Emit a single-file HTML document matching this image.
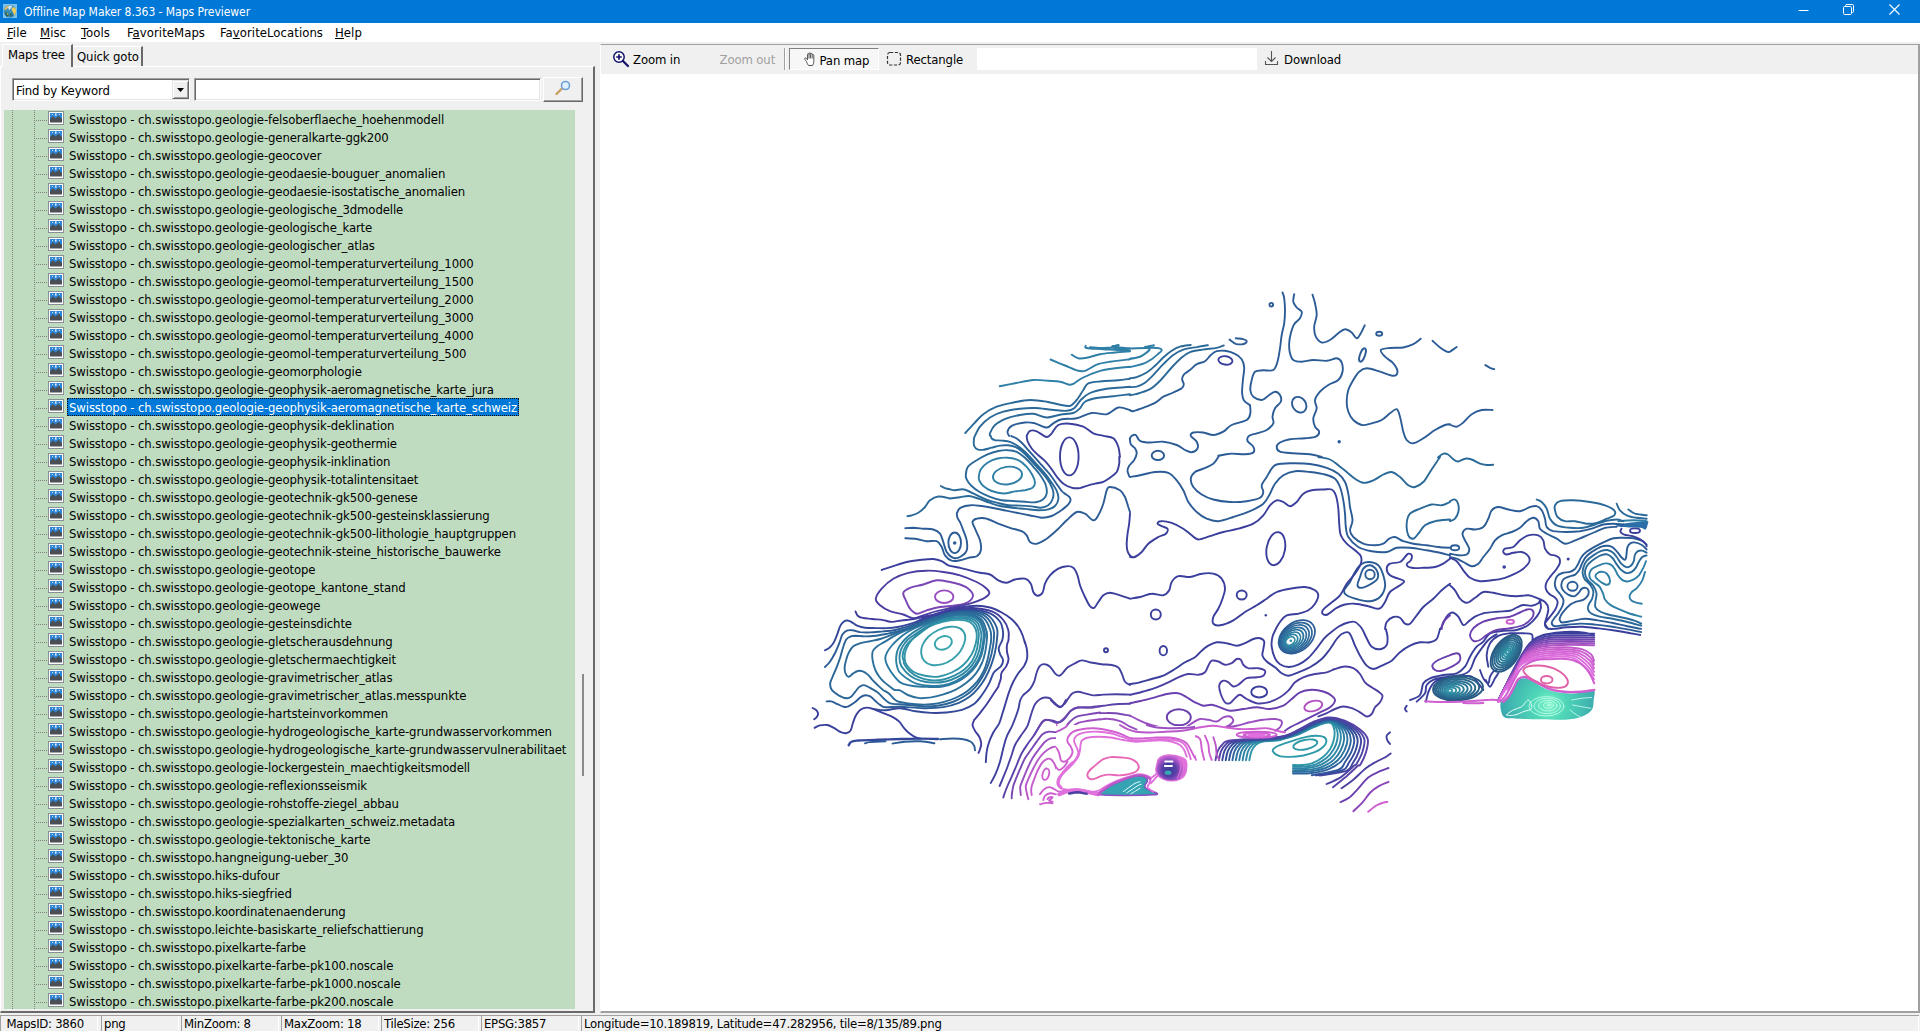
<!DOCTYPE html>
<html><head><meta charset="utf-8"><title>Offline Map Maker 8.363 - Maps Previewer</title>
<style>
*{box-sizing:border-box;margin:0;padding:0}
html,body{width:1920px;height:1032px;overflow:hidden;background:#f0f0f0}
body{position:relative;font-family:"DejaVu Sans Condensed","Liberation Sans",sans-serif;font-size:13px;color:#000;letter-spacing:-0.12px}
#title{position:absolute;left:0;top:0;width:1920px;height:23px;background:#0078d7;color:#fff}
#appic{position:absolute;left:3px;top:4px}
#ttl{position:absolute;left:24px;top:4px;line-height:16px;white-space:nowrap;font-size:12px;letter-spacing:-0.05px}
#wmin{position:absolute;left:1798px;top:5px}
#wmax{position:absolute;left:1843px;top:4px}
#wcls{position:absolute;left:1889px;top:4px}
#menu{position:absolute;left:0;top:23px;width:1920px;height:19px;background:#fff}
#menu span{position:absolute;top:2px;line-height:16px;white-space:nowrap;letter-spacing:0.05px}
#menu u{text-decoration:underline;text-underline-offset:1px}
#tab1{position:absolute;left:2px;top:44px;width:71px;height:23px;background:#f0f0f0;border-top:1px solid #fff;border-left:1px solid #fff;border-right:2px solid #696969;padding:2px 0 0 5px;line-height:16px;white-space:nowrap;z-index:2}
#tab2{position:absolute;left:73px;top:46px;width:70px;height:20px;background:#f0f0f0;border-top:1px solid #fff;border-right:2px solid #696969;padding:2px 0 0 4px;line-height:16px;white-space:nowrap}
#tabpg{position:absolute;left:0;top:66px;width:595px;height:947px;border-top:1px solid #fff;border-left:1px solid #fff;border-right:2px solid #696969;border-bottom:2px solid #696969;background:#f0f0f0}
#combo{position:absolute;left:12px;top:78px;width:178px;height:23px;background:#fff;border:1px solid;border-color:#a0a0a0 #fff #fff #a0a0a0;box-shadow:inset 1px 1px 0 #696969,inset -1px -1px 0 #e3e3e3}
#combo span{position:absolute;left:3px;top:4px;line-height:16px;white-space:nowrap}
#cbtn{position:absolute;right:0px;top:1px;width:17px;height:19px;background:#f0f0f0;border:1px solid;border-color:#e3e3e3 #696969 #696969 #e3e3e3;box-shadow:inset 1px 1px 0 #fff,inset -1px -1px 0 #a0a0a0}
#cbtn svg{position:absolute;left:4px;top:7px}
#edit{position:absolute;left:194px;top:78px;width:347px;height:23px;background:#fff;border:1px solid;border-color:#a0a0a0 #fff #fff #a0a0a0;box-shadow:inset 1px 1px 0 #696969,inset -1px -1px 0 #e3e3e3}
#sbtn{position:absolute;left:543px;top:77px;width:40px;height:25px;background:#f0f0f0;border:1px solid;border-color:#fff #696969 #696969 #fff;box-shadow:inset -1px -1px 0 #a0a0a0}
#sbtn svg{position:absolute;left:10px;top:2px}
#tree{position:absolute;left:4px;top:110px;width:570.5px;height:899.3px;background:#c0dcc0;overflow:hidden}
.vl{position:absolute;top:0;width:1px;height:900px;background-image:linear-gradient(to bottom,#808080 50%,transparent 50%);background-size:1px 2px}
.row{position:relative;height:18px;white-space:nowrap}
.hl{position:absolute;left:32px;top:10px;width:12px;height:1px;background-image:linear-gradient(to right,#808080 50%,transparent 50%);background-size:2px 1px}
.ic{position:absolute;left:44px;top:1px}
.t{position:absolute;left:63px;top:0;height:18px;line-height:20px;padding:0 2px}
.t.sel{background:#0078d7;color:#fff;outline:1px dotted #111;outline-offset:-1px}
#scroll{position:absolute;left:582px;top:674px;width:2px;height:102px;background:#8a8a8a}
#right{position:absolute;left:600px;top:44px;width:1320px;height:969px;background:#fff;border-top:1px solid #a0a0a0;border-left:1px solid #fff;border-right:2px solid #a0a0a0;border-bottom:2px solid #a0a0a0}
#tb{position:absolute;left:0;top:0;width:1317px;height:29px;background:#f0f0f0}
.tl{position:absolute;top:7px;line-height:16px;white-space:nowrap}
.tl.dis{color:#a0a0a0}
.sep{position:absolute;left:183px;top:3px;width:2px;height:22px;border-left:1px solid #a0a0a0;border-right:1px solid #fff}
#pan{position:absolute;left:188px;top:3px;width:90px;height:22px;background:#f7f7f7;border:1px solid #fff;border-top-color:#808080;border-left-color:#808080}
#tbedit{position:absolute;left:376px;top:3px;width:280px;height:22px;background:#fff}
#map{position:absolute;left:0;top:29px;width:1317px;height:937px;overflow:hidden}
#hsep{position:absolute;left:0;top:1015px;width:1919px;height:1px;background:#a0a0a0}
#status{position:absolute;left:0;top:1016px;width:1920px;height:16px;background:#f0f0f0;border-bottom:1px solid #fff}
.sp{position:absolute;top:0;height:15px;border-left:1px solid #a0a0a0;border-right:1px solid #fff}
.sp span{position:absolute;left:2px;top:-0.5px;letter-spacing:-0.28px;line-height:16px;white-space:nowrap}

</style></head>
<body>
<div id="title">
  <svg id="appic" width="14" height="14" viewBox="0 0 14 14"><rect x="0" y="0" width="14" height="14" fill="#7cc2ee"/><circle cx="7" cy="7.2" r="6.3" fill="#3d8fb8"/><path d="M1.2 5.5 C2 3 4 1.6 6 1.4 C5.5 3 4.6 4.4 3 5.6 C2.4 6 1.6 6 1.2 5.5Z" fill="#f0b860"/><path d="M8.8 4.5 C10 2.6 12 3 12.8 5 C13.4 7.4 12.8 10 11.4 11.8 C10.6 10 10.8 8.6 9.6 7.4 C8.8 6.6 8.4 5.4 8.8 4.5Z" fill="#f2cc5a"/><path d="M5.2 2.2 C6.5 1.2 8.5 1.4 9.2 2.6 C8.6 4.2 7.4 5.4 6 6 C5.4 4.8 5 3.4 5.2 2.2Z" fill="#cfe6f2"/><path d="M2 8.5 C3.5 8 5.5 9 6 11 C5.6 12.4 4.6 13 3.6 12.6 C2.6 11.6 2 10 2 8.5Z" fill="#2a5f58"/><path d="M3.6 9 C4.6 9.2 5.4 10 5.4 11.2 C4.6 11 3.8 10.2 3.6 9Z" fill="#e8c850"/><path d="M7 9 C8.4 8.6 9.6 9.6 9.8 11.4 C9 12.8 7.8 13.2 7 12.6 C6.6 11.4 6.6 10 7 9Z" fill="#2c6a78"/></svg>
  <span id="ttl">Offline Map Maker 8.363 - Maps Previewer</span>
  <svg id="wmin" width="12" height="12" viewBox="0 0 12 12"><path d="M0.5 5.5 H10.5" stroke="#fff" stroke-width="1"/></svg>
  <svg id="wmax" width="12" height="12" viewBox="0 0 12 12"><rect x="0.5" y="2.5" width="8" height="8" rx="1.2" fill="none" stroke="#fff"/><path d="M2.5 2.5 V1.7 Q2.5 0.5 3.7 0.5 H9.3 Q10.5 0.5 10.5 1.7 V7.3 Q10.5 8.5 9.3 8.5 H8.5" fill="none" stroke="#fff"/></svg>
  <svg id="wcls" width="12" height="12" viewBox="0 0 12 12"><path d="M0.5 0.5 L10.5 10.5 M10.5 0.5 L0.5 10.5" stroke="#fff" stroke-width="1.1"/></svg>
</div>
<div id="menu">
  <span style="left:7px"><u>F</u>ile</span>
  <span style="left:40px"><u>M</u>isc</span>
  <span style="left:81px"><u>T</u>ools</span>
  <span style="left:127px">F<u>a</u>voriteMaps</span>
  <span style="left:220px">Fa<u>v</u>oriteLocations</span>
  <span style="left:335px"><u>H</u>elp</span>
</div>
<div id="tab1">Maps tree</div>
<div id="tab2">Quick goto</div>
<div id="tabpg"></div>
<div id="combo"><span>Find by Keyword</span><div id="cbtn"><svg width="7" height="4" viewBox="0 0 7 4"><path d="M0 0 H7 L3.5 4Z" fill="#000"/></svg></div></div>
<div id="edit"></div>
<div id="sbtn"><svg width="18" height="16" viewBox="0 0 18 16"><path d="M2.5 14 L8.5 8" stroke="#c8a064" stroke-width="2.4" stroke-linecap="round"/><circle cx="11.5" cy="5.5" r="4" fill="#dff0ff" stroke="#6f9fd8" stroke-width="1.6"/></svg></div>
<div id="tree">
<i class="vl" style="left:8px"></i><i class="vl" style="left:30px"></i>
<div class="row"><i class="hl"></i><svg class="ic" width="16" height="14" viewBox="0 0 16 14"><rect x="0.5" y="0.5" width="15" height="13" fill="#fff" stroke="#8a8f96"/><rect x="2" y="2" width="12" height="6" fill="#2f86d6"/><path d="M2 11.5 V8 L5 5.2 L7.6 7.6 L10.6 4.8 L14 8 V11.5 Z" fill="#4a4f55"/><rect x="4" y="3" width="1" height="1" fill="#cfe6ff"/><rect x="7" y="2.6" width="1.6" height="2" fill="#e6f2ff"/><rect x="11" y="3" width="1" height="1" fill="#cfe6ff"/></svg><span class="t">Swisstopo - ch.swisstopo.geologie-felsoberflaeche_hoehenmodell</span></div>
<div class="row"><i class="hl"></i><svg class="ic" width="16" height="14" viewBox="0 0 16 14"><rect x="0.5" y="0.5" width="15" height="13" fill="#fff" stroke="#8a8f96"/><rect x="2" y="2" width="12" height="6" fill="#2f86d6"/><path d="M2 11.5 V8 L5 5.2 L7.6 7.6 L10.6 4.8 L14 8 V11.5 Z" fill="#4a4f55"/><rect x="4" y="3" width="1" height="1" fill="#cfe6ff"/><rect x="7" y="2.6" width="1.6" height="2" fill="#e6f2ff"/><rect x="11" y="3" width="1" height="1" fill="#cfe6ff"/></svg><span class="t">Swisstopo - ch.swisstopo.geologie-generalkarte-ggk200</span></div>
<div class="row"><i class="hl"></i><svg class="ic" width="16" height="14" viewBox="0 0 16 14"><rect x="0.5" y="0.5" width="15" height="13" fill="#fff" stroke="#8a8f96"/><rect x="2" y="2" width="12" height="6" fill="#2f86d6"/><path d="M2 11.5 V8 L5 5.2 L7.6 7.6 L10.6 4.8 L14 8 V11.5 Z" fill="#4a4f55"/><rect x="4" y="3" width="1" height="1" fill="#cfe6ff"/><rect x="7" y="2.6" width="1.6" height="2" fill="#e6f2ff"/><rect x="11" y="3" width="1" height="1" fill="#cfe6ff"/></svg><span class="t">Swisstopo - ch.swisstopo.geologie-geocover</span></div>
<div class="row"><i class="hl"></i><svg class="ic" width="16" height="14" viewBox="0 0 16 14"><rect x="0.5" y="0.5" width="15" height="13" fill="#fff" stroke="#8a8f96"/><rect x="2" y="2" width="12" height="6" fill="#2f86d6"/><path d="M2 11.5 V8 L5 5.2 L7.6 7.6 L10.6 4.8 L14 8 V11.5 Z" fill="#4a4f55"/><rect x="4" y="3" width="1" height="1" fill="#cfe6ff"/><rect x="7" y="2.6" width="1.6" height="2" fill="#e6f2ff"/><rect x="11" y="3" width="1" height="1" fill="#cfe6ff"/></svg><span class="t">Swisstopo - ch.swisstopo.geologie-geodaesie-bouguer_anomalien</span></div>
<div class="row"><i class="hl"></i><svg class="ic" width="16" height="14" viewBox="0 0 16 14"><rect x="0.5" y="0.5" width="15" height="13" fill="#fff" stroke="#8a8f96"/><rect x="2" y="2" width="12" height="6" fill="#2f86d6"/><path d="M2 11.5 V8 L5 5.2 L7.6 7.6 L10.6 4.8 L14 8 V11.5 Z" fill="#4a4f55"/><rect x="4" y="3" width="1" height="1" fill="#cfe6ff"/><rect x="7" y="2.6" width="1.6" height="2" fill="#e6f2ff"/><rect x="11" y="3" width="1" height="1" fill="#cfe6ff"/></svg><span class="t">Swisstopo - ch.swisstopo.geologie-geodaesie-isostatische_anomalien</span></div>
<div class="row"><i class="hl"></i><svg class="ic" width="16" height="14" viewBox="0 0 16 14"><rect x="0.5" y="0.5" width="15" height="13" fill="#fff" stroke="#8a8f96"/><rect x="2" y="2" width="12" height="6" fill="#2f86d6"/><path d="M2 11.5 V8 L5 5.2 L7.6 7.6 L10.6 4.8 L14 8 V11.5 Z" fill="#4a4f55"/><rect x="4" y="3" width="1" height="1" fill="#cfe6ff"/><rect x="7" y="2.6" width="1.6" height="2" fill="#e6f2ff"/><rect x="11" y="3" width="1" height="1" fill="#cfe6ff"/></svg><span class="t">Swisstopo - ch.swisstopo.geologie-geologische_3dmodelle</span></div>
<div class="row"><i class="hl"></i><svg class="ic" width="16" height="14" viewBox="0 0 16 14"><rect x="0.5" y="0.5" width="15" height="13" fill="#fff" stroke="#8a8f96"/><rect x="2" y="2" width="12" height="6" fill="#2f86d6"/><path d="M2 11.5 V8 L5 5.2 L7.6 7.6 L10.6 4.8 L14 8 V11.5 Z" fill="#4a4f55"/><rect x="4" y="3" width="1" height="1" fill="#cfe6ff"/><rect x="7" y="2.6" width="1.6" height="2" fill="#e6f2ff"/><rect x="11" y="3" width="1" height="1" fill="#cfe6ff"/></svg><span class="t">Swisstopo - ch.swisstopo.geologie-geologische_karte</span></div>
<div class="row"><i class="hl"></i><svg class="ic" width="16" height="14" viewBox="0 0 16 14"><rect x="0.5" y="0.5" width="15" height="13" fill="#fff" stroke="#8a8f96"/><rect x="2" y="2" width="12" height="6" fill="#2f86d6"/><path d="M2 11.5 V8 L5 5.2 L7.6 7.6 L10.6 4.8 L14 8 V11.5 Z" fill="#4a4f55"/><rect x="4" y="3" width="1" height="1" fill="#cfe6ff"/><rect x="7" y="2.6" width="1.6" height="2" fill="#e6f2ff"/><rect x="11" y="3" width="1" height="1" fill="#cfe6ff"/></svg><span class="t">Swisstopo - ch.swisstopo.geologie-geologischer_atlas</span></div>
<div class="row"><i class="hl"></i><svg class="ic" width="16" height="14" viewBox="0 0 16 14"><rect x="0.5" y="0.5" width="15" height="13" fill="#fff" stroke="#8a8f96"/><rect x="2" y="2" width="12" height="6" fill="#2f86d6"/><path d="M2 11.5 V8 L5 5.2 L7.6 7.6 L10.6 4.8 L14 8 V11.5 Z" fill="#4a4f55"/><rect x="4" y="3" width="1" height="1" fill="#cfe6ff"/><rect x="7" y="2.6" width="1.6" height="2" fill="#e6f2ff"/><rect x="11" y="3" width="1" height="1" fill="#cfe6ff"/></svg><span class="t">Swisstopo - ch.swisstopo.geologie-geomol-temperaturverteilung_1000</span></div>
<div class="row"><i class="hl"></i><svg class="ic" width="16" height="14" viewBox="0 0 16 14"><rect x="0.5" y="0.5" width="15" height="13" fill="#fff" stroke="#8a8f96"/><rect x="2" y="2" width="12" height="6" fill="#2f86d6"/><path d="M2 11.5 V8 L5 5.2 L7.6 7.6 L10.6 4.8 L14 8 V11.5 Z" fill="#4a4f55"/><rect x="4" y="3" width="1" height="1" fill="#cfe6ff"/><rect x="7" y="2.6" width="1.6" height="2" fill="#e6f2ff"/><rect x="11" y="3" width="1" height="1" fill="#cfe6ff"/></svg><span class="t">Swisstopo - ch.swisstopo.geologie-geomol-temperaturverteilung_1500</span></div>
<div class="row"><i class="hl"></i><svg class="ic" width="16" height="14" viewBox="0 0 16 14"><rect x="0.5" y="0.5" width="15" height="13" fill="#fff" stroke="#8a8f96"/><rect x="2" y="2" width="12" height="6" fill="#2f86d6"/><path d="M2 11.5 V8 L5 5.2 L7.6 7.6 L10.6 4.8 L14 8 V11.5 Z" fill="#4a4f55"/><rect x="4" y="3" width="1" height="1" fill="#cfe6ff"/><rect x="7" y="2.6" width="1.6" height="2" fill="#e6f2ff"/><rect x="11" y="3" width="1" height="1" fill="#cfe6ff"/></svg><span class="t">Swisstopo - ch.swisstopo.geologie-geomol-temperaturverteilung_2000</span></div>
<div class="row"><i class="hl"></i><svg class="ic" width="16" height="14" viewBox="0 0 16 14"><rect x="0.5" y="0.5" width="15" height="13" fill="#fff" stroke="#8a8f96"/><rect x="2" y="2" width="12" height="6" fill="#2f86d6"/><path d="M2 11.5 V8 L5 5.2 L7.6 7.6 L10.6 4.8 L14 8 V11.5 Z" fill="#4a4f55"/><rect x="4" y="3" width="1" height="1" fill="#cfe6ff"/><rect x="7" y="2.6" width="1.6" height="2" fill="#e6f2ff"/><rect x="11" y="3" width="1" height="1" fill="#cfe6ff"/></svg><span class="t">Swisstopo - ch.swisstopo.geologie-geomol-temperaturverteilung_3000</span></div>
<div class="row"><i class="hl"></i><svg class="ic" width="16" height="14" viewBox="0 0 16 14"><rect x="0.5" y="0.5" width="15" height="13" fill="#fff" stroke="#8a8f96"/><rect x="2" y="2" width="12" height="6" fill="#2f86d6"/><path d="M2 11.5 V8 L5 5.2 L7.6 7.6 L10.6 4.8 L14 8 V11.5 Z" fill="#4a4f55"/><rect x="4" y="3" width="1" height="1" fill="#cfe6ff"/><rect x="7" y="2.6" width="1.6" height="2" fill="#e6f2ff"/><rect x="11" y="3" width="1" height="1" fill="#cfe6ff"/></svg><span class="t">Swisstopo - ch.swisstopo.geologie-geomol-temperaturverteilung_4000</span></div>
<div class="row"><i class="hl"></i><svg class="ic" width="16" height="14" viewBox="0 0 16 14"><rect x="0.5" y="0.5" width="15" height="13" fill="#fff" stroke="#8a8f96"/><rect x="2" y="2" width="12" height="6" fill="#2f86d6"/><path d="M2 11.5 V8 L5 5.2 L7.6 7.6 L10.6 4.8 L14 8 V11.5 Z" fill="#4a4f55"/><rect x="4" y="3" width="1" height="1" fill="#cfe6ff"/><rect x="7" y="2.6" width="1.6" height="2" fill="#e6f2ff"/><rect x="11" y="3" width="1" height="1" fill="#cfe6ff"/></svg><span class="t">Swisstopo - ch.swisstopo.geologie-geomol-temperaturverteilung_500</span></div>
<div class="row"><i class="hl"></i><svg class="ic" width="16" height="14" viewBox="0 0 16 14"><rect x="0.5" y="0.5" width="15" height="13" fill="#fff" stroke="#8a8f96"/><rect x="2" y="2" width="12" height="6" fill="#2f86d6"/><path d="M2 11.5 V8 L5 5.2 L7.6 7.6 L10.6 4.8 L14 8 V11.5 Z" fill="#4a4f55"/><rect x="4" y="3" width="1" height="1" fill="#cfe6ff"/><rect x="7" y="2.6" width="1.6" height="2" fill="#e6f2ff"/><rect x="11" y="3" width="1" height="1" fill="#cfe6ff"/></svg><span class="t">Swisstopo - ch.swisstopo.geologie-geomorphologie</span></div>
<div class="row"><i class="hl"></i><svg class="ic" width="16" height="14" viewBox="0 0 16 14"><rect x="0.5" y="0.5" width="15" height="13" fill="#fff" stroke="#8a8f96"/><rect x="2" y="2" width="12" height="6" fill="#2f86d6"/><path d="M2 11.5 V8 L5 5.2 L7.6 7.6 L10.6 4.8 L14 8 V11.5 Z" fill="#4a4f55"/><rect x="4" y="3" width="1" height="1" fill="#cfe6ff"/><rect x="7" y="2.6" width="1.6" height="2" fill="#e6f2ff"/><rect x="11" y="3" width="1" height="1" fill="#cfe6ff"/></svg><span class="t">Swisstopo - ch.swisstopo.geologie-geophysik-aeromagnetische_karte_jura</span></div>
<div class="row"><i class="hl"></i><svg class="ic" width="16" height="14" viewBox="0 0 16 14"><rect x="0.5" y="0.5" width="15" height="13" fill="#fff" stroke="#8a8f96"/><rect x="2" y="2" width="12" height="6" fill="#2f86d6"/><path d="M2 11.5 V8 L5 5.2 L7.6 7.6 L10.6 4.8 L14 8 V11.5 Z" fill="#4a4f55"/><rect x="4" y="3" width="1" height="1" fill="#cfe6ff"/><rect x="7" y="2.6" width="1.6" height="2" fill="#e6f2ff"/><rect x="11" y="3" width="1" height="1" fill="#cfe6ff"/></svg><span class="t sel">Swisstopo - ch.swisstopo.geologie-geophysik-aeromagnetische_karte_schweiz</span></div>
<div class="row"><i class="hl"></i><svg class="ic" width="16" height="14" viewBox="0 0 16 14"><rect x="0.5" y="0.5" width="15" height="13" fill="#fff" stroke="#8a8f96"/><rect x="2" y="2" width="12" height="6" fill="#2f86d6"/><path d="M2 11.5 V8 L5 5.2 L7.6 7.6 L10.6 4.8 L14 8 V11.5 Z" fill="#4a4f55"/><rect x="4" y="3" width="1" height="1" fill="#cfe6ff"/><rect x="7" y="2.6" width="1.6" height="2" fill="#e6f2ff"/><rect x="11" y="3" width="1" height="1" fill="#cfe6ff"/></svg><span class="t">Swisstopo - ch.swisstopo.geologie-geophysik-deklination</span></div>
<div class="row"><i class="hl"></i><svg class="ic" width="16" height="14" viewBox="0 0 16 14"><rect x="0.5" y="0.5" width="15" height="13" fill="#fff" stroke="#8a8f96"/><rect x="2" y="2" width="12" height="6" fill="#2f86d6"/><path d="M2 11.5 V8 L5 5.2 L7.6 7.6 L10.6 4.8 L14 8 V11.5 Z" fill="#4a4f55"/><rect x="4" y="3" width="1" height="1" fill="#cfe6ff"/><rect x="7" y="2.6" width="1.6" height="2" fill="#e6f2ff"/><rect x="11" y="3" width="1" height="1" fill="#cfe6ff"/></svg><span class="t">Swisstopo - ch.swisstopo.geologie-geophysik-geothermie</span></div>
<div class="row"><i class="hl"></i><svg class="ic" width="16" height="14" viewBox="0 0 16 14"><rect x="0.5" y="0.5" width="15" height="13" fill="#fff" stroke="#8a8f96"/><rect x="2" y="2" width="12" height="6" fill="#2f86d6"/><path d="M2 11.5 V8 L5 5.2 L7.6 7.6 L10.6 4.8 L14 8 V11.5 Z" fill="#4a4f55"/><rect x="4" y="3" width="1" height="1" fill="#cfe6ff"/><rect x="7" y="2.6" width="1.6" height="2" fill="#e6f2ff"/><rect x="11" y="3" width="1" height="1" fill="#cfe6ff"/></svg><span class="t">Swisstopo - ch.swisstopo.geologie-geophysik-inklination</span></div>
<div class="row"><i class="hl"></i><svg class="ic" width="16" height="14" viewBox="0 0 16 14"><rect x="0.5" y="0.5" width="15" height="13" fill="#fff" stroke="#8a8f96"/><rect x="2" y="2" width="12" height="6" fill="#2f86d6"/><path d="M2 11.5 V8 L5 5.2 L7.6 7.6 L10.6 4.8 L14 8 V11.5 Z" fill="#4a4f55"/><rect x="4" y="3" width="1" height="1" fill="#cfe6ff"/><rect x="7" y="2.6" width="1.6" height="2" fill="#e6f2ff"/><rect x="11" y="3" width="1" height="1" fill="#cfe6ff"/></svg><span class="t">Swisstopo - ch.swisstopo.geologie-geophysik-totalintensitaet</span></div>
<div class="row"><i class="hl"></i><svg class="ic" width="16" height="14" viewBox="0 0 16 14"><rect x="0.5" y="0.5" width="15" height="13" fill="#fff" stroke="#8a8f96"/><rect x="2" y="2" width="12" height="6" fill="#2f86d6"/><path d="M2 11.5 V8 L5 5.2 L7.6 7.6 L10.6 4.8 L14 8 V11.5 Z" fill="#4a4f55"/><rect x="4" y="3" width="1" height="1" fill="#cfe6ff"/><rect x="7" y="2.6" width="1.6" height="2" fill="#e6f2ff"/><rect x="11" y="3" width="1" height="1" fill="#cfe6ff"/></svg><span class="t">Swisstopo - ch.swisstopo.geologie-geotechnik-gk500-genese</span></div>
<div class="row"><i class="hl"></i><svg class="ic" width="16" height="14" viewBox="0 0 16 14"><rect x="0.5" y="0.5" width="15" height="13" fill="#fff" stroke="#8a8f96"/><rect x="2" y="2" width="12" height="6" fill="#2f86d6"/><path d="M2 11.5 V8 L5 5.2 L7.6 7.6 L10.6 4.8 L14 8 V11.5 Z" fill="#4a4f55"/><rect x="4" y="3" width="1" height="1" fill="#cfe6ff"/><rect x="7" y="2.6" width="1.6" height="2" fill="#e6f2ff"/><rect x="11" y="3" width="1" height="1" fill="#cfe6ff"/></svg><span class="t">Swisstopo - ch.swisstopo.geologie-geotechnik-gk500-gesteinsklassierung</span></div>
<div class="row"><i class="hl"></i><svg class="ic" width="16" height="14" viewBox="0 0 16 14"><rect x="0.5" y="0.5" width="15" height="13" fill="#fff" stroke="#8a8f96"/><rect x="2" y="2" width="12" height="6" fill="#2f86d6"/><path d="M2 11.5 V8 L5 5.2 L7.6 7.6 L10.6 4.8 L14 8 V11.5 Z" fill="#4a4f55"/><rect x="4" y="3" width="1" height="1" fill="#cfe6ff"/><rect x="7" y="2.6" width="1.6" height="2" fill="#e6f2ff"/><rect x="11" y="3" width="1" height="1" fill="#cfe6ff"/></svg><span class="t">Swisstopo - ch.swisstopo.geologie-geotechnik-gk500-lithologie_hauptgruppen</span></div>
<div class="row"><i class="hl"></i><svg class="ic" width="16" height="14" viewBox="0 0 16 14"><rect x="0.5" y="0.5" width="15" height="13" fill="#fff" stroke="#8a8f96"/><rect x="2" y="2" width="12" height="6" fill="#2f86d6"/><path d="M2 11.5 V8 L5 5.2 L7.6 7.6 L10.6 4.8 L14 8 V11.5 Z" fill="#4a4f55"/><rect x="4" y="3" width="1" height="1" fill="#cfe6ff"/><rect x="7" y="2.6" width="1.6" height="2" fill="#e6f2ff"/><rect x="11" y="3" width="1" height="1" fill="#cfe6ff"/></svg><span class="t">Swisstopo - ch.swisstopo.geologie-geotechnik-steine_historische_bauwerke</span></div>
<div class="row"><i class="hl"></i><svg class="ic" width="16" height="14" viewBox="0 0 16 14"><rect x="0.5" y="0.5" width="15" height="13" fill="#fff" stroke="#8a8f96"/><rect x="2" y="2" width="12" height="6" fill="#2f86d6"/><path d="M2 11.5 V8 L5 5.2 L7.6 7.6 L10.6 4.8 L14 8 V11.5 Z" fill="#4a4f55"/><rect x="4" y="3" width="1" height="1" fill="#cfe6ff"/><rect x="7" y="2.6" width="1.6" height="2" fill="#e6f2ff"/><rect x="11" y="3" width="1" height="1" fill="#cfe6ff"/></svg><span class="t">Swisstopo - ch.swisstopo.geologie-geotope</span></div>
<div class="row"><i class="hl"></i><svg class="ic" width="16" height="14" viewBox="0 0 16 14"><rect x="0.5" y="0.5" width="15" height="13" fill="#fff" stroke="#8a8f96"/><rect x="2" y="2" width="12" height="6" fill="#2f86d6"/><path d="M2 11.5 V8 L5 5.2 L7.6 7.6 L10.6 4.8 L14 8 V11.5 Z" fill="#4a4f55"/><rect x="4" y="3" width="1" height="1" fill="#cfe6ff"/><rect x="7" y="2.6" width="1.6" height="2" fill="#e6f2ff"/><rect x="11" y="3" width="1" height="1" fill="#cfe6ff"/></svg><span class="t">Swisstopo - ch.swisstopo.geologie-geotope_kantone_stand</span></div>
<div class="row"><i class="hl"></i><svg class="ic" width="16" height="14" viewBox="0 0 16 14"><rect x="0.5" y="0.5" width="15" height="13" fill="#fff" stroke="#8a8f96"/><rect x="2" y="2" width="12" height="6" fill="#2f86d6"/><path d="M2 11.5 V8 L5 5.2 L7.6 7.6 L10.6 4.8 L14 8 V11.5 Z" fill="#4a4f55"/><rect x="4" y="3" width="1" height="1" fill="#cfe6ff"/><rect x="7" y="2.6" width="1.6" height="2" fill="#e6f2ff"/><rect x="11" y="3" width="1" height="1" fill="#cfe6ff"/></svg><span class="t">Swisstopo - ch.swisstopo.geologie-geowege</span></div>
<div class="row"><i class="hl"></i><svg class="ic" width="16" height="14" viewBox="0 0 16 14"><rect x="0.5" y="0.5" width="15" height="13" fill="#fff" stroke="#8a8f96"/><rect x="2" y="2" width="12" height="6" fill="#2f86d6"/><path d="M2 11.5 V8 L5 5.2 L7.6 7.6 L10.6 4.8 L14 8 V11.5 Z" fill="#4a4f55"/><rect x="4" y="3" width="1" height="1" fill="#cfe6ff"/><rect x="7" y="2.6" width="1.6" height="2" fill="#e6f2ff"/><rect x="11" y="3" width="1" height="1" fill="#cfe6ff"/></svg><span class="t">Swisstopo - ch.swisstopo.geologie-gesteinsdichte</span></div>
<div class="row"><i class="hl"></i><svg class="ic" width="16" height="14" viewBox="0 0 16 14"><rect x="0.5" y="0.5" width="15" height="13" fill="#fff" stroke="#8a8f96"/><rect x="2" y="2" width="12" height="6" fill="#2f86d6"/><path d="M2 11.5 V8 L5 5.2 L7.6 7.6 L10.6 4.8 L14 8 V11.5 Z" fill="#4a4f55"/><rect x="4" y="3" width="1" height="1" fill="#cfe6ff"/><rect x="7" y="2.6" width="1.6" height="2" fill="#e6f2ff"/><rect x="11" y="3" width="1" height="1" fill="#cfe6ff"/></svg><span class="t">Swisstopo - ch.swisstopo.geologie-gletscherausdehnung</span></div>
<div class="row"><i class="hl"></i><svg class="ic" width="16" height="14" viewBox="0 0 16 14"><rect x="0.5" y="0.5" width="15" height="13" fill="#fff" stroke="#8a8f96"/><rect x="2" y="2" width="12" height="6" fill="#2f86d6"/><path d="M2 11.5 V8 L5 5.2 L7.6 7.6 L10.6 4.8 L14 8 V11.5 Z" fill="#4a4f55"/><rect x="4" y="3" width="1" height="1" fill="#cfe6ff"/><rect x="7" y="2.6" width="1.6" height="2" fill="#e6f2ff"/><rect x="11" y="3" width="1" height="1" fill="#cfe6ff"/></svg><span class="t">Swisstopo - ch.swisstopo.geologie-gletschermaechtigkeit</span></div>
<div class="row"><i class="hl"></i><svg class="ic" width="16" height="14" viewBox="0 0 16 14"><rect x="0.5" y="0.5" width="15" height="13" fill="#fff" stroke="#8a8f96"/><rect x="2" y="2" width="12" height="6" fill="#2f86d6"/><path d="M2 11.5 V8 L5 5.2 L7.6 7.6 L10.6 4.8 L14 8 V11.5 Z" fill="#4a4f55"/><rect x="4" y="3" width="1" height="1" fill="#cfe6ff"/><rect x="7" y="2.6" width="1.6" height="2" fill="#e6f2ff"/><rect x="11" y="3" width="1" height="1" fill="#cfe6ff"/></svg><span class="t">Swisstopo - ch.swisstopo.geologie-gravimetrischer_atlas</span></div>
<div class="row"><i class="hl"></i><svg class="ic" width="16" height="14" viewBox="0 0 16 14"><rect x="0.5" y="0.5" width="15" height="13" fill="#fff" stroke="#8a8f96"/><rect x="2" y="2" width="12" height="6" fill="#2f86d6"/><path d="M2 11.5 V8 L5 5.2 L7.6 7.6 L10.6 4.8 L14 8 V11.5 Z" fill="#4a4f55"/><rect x="4" y="3" width="1" height="1" fill="#cfe6ff"/><rect x="7" y="2.6" width="1.6" height="2" fill="#e6f2ff"/><rect x="11" y="3" width="1" height="1" fill="#cfe6ff"/></svg><span class="t">Swisstopo - ch.swisstopo.geologie-gravimetrischer_atlas.messpunkte</span></div>
<div class="row"><i class="hl"></i><svg class="ic" width="16" height="14" viewBox="0 0 16 14"><rect x="0.5" y="0.5" width="15" height="13" fill="#fff" stroke="#8a8f96"/><rect x="2" y="2" width="12" height="6" fill="#2f86d6"/><path d="M2 11.5 V8 L5 5.2 L7.6 7.6 L10.6 4.8 L14 8 V11.5 Z" fill="#4a4f55"/><rect x="4" y="3" width="1" height="1" fill="#cfe6ff"/><rect x="7" y="2.6" width="1.6" height="2" fill="#e6f2ff"/><rect x="11" y="3" width="1" height="1" fill="#cfe6ff"/></svg><span class="t">Swisstopo - ch.swisstopo.geologie-hartsteinvorkommen</span></div>
<div class="row"><i class="hl"></i><svg class="ic" width="16" height="14" viewBox="0 0 16 14"><rect x="0.5" y="0.5" width="15" height="13" fill="#fff" stroke="#8a8f96"/><rect x="2" y="2" width="12" height="6" fill="#2f86d6"/><path d="M2 11.5 V8 L5 5.2 L7.6 7.6 L10.6 4.8 L14 8 V11.5 Z" fill="#4a4f55"/><rect x="4" y="3" width="1" height="1" fill="#cfe6ff"/><rect x="7" y="2.6" width="1.6" height="2" fill="#e6f2ff"/><rect x="11" y="3" width="1" height="1" fill="#cfe6ff"/></svg><span class="t">Swisstopo - ch.swisstopo.geologie-hydrogeologische_karte-grundwasservorkommen</span></div>
<div class="row"><i class="hl"></i><svg class="ic" width="16" height="14" viewBox="0 0 16 14"><rect x="0.5" y="0.5" width="15" height="13" fill="#fff" stroke="#8a8f96"/><rect x="2" y="2" width="12" height="6" fill="#2f86d6"/><path d="M2 11.5 V8 L5 5.2 L7.6 7.6 L10.6 4.8 L14 8 V11.5 Z" fill="#4a4f55"/><rect x="4" y="3" width="1" height="1" fill="#cfe6ff"/><rect x="7" y="2.6" width="1.6" height="2" fill="#e6f2ff"/><rect x="11" y="3" width="1" height="1" fill="#cfe6ff"/></svg><span class="t">Swisstopo - ch.swisstopo.geologie-hydrogeologische_karte-grundwasservulnerabilitaet</span></div>
<div class="row"><i class="hl"></i><svg class="ic" width="16" height="14" viewBox="0 0 16 14"><rect x="0.5" y="0.5" width="15" height="13" fill="#fff" stroke="#8a8f96"/><rect x="2" y="2" width="12" height="6" fill="#2f86d6"/><path d="M2 11.5 V8 L5 5.2 L7.6 7.6 L10.6 4.8 L14 8 V11.5 Z" fill="#4a4f55"/><rect x="4" y="3" width="1" height="1" fill="#cfe6ff"/><rect x="7" y="2.6" width="1.6" height="2" fill="#e6f2ff"/><rect x="11" y="3" width="1" height="1" fill="#cfe6ff"/></svg><span class="t">Swisstopo - ch.swisstopo.geologie-lockergestein_maechtigkeitsmodell</span></div>
<div class="row"><i class="hl"></i><svg class="ic" width="16" height="14" viewBox="0 0 16 14"><rect x="0.5" y="0.5" width="15" height="13" fill="#fff" stroke="#8a8f96"/><rect x="2" y="2" width="12" height="6" fill="#2f86d6"/><path d="M2 11.5 V8 L5 5.2 L7.6 7.6 L10.6 4.8 L14 8 V11.5 Z" fill="#4a4f55"/><rect x="4" y="3" width="1" height="1" fill="#cfe6ff"/><rect x="7" y="2.6" width="1.6" height="2" fill="#e6f2ff"/><rect x="11" y="3" width="1" height="1" fill="#cfe6ff"/></svg><span class="t">Swisstopo - ch.swisstopo.geologie-reflexionsseismik</span></div>
<div class="row"><i class="hl"></i><svg class="ic" width="16" height="14" viewBox="0 0 16 14"><rect x="0.5" y="0.5" width="15" height="13" fill="#fff" stroke="#8a8f96"/><rect x="2" y="2" width="12" height="6" fill="#2f86d6"/><path d="M2 11.5 V8 L5 5.2 L7.6 7.6 L10.6 4.8 L14 8 V11.5 Z" fill="#4a4f55"/><rect x="4" y="3" width="1" height="1" fill="#cfe6ff"/><rect x="7" y="2.6" width="1.6" height="2" fill="#e6f2ff"/><rect x="11" y="3" width="1" height="1" fill="#cfe6ff"/></svg><span class="t">Swisstopo - ch.swisstopo.geologie-rohstoffe-ziegel_abbau</span></div>
<div class="row"><i class="hl"></i><svg class="ic" width="16" height="14" viewBox="0 0 16 14"><rect x="0.5" y="0.5" width="15" height="13" fill="#fff" stroke="#8a8f96"/><rect x="2" y="2" width="12" height="6" fill="#2f86d6"/><path d="M2 11.5 V8 L5 5.2 L7.6 7.6 L10.6 4.8 L14 8 V11.5 Z" fill="#4a4f55"/><rect x="4" y="3" width="1" height="1" fill="#cfe6ff"/><rect x="7" y="2.6" width="1.6" height="2" fill="#e6f2ff"/><rect x="11" y="3" width="1" height="1" fill="#cfe6ff"/></svg><span class="t">Swisstopo - ch.swisstopo.geologie-spezialkarten_schweiz.metadata</span></div>
<div class="row"><i class="hl"></i><svg class="ic" width="16" height="14" viewBox="0 0 16 14"><rect x="0.5" y="0.5" width="15" height="13" fill="#fff" stroke="#8a8f96"/><rect x="2" y="2" width="12" height="6" fill="#2f86d6"/><path d="M2 11.5 V8 L5 5.2 L7.6 7.6 L10.6 4.8 L14 8 V11.5 Z" fill="#4a4f55"/><rect x="4" y="3" width="1" height="1" fill="#cfe6ff"/><rect x="7" y="2.6" width="1.6" height="2" fill="#e6f2ff"/><rect x="11" y="3" width="1" height="1" fill="#cfe6ff"/></svg><span class="t">Swisstopo - ch.swisstopo.geologie-tektonische_karte</span></div>
<div class="row"><i class="hl"></i><svg class="ic" width="16" height="14" viewBox="0 0 16 14"><rect x="0.5" y="0.5" width="15" height="13" fill="#fff" stroke="#8a8f96"/><rect x="2" y="2" width="12" height="6" fill="#2f86d6"/><path d="M2 11.5 V8 L5 5.2 L7.6 7.6 L10.6 4.8 L14 8 V11.5 Z" fill="#4a4f55"/><rect x="4" y="3" width="1" height="1" fill="#cfe6ff"/><rect x="7" y="2.6" width="1.6" height="2" fill="#e6f2ff"/><rect x="11" y="3" width="1" height="1" fill="#cfe6ff"/></svg><span class="t">Swisstopo - ch.swisstopo.hangneigung-ueber_30</span></div>
<div class="row"><i class="hl"></i><svg class="ic" width="16" height="14" viewBox="0 0 16 14"><rect x="0.5" y="0.5" width="15" height="13" fill="#fff" stroke="#8a8f96"/><rect x="2" y="2" width="12" height="6" fill="#2f86d6"/><path d="M2 11.5 V8 L5 5.2 L7.6 7.6 L10.6 4.8 L14 8 V11.5 Z" fill="#4a4f55"/><rect x="4" y="3" width="1" height="1" fill="#cfe6ff"/><rect x="7" y="2.6" width="1.6" height="2" fill="#e6f2ff"/><rect x="11" y="3" width="1" height="1" fill="#cfe6ff"/></svg><span class="t">Swisstopo - ch.swisstopo.hiks-dufour</span></div>
<div class="row"><i class="hl"></i><svg class="ic" width="16" height="14" viewBox="0 0 16 14"><rect x="0.5" y="0.5" width="15" height="13" fill="#fff" stroke="#8a8f96"/><rect x="2" y="2" width="12" height="6" fill="#2f86d6"/><path d="M2 11.5 V8 L5 5.2 L7.6 7.6 L10.6 4.8 L14 8 V11.5 Z" fill="#4a4f55"/><rect x="4" y="3" width="1" height="1" fill="#cfe6ff"/><rect x="7" y="2.6" width="1.6" height="2" fill="#e6f2ff"/><rect x="11" y="3" width="1" height="1" fill="#cfe6ff"/></svg><span class="t">Swisstopo - ch.swisstopo.hiks-siegfried</span></div>
<div class="row"><i class="hl"></i><svg class="ic" width="16" height="14" viewBox="0 0 16 14"><rect x="0.5" y="0.5" width="15" height="13" fill="#fff" stroke="#8a8f96"/><rect x="2" y="2" width="12" height="6" fill="#2f86d6"/><path d="M2 11.5 V8 L5 5.2 L7.6 7.6 L10.6 4.8 L14 8 V11.5 Z" fill="#4a4f55"/><rect x="4" y="3" width="1" height="1" fill="#cfe6ff"/><rect x="7" y="2.6" width="1.6" height="2" fill="#e6f2ff"/><rect x="11" y="3" width="1" height="1" fill="#cfe6ff"/></svg><span class="t">Swisstopo - ch.swisstopo.koordinatenaenderung</span></div>
<div class="row"><i class="hl"></i><svg class="ic" width="16" height="14" viewBox="0 0 16 14"><rect x="0.5" y="0.5" width="15" height="13" fill="#fff" stroke="#8a8f96"/><rect x="2" y="2" width="12" height="6" fill="#2f86d6"/><path d="M2 11.5 V8 L5 5.2 L7.6 7.6 L10.6 4.8 L14 8 V11.5 Z" fill="#4a4f55"/><rect x="4" y="3" width="1" height="1" fill="#cfe6ff"/><rect x="7" y="2.6" width="1.6" height="2" fill="#e6f2ff"/><rect x="11" y="3" width="1" height="1" fill="#cfe6ff"/></svg><span class="t">Swisstopo - ch.swisstopo.leichte-basiskarte_reliefschattierung</span></div>
<div class="row"><i class="hl"></i><svg class="ic" width="16" height="14" viewBox="0 0 16 14"><rect x="0.5" y="0.5" width="15" height="13" fill="#fff" stroke="#8a8f96"/><rect x="2" y="2" width="12" height="6" fill="#2f86d6"/><path d="M2 11.5 V8 L5 5.2 L7.6 7.6 L10.6 4.8 L14 8 V11.5 Z" fill="#4a4f55"/><rect x="4" y="3" width="1" height="1" fill="#cfe6ff"/><rect x="7" y="2.6" width="1.6" height="2" fill="#e6f2ff"/><rect x="11" y="3" width="1" height="1" fill="#cfe6ff"/></svg><span class="t">Swisstopo - ch.swisstopo.pixelkarte-farbe</span></div>
<div class="row"><i class="hl"></i><svg class="ic" width="16" height="14" viewBox="0 0 16 14"><rect x="0.5" y="0.5" width="15" height="13" fill="#fff" stroke="#8a8f96"/><rect x="2" y="2" width="12" height="6" fill="#2f86d6"/><path d="M2 11.5 V8 L5 5.2 L7.6 7.6 L10.6 4.8 L14 8 V11.5 Z" fill="#4a4f55"/><rect x="4" y="3" width="1" height="1" fill="#cfe6ff"/><rect x="7" y="2.6" width="1.6" height="2" fill="#e6f2ff"/><rect x="11" y="3" width="1" height="1" fill="#cfe6ff"/></svg><span class="t">Swisstopo - ch.swisstopo.pixelkarte-farbe-pk100.noscale</span></div>
<div class="row"><i class="hl"></i><svg class="ic" width="16" height="14" viewBox="0 0 16 14"><rect x="0.5" y="0.5" width="15" height="13" fill="#fff" stroke="#8a8f96"/><rect x="2" y="2" width="12" height="6" fill="#2f86d6"/><path d="M2 11.5 V8 L5 5.2 L7.6 7.6 L10.6 4.8 L14 8 V11.5 Z" fill="#4a4f55"/><rect x="4" y="3" width="1" height="1" fill="#cfe6ff"/><rect x="7" y="2.6" width="1.6" height="2" fill="#e6f2ff"/><rect x="11" y="3" width="1" height="1" fill="#cfe6ff"/></svg><span class="t">Swisstopo - ch.swisstopo.pixelkarte-farbe-pk1000.noscale</span></div>
<div class="row"><i class="hl"></i><svg class="ic" width="16" height="14" viewBox="0 0 16 14"><rect x="0.5" y="0.5" width="15" height="13" fill="#fff" stroke="#8a8f96"/><rect x="2" y="2" width="12" height="6" fill="#2f86d6"/><path d="M2 11.5 V8 L5 5.2 L7.6 7.6 L10.6 4.8 L14 8 V11.5 Z" fill="#4a4f55"/><rect x="4" y="3" width="1" height="1" fill="#cfe6ff"/><rect x="7" y="2.6" width="1.6" height="2" fill="#e6f2ff"/><rect x="11" y="3" width="1" height="1" fill="#cfe6ff"/></svg><span class="t">Swisstopo - ch.swisstopo.pixelkarte-farbe-pk200.noscale</span></div>
</div>
<div id="scroll"></div>
<div id="right">
  <div id="tb">
    <svg style="position:absolute;left:11px;top:5px" width="18" height="18" viewBox="0 0 18 18"><circle cx="7" cy="7" r="5.2" fill="#fff" stroke="#10106a" stroke-width="1.5"/><path d="M4.2 7 H9.8 M7 4.2 V9.8" stroke="#10106a" stroke-width="1.7"/><path d="M11 11 L16 16" stroke="#10106a" stroke-width="2.2" stroke-linecap="round"/></svg>
    <span class="tl" style="left:32px">Zoom in</span>
    <span class="tl dis" style="left:118.5px">Zoom out</span>
    <i class="sep"></i>
    <div id="pan"><svg style="position:absolute;left:13px;top:3px" width="14" height="16" viewBox="0 0 14 16"><path d="M3.5 9.5 L2 7.5 Q1.2 6.5 2 6 Q2.8 5.6 3.6 6.6 L4.5 7.8 V2.5 Q4.5 1.6 5.2 1.6 Q6 1.6 6 2.5 V1.6 Q6 0.8 6.8 0.8 Q7.6 0.8 7.6 1.6 V2.2 Q7.6 1.4 8.4 1.4 Q9.2 1.4 9.2 2.2 V3.2 Q9.2 2.5 10 2.5 Q10.8 2.5 10.8 3.4 V9.5 Q10.8 12 9.5 13.5 H5.5 Q4.3 12 3.5 9.5Z M6 2.5 V6.5 M7.6 2.2 V6.5 M9.2 3.2 V6.5" fill="#fff" stroke="#444" stroke-width="0.9" stroke-linejoin="round"/></svg><span class="tl" style="left:29.5px;top:4px">Pan map</span></div>
    <svg style="position:absolute;left:285px;top:6px" width="16" height="16" viewBox="0 0 16 16"><rect x="1.5" y="1.5" width="13" height="12.5" rx="2.5" fill="none" stroke="#333" stroke-width="1.2" stroke-dasharray="3.2 1.6"/></svg>
    <span class="tl" style="left:305px">Rectangle</span>
    <div id="tbedit"></div>
    <svg style="position:absolute;left:663px;top:4.5px" width="16" height="17" viewBox="0 0 16 17"><path d="M7.5 1 V11 M3.5 7.5 L7.5 11.5 L11.5 7.5 M1.5 11 V14.5 H13.5 V11" fill="none" stroke="#555" stroke-width="1.1"/></svg>
    <span class="tl" style="left:683px">Download</span>
  </div>
  <div id="map"><svg width="1317" height="937" viewBox="601 74 1317 937" fill="none" stroke-linecap="round" stroke-linejoin="round">
<defs><clipPath id="cp_z8"><polygon points="900,600 1101,600 1101,725 1056,725 1056,900 900,900"/></clipPath><clipPath id="cp_c1"><polygon points="1120,600 1470,600 1470,840 1195,840 1195,726 1120,726"/></clipPath><clipPath id="cp_z11"><polygon points="1056,700 1195,700 1195,830 1038,830 1038,786 1056,786"/></clipPath></defs>
<circle cx="1339.2" cy="441.7" r="1.7" fill="#2c5c96" stroke="none"/>
<circle cx="954.7" cy="543.0" r="1.8" fill="#2c5c96" stroke="none"/>
<circle cx="1265.8" cy="615.3" r="1.2" fill="#3b3f9c" stroke="none"/>
<path d="M1616.4 525.6C1617.1 525.0 1621.8 523.9 1625.3 523.3C1628.7 522.7 1633.2 522.4 1636.9 522.0C1640.6 521.7 1645.5 521.0 1647.4 521.2C1649.2 521.5 1648.2 522.2 1647.9 523.6C1647.6 525.0 1646.8 528.9 1645.6 529.6C1644.4 530.3 1643.5 528.1 1640.8 527.8C1638.0 527.4 1632.5 527.6 1629.1 527.4C1625.8 527.3 1622.8 527.3 1620.6 527.0C1618.5 526.7 1615.6 526.2 1616.4 525.6Z" fill="#2b6ea8" stroke="none"/>
<circle cx="1504.2" cy="567.0" r="1.8" fill="#3b3f9c" stroke="none"/>
<circle cx="1568.2" cy="559.1" r="1.5" fill="#3b3f9c" stroke="none"/>
<g clip-path="url(#cp_c1)"><circle cx="1290.8" cy="640.7" r="1.3" fill="#2f8aa6" stroke="none"/></g>
<defs><radialGradient id="gcy" gradientUnits="userSpaceOnUse" cx="1549.2" cy="705.0" r="48"><stop offset="0" stop-color="#7ff5c8"/><stop offset="0.35" stop-color="#4fd6b8"/><stop offset="1" stop-color="#3aa8ad"/></radialGradient></defs><path d="M1500.8 702.5C1501.7 700.1 1504.7 699.6 1506.7 697.5C1508.6 695.4 1510.8 692.6 1512.5 690.0C1514.2 687.4 1514.9 683.6 1516.7 681.7C1518.5 679.7 1520.6 678.3 1523.3 678.3C1526.1 678.3 1529.2 679.7 1533.3 681.7C1537.5 683.6 1542.8 688.1 1548.3 690.0C1553.9 691.9 1561.1 692.9 1566.7 693.3C1572.2 693.8 1577.2 693.1 1581.7 692.5C1586.2 691.9 1591.7 688.8 1593.7 690.0C1595.7 691.2 1594.0 696.7 1593.7 700.0C1593.3 703.3 1593.7 707.2 1591.7 710.0C1589.7 712.8 1586.1 715.1 1581.7 716.7C1577.2 718.3 1571.9 719.2 1565.0 719.7C1558.1 720.1 1548.1 719.3 1540.0 719.2C1531.9 719.0 1522.5 718.9 1516.7 718.7C1510.8 718.4 1507.6 718.7 1505.0 717.5C1502.4 716.3 1502.0 714.2 1501.3 711.7C1500.6 709.2 1499.9 704.9 1500.8 702.5Z" fill="url(#gcy)" stroke="none"/>
<g clip-path="url(#cp_z11)"><path d="M1100.8 794.8C1093.0 793.8 1104.3 790.2 1106.7 788.3C1109.0 786.4 1112.2 784.7 1115.0 783.3C1117.8 781.9 1120.6 781.0 1123.3 780.0C1126.1 779.0 1128.9 777.8 1131.7 777.1C1134.4 776.4 1137.6 775.8 1140.0 775.8C1142.4 775.9 1144.6 776.7 1145.8 777.5C1147.1 778.3 1147.6 779.6 1147.5 780.8C1147.4 782.1 1145.3 783.8 1145.0 785.0C1144.7 786.2 1144.9 787.4 1145.8 788.3C1146.8 789.3 1149.6 790.3 1150.8 790.8C1152.1 791.4 1153.1 791.0 1153.5 791.7C1153.9 792.3 1162.3 794.3 1153.5 794.8C1144.7 795.4 1108.6 795.9 1100.8 794.8Z" fill="#36a3b2" stroke="#8a4fc0" stroke-width="1.6"/></g>
<defs><radialGradient id="gpb" gradientUnits="userSpaceOnUse" cx="1169.2" cy="770.0" r="16"><stop offset="0" stop-color="#3a3a9a"/><stop offset="0.45" stop-color="#5a3fa8"/><stop offset="0.75" stop-color="#a855c8"/><stop offset="1" stop-color="#e070dc"/></radialGradient></defs><path d="M1156.7 765.0C1157.1 763.2 1157.2 760.7 1158.3 759.2C1159.4 757.6 1161.1 756.5 1163.3 755.8C1165.6 755.1 1168.9 754.9 1171.7 755.0C1174.4 755.1 1177.6 755.8 1180.0 756.7C1182.4 757.5 1184.7 758.3 1185.8 760.0C1187.0 761.7 1187.0 764.2 1186.8 766.7C1186.7 769.2 1186.1 772.9 1185.0 775.0C1183.9 777.1 1182.2 778.2 1180.0 779.2C1177.8 780.2 1174.4 781.0 1171.7 781.0C1168.9 781.0 1165.7 780.2 1163.3 779.2C1161.0 778.2 1158.8 776.5 1157.5 775.0C1156.2 773.5 1156.0 771.7 1155.8 770.0C1155.7 768.3 1156.2 766.8 1156.7 765.0Z" fill="url(#gpb)" stroke="#e070dc" stroke-width="1.2"/>
<g clip-path="url(#cp_z11)"><circle cx="1168.4" cy="763.8" r="2.2" fill="#3a35a0" stroke="none"/></g>
<g stroke="#2f7fa6" stroke-width="1.9">
<ellipse cx="1007.5" cy="475.6" rx="14.6" ry="8.8" transform="rotate(-8 1007.5 475.6)"/>
<path d="M1085.8 345.8C1086.0 346.2 1083.8 347.4 1086.7 348.0C1089.6 348.6 1098.1 348.8 1103.3 349.2C1108.6 349.5 1113.9 349.7 1118.3 350.0C1122.8 350.3 1128.1 350.7 1130.0 350.8M1112.5 346.3C1113.5 346.2 1117.9 345.2 1118.3 345.3C1118.8 345.4 1113.1 346.5 1115.0 347.0C1116.9 347.5 1127.5 348.1 1130.0 348.3M1071.7 354.7C1072.8 355.3 1075.8 357.8 1078.3 358.3C1080.8 358.9 1083.1 358.5 1086.7 357.8C1090.3 357.1 1095.3 355.1 1100.0 354.2C1104.7 353.3 1110.0 353.0 1115.0 352.5C1120.0 352.0 1127.5 351.5 1130.0 351.3M1050.5 359.5C1052.9 360.5 1060.6 363.7 1065.0 365.5C1069.4 367.3 1073.3 369.4 1076.7 370.3C1080.0 371.2 1081.7 371.8 1085.0 370.8C1088.3 369.9 1092.5 366.2 1096.7 364.7C1100.8 363.1 1104.4 362.6 1110.0 361.7C1115.6 360.8 1126.7 359.6 1130.0 359.2M999.7 386.3C1002.2 385.8 1009.4 384.4 1015.0 383.3C1020.6 382.3 1027.8 380.4 1033.3 380.0C1038.9 379.6 1043.9 380.6 1048.3 380.8C1052.8 381.1 1056.5 381.0 1060.0 381.7C1063.5 382.3 1066.8 384.4 1069.2 384.7C1071.5 384.9 1071.8 384.5 1074.2 383.3C1076.5 382.1 1079.0 379.6 1083.3 377.5C1087.6 375.4 1094.7 372.4 1100.0 370.8C1105.3 369.3 1110.0 369.0 1115.0 368.3C1120.0 367.6 1127.5 366.9 1130.0 366.7M1130.0 350.8C1129.4 350.6 1129.2 350.1 1126.7 349.6C1124.2 349.1 1119.0 347.9 1115.0 347.7C1111.0 347.4 1106.7 348.0 1102.5 347.9C1098.3 347.8 1092.1 347.2 1090.0 347.1M1130.0 367.1C1132.4 366.5 1140.6 364.7 1144.2 363.3C1147.8 362.0 1149.3 360.8 1151.7 359.2C1154.0 357.6 1156.7 355.2 1158.3 353.8C1160.0 352.3 1161.5 351.3 1161.7 350.4C1161.9 349.5 1161.2 348.8 1159.6 348.3C1157.9 347.9 1156.6 347.6 1151.7 347.7C1146.7 347.7 1133.6 348.4 1130.0 348.5M978.8 476.8C979.0 474.9 979.4 471.7 980.8 469.3C982.3 467.0 984.7 464.5 987.5 462.7C990.3 460.9 994.0 459.3 997.5 458.5C1001.0 457.7 1004.9 457.4 1008.3 457.7C1011.8 457.9 1015.3 458.6 1018.3 460.2C1021.4 461.7 1024.3 464.3 1026.7 466.8C1029.0 469.3 1031.1 472.5 1032.5 475.2C1033.9 477.8 1035.0 480.6 1035.0 482.7C1035.0 484.8 1034.2 486.4 1032.5 487.7C1030.8 488.9 1027.9 489.5 1025.0 490.2C1022.1 490.8 1018.6 490.9 1015.0 491.4C1011.4 492.0 1007.2 493.6 1003.3 493.5C999.4 493.4 995.0 492.2 991.7 491.0C988.3 489.8 985.3 487.7 983.3 486.0C981.3 484.3 980.3 482.5 979.6 481.0C978.8 479.5 978.5 478.8 978.8 476.8ZM1618.3 521.2C1620.8 521.0 1628.6 520.3 1633.3 520.3C1638.1 520.3 1644.4 521.0 1646.7 521.2M1646.0 561.2C1645.6 562.3 1644.5 565.3 1643.4 567.6C1642.2 569.9 1640.7 573.1 1639.1 575.1C1637.5 577.0 1635.7 578.3 1633.8 579.4C1631.8 580.4 1629.3 581.4 1627.4 581.5C1625.4 581.6 1623.7 581.0 1622.1 579.9C1620.5 578.8 1619.0 577.0 1617.8 575.1C1616.6 573.2 1615.8 570.5 1614.6 568.7C1613.4 566.9 1611.9 565.3 1610.3 564.4C1608.7 563.5 1607.0 563.2 1605.0 563.4C1603.1 563.5 1600.7 564.6 1598.6 565.5C1596.5 566.4 1593.7 567.5 1592.2 568.7C1590.7 569.9 1589.9 571.4 1589.6 573.0C1589.2 574.6 1589.3 576.7 1590.1 578.3C1590.9 579.9 1592.8 581.1 1594.4 582.6C1596.0 584.0 1598.3 585.0 1599.7 586.8C1601.1 588.6 1602.0 591.1 1602.9 593.2C1603.8 595.3 1603.8 597.6 1605.0 599.6C1606.3 601.6 1608.0 603.3 1610.3 604.9C1612.6 606.5 1615.7 607.8 1618.9 609.2C1622.1 610.6 1625.8 612.2 1629.5 613.5C1633.3 614.7 1639.3 616.1 1641.2 616.7M1595.4 576.2C1595.4 575.1 1596.3 573.7 1597.6 573.0C1598.8 572.2 1601.3 571.7 1602.9 571.9C1604.5 572.1 1606.0 572.8 1607.1 574.0C1608.3 575.3 1609.5 577.8 1609.8 579.4C1610.2 581.0 1609.9 582.7 1609.3 583.6C1608.7 584.5 1607.3 584.9 1606.1 584.7C1604.8 584.5 1603.2 583.4 1601.8 582.6C1600.4 581.7 1598.6 580.4 1597.6 579.4C1596.5 578.3 1595.4 577.2 1595.4 576.2ZM1645.0 571.9C1644.5 573.3 1643.6 577.8 1642.3 580.4C1641.0 583.1 1638.8 585.9 1637.0 587.9C1635.2 589.8 1632.9 590.7 1631.7 592.1C1630.4 593.6 1629.5 595.0 1629.5 596.4C1629.5 597.8 1630.4 599.6 1631.7 600.7C1632.9 601.7 1635.3 602.3 1637.0 602.8C1638.7 603.3 1641.0 603.5 1641.8 603.7"/>
</g>
<g stroke="#2b6a98" stroke-width="1.9">
<path d="M965.3 433.0C966.8 431.4 971.2 426.5 974.2 423.3C977.2 420.2 979.6 416.9 983.3 414.2C987.1 411.4 991.7 408.6 996.7 406.7C1001.7 404.7 1007.8 403.6 1013.3 402.5C1018.9 401.4 1024.4 400.1 1030.0 400.0C1035.6 399.9 1041.7 400.9 1046.7 401.7C1051.7 402.4 1056.1 404.0 1060.0 404.7C1063.9 405.4 1067.2 406.6 1070.0 405.8C1072.8 405.1 1074.4 402.6 1076.7 400.0C1078.9 397.4 1081.4 392.8 1083.3 390.0C1085.3 387.2 1085.3 384.8 1088.3 383.3C1091.4 381.9 1096.7 381.8 1101.7 381.3C1106.7 380.8 1113.6 380.8 1118.3 380.3C1123.1 379.9 1128.1 378.9 1130.0 378.7M974.2 437.5C975.1 435.7 977.4 430.0 980.0 426.7C982.6 423.3 986.1 420.0 990.0 417.5C993.9 415.0 998.3 413.1 1003.3 411.7C1008.3 410.2 1014.7 409.3 1020.0 408.7C1025.3 408.1 1029.7 407.8 1035.0 408.0C1040.3 408.2 1046.4 409.2 1051.7 409.7C1056.9 410.1 1062.9 411.1 1066.7 410.8C1070.4 410.6 1071.8 410.1 1074.2 408.3C1076.5 406.5 1078.2 402.6 1080.8 400.0C1083.5 397.4 1085.7 394.9 1090.0 393.0C1094.3 391.1 1101.4 389.6 1106.7 388.7C1111.9 387.8 1117.8 387.8 1121.7 387.5C1125.6 387.2 1128.6 386.8 1130.0 386.7M990.3 436.0C990.3 435.6 989.2 435.2 990.0 433.3C990.8 431.5 992.2 427.5 995.0 425.0C997.8 422.5 1002.5 420.0 1006.7 418.3C1010.8 416.7 1015.6 415.8 1020.0 415.0C1024.4 414.2 1028.9 413.4 1033.3 413.8C1037.8 414.3 1042.2 417.4 1046.7 417.5C1051.1 417.6 1055.6 415.4 1060.0 414.7C1064.4 413.9 1070.0 414.1 1073.3 413.0C1076.7 411.9 1078.1 410.2 1080.0 408.3C1081.9 406.4 1082.2 403.4 1085.0 401.7C1087.8 399.9 1091.9 398.9 1096.7 398.0C1101.4 397.1 1107.8 397.0 1113.3 396.3C1118.9 395.7 1127.2 394.5 1130.0 394.2M1130.0 378.3C1131.1 378.1 1133.9 378.1 1136.7 377.1C1139.4 376.1 1143.6 374.4 1146.7 372.5C1149.7 370.6 1152.2 368.3 1155.0 365.8C1157.8 363.3 1160.6 360.0 1163.3 357.5C1166.1 355.0 1168.9 352.6 1171.7 350.8C1174.4 349.0 1176.8 347.6 1180.0 346.7C1183.2 345.7 1189.0 345.3 1190.8 345.0M1130.0 387.1C1131.1 387.0 1134.3 387.3 1136.7 386.7C1139.0 386.0 1141.5 385.1 1144.2 383.3C1146.8 381.5 1149.3 379.0 1152.5 375.8C1155.7 372.6 1159.9 367.6 1163.3 364.2C1166.8 360.7 1170.0 357.4 1173.3 355.0C1176.7 352.6 1179.4 350.9 1183.3 349.6C1187.2 348.3 1192.6 347.8 1196.7 347.1C1200.8 346.3 1206.0 345.5 1207.9 345.2M1130.0 395.2C1131.0 395.0 1132.5 395.2 1135.8 394.2C1139.2 393.2 1145.8 391.5 1150.0 389.2C1154.2 386.8 1157.2 383.6 1160.8 380.0C1164.4 376.4 1168.2 371.2 1171.7 367.5C1175.1 363.8 1178.6 360.1 1181.7 357.5C1184.7 354.9 1186.5 353.4 1190.0 352.1C1193.5 350.8 1198.1 350.3 1202.5 349.6C1206.9 348.9 1213.1 348.6 1216.7 347.9C1220.2 347.2 1222.6 345.8 1223.8 345.4M965.8 475.2C966.0 473.1 966.1 469.3 967.9 466.8C969.7 464.3 973.4 462.2 976.7 460.2C979.9 458.1 983.9 455.9 987.5 454.3C991.1 452.8 994.9 451.7 998.3 451.0C1001.8 450.3 1005.3 450.0 1008.3 450.2C1011.4 450.3 1013.9 450.6 1016.7 451.8C1019.4 453.1 1022.2 455.2 1025.0 457.7C1027.8 460.2 1030.7 463.8 1033.3 466.8C1036.0 469.9 1038.8 472.9 1040.8 476.0C1042.9 479.1 1044.9 482.2 1045.8 485.2C1046.8 488.1 1047.1 491.1 1046.7 493.5C1046.2 495.9 1045.1 497.9 1043.3 499.3C1041.5 500.8 1038.9 501.8 1035.8 502.2C1032.8 502.7 1028.8 502.0 1025.0 501.8C1021.2 501.6 1017.2 501.3 1013.3 501.0C1009.4 500.7 1005.6 500.9 1001.7 500.2C997.8 499.5 993.8 498.2 990.0 496.8C986.2 495.4 982.4 493.8 979.2 491.8C976.0 489.9 972.9 487.2 970.8 485.2C968.8 483.1 967.5 481.0 966.7 479.3C965.8 477.7 965.6 477.2 965.8 475.2ZM974.2 437.5C974.1 438.1 973.8 439.6 973.8 441.0C973.8 442.4 973.5 444.6 974.2 446.0C974.8 447.4 976.0 448.7 977.5 449.3C979.0 450.0 981.0 450.0 983.3 449.8C985.7 449.5 988.9 448.4 991.7 447.7C994.4 447.0 997.2 446.0 1000.0 445.6C1002.8 445.2 1005.7 445.1 1008.3 445.3C1011.0 445.6 1013.5 446.2 1015.8 447.2C1018.2 448.3 1020.3 450.0 1022.5 451.8C1024.7 453.7 1026.8 456.0 1029.2 458.5C1031.5 461.0 1034.2 464.1 1036.7 466.8C1039.2 469.6 1041.9 472.4 1044.2 475.2C1046.4 477.9 1048.5 480.7 1050.0 483.5C1051.5 486.3 1052.9 489.2 1053.3 491.8C1053.8 494.5 1053.3 497.1 1052.5 499.3C1051.7 501.6 1050.3 503.8 1048.3 505.2C1046.4 506.6 1043.6 507.5 1040.8 507.7C1038.1 507.9 1035.0 506.8 1031.7 506.4C1028.3 506.1 1024.7 505.8 1020.8 505.6C1016.9 505.4 1012.4 505.7 1008.3 505.2C1004.3 504.7 1000.4 503.6 996.7 502.7C992.9 501.7 989.2 500.6 985.8 499.3C982.5 498.1 979.6 496.6 976.7 495.2C973.8 493.8 970.7 492.0 968.3 491.0C966.0 490.0 964.7 489.5 962.5 489.3C960.3 489.2 957.1 490.2 955.0 490.2C952.9 490.2 951.7 489.7 950.0 489.3C948.3 489.0 946.5 488.6 945.0 488.1C943.5 487.5 941.5 486.3 940.8 486.0M990.8 436.0C991.0 436.4 991.0 437.8 991.7 438.5C992.4 439.2 993.3 439.8 995.0 440.2C996.7 440.5 999.2 440.3 1001.7 440.6C1004.2 440.9 1007.5 441.1 1010.0 441.8C1012.5 442.6 1014.4 443.8 1016.7 445.2C1018.9 446.6 1021.1 448.2 1023.3 450.2C1025.6 452.1 1027.6 454.3 1030.0 456.8C1032.4 459.3 1035.0 462.4 1037.5 465.2C1040.0 467.9 1042.6 470.6 1045.0 473.5C1047.4 476.4 1049.7 479.6 1051.7 482.7C1053.7 485.7 1056.0 489.1 1057.1 491.8C1058.2 494.6 1058.7 497.0 1058.3 499.3C1058.0 501.7 1056.7 504.3 1055.0 506.0C1053.3 507.7 1051.1 508.6 1048.3 509.3C1045.6 510.0 1042.2 510.2 1038.3 510.2C1034.4 510.1 1029.4 509.3 1025.0 508.9C1020.6 508.5 1015.8 508.2 1011.7 507.7C1007.5 507.2 1003.8 506.8 1000.0 506.0C996.2 505.2 992.6 503.8 989.2 502.7C985.7 501.5 982.5 500.0 979.2 498.9C975.8 497.8 972.4 496.3 969.2 496.0C966.0 495.7 963.2 496.8 960.0 497.2C956.8 497.7 951.7 498.3 950.0 498.5M950.0 498.5C948.1 498.2 941.7 496.2 938.3 496.5C935.0 496.8 932.2 498.6 930.0 500.3C927.8 502.1 926.9 504.9 925.0 507.0C923.1 509.1 920.6 511.4 918.3 512.8C916.1 514.2 913.5 514.8 911.7 515.3C909.9 515.9 908.2 516.0 907.5 516.2M883.1 690.0C881.3 688.6 879.1 686.5 877.3 684.8C875.5 683.0 873.8 681.4 872.2 679.7C870.7 678.0 869.5 676.0 867.9 674.6C866.3 673.2 864.5 671.9 862.8 671.3C861.1 670.7 859.4 670.5 857.7 671.0C856.0 671.4 854.1 672.9 852.6 673.9C851.2 674.8 850.1 676.7 849.0 676.8C847.9 676.9 846.8 675.9 846.1 674.6C845.3 673.3 844.6 671.2 844.6 668.8C844.6 666.4 845.3 662.8 846.1 660.1C846.8 657.3 847.8 654.4 849.0 652.1C850.2 649.8 851.5 647.7 853.3 646.2C855.2 644.8 857.1 644.2 859.9 643.3C862.7 642.5 866.7 641.9 870.1 641.2C873.4 640.4 876.8 640.0 880.2 639.0C883.6 638.0 887.0 636.6 890.4 635.3C893.8 634.1 896.3 632.9 900.6 631.4C904.8 629.8 910.1 628.1 915.8 625.9C921.6 623.7 929.3 620.3 935.0 618.3C940.7 616.3 944.3 614.7 950.0 613.8C955.7 612.9 963.6 612.4 969.2 613.0C974.7 613.6 979.8 614.8 983.3 617.7C986.9 620.5 989.0 626.3 990.3 630.0C991.6 633.7 991.2 637.0 991.1 640.0C991.0 643.0 990.5 644.5 989.9 647.8C989.3 651.0 988.6 655.5 987.6 659.4C986.6 663.3 985.4 667.4 983.7 671.0C982.0 674.6 980.1 677.9 977.5 681.1C974.9 684.3 971.6 687.7 968.2 690.4C964.9 693.0 961.2 695.1 957.4 697.0C953.5 698.9 949.4 700.4 945.0 701.6C940.6 702.9 935.9 703.9 931.0 704.3C926.1 704.8 920.7 704.7 915.5 704.3C910.3 704.0 903.4 702.8 900.0 702.0C896.6 701.2 896.7 700.9 894.8 699.5C892.9 698.0 890.6 694.8 888.6 693.3C886.7 691.7 885.0 691.4 883.1 690.0ZM1318.3 457.0C1320.3 457.4 1326.7 458.1 1330.0 459.5C1333.3 460.9 1335.6 463.2 1338.3 465.3C1341.1 467.4 1343.9 469.8 1346.7 472.0C1349.4 474.2 1352.2 476.9 1355.0 478.7C1357.8 480.5 1360.3 482.6 1363.3 482.8C1366.4 483.1 1370.0 481.7 1373.3 480.3C1376.7 478.9 1380.3 475.9 1383.3 474.5C1386.4 473.1 1388.9 471.6 1391.7 472.0C1394.4 472.4 1397.2 474.8 1400.0 477.0C1402.8 479.2 1405.8 483.7 1408.3 485.3C1410.8 487.0 1412.5 487.6 1415.0 487.0C1417.5 486.4 1420.8 484.5 1423.3 482.0C1425.8 479.5 1427.8 475.3 1430.0 472.0C1432.2 468.7 1435.0 464.5 1436.7 462.0C1438.3 459.5 1439.4 457.8 1440.0 457.0M1450.0 502.0C1448.6 502.6 1444.7 504.9 1441.7 505.3C1438.6 505.8 1435.3 503.9 1431.7 504.5C1428.1 505.1 1423.6 507.1 1420.0 508.7C1416.4 510.2 1412.2 511.2 1410.0 513.7C1407.8 516.2 1406.9 520.1 1406.7 523.7C1406.4 527.3 1407.2 532.8 1408.3 535.3C1409.4 537.8 1411.7 538.9 1413.3 538.7C1415.0 538.4 1416.4 535.9 1418.3 533.7C1420.3 531.4 1422.2 527.4 1425.0 525.3C1427.8 523.2 1430.8 522.1 1435.0 521.2C1439.2 520.2 1447.5 519.8 1450.0 519.5M1438.0 457.5C1438.8 456.9 1441.3 454.3 1443.0 453.8C1444.7 453.3 1446.3 453.6 1448.0 454.5C1449.7 455.4 1451.3 457.8 1453.0 459.0C1454.7 460.2 1456.0 461.6 1458.0 461.5C1460.0 461.4 1462.7 459.0 1465.0 458.7C1467.3 458.3 1469.2 458.7 1471.7 459.5C1474.2 460.3 1477.5 462.8 1480.0 463.7C1482.5 464.6 1484.4 464.8 1486.7 465.0C1488.9 465.2 1492.2 464.9 1493.3 464.8M1450.0 501.2C1450.8 500.9 1453.6 498.9 1455.0 499.5C1456.4 500.1 1457.8 502.4 1458.3 504.5C1458.9 506.6 1458.9 509.6 1458.3 512.0C1457.8 514.4 1456.4 517.1 1455.0 518.7C1453.6 520.2 1450.8 520.8 1450.0 521.2M1555.0 505.3C1555.8 503.8 1556.9 502.0 1560.0 501.2C1563.1 500.3 1568.3 500.2 1573.3 500.3C1578.3 500.5 1584.7 501.2 1590.0 502.0C1595.3 502.8 1601.0 503.9 1605.0 505.3C1609.0 506.7 1612.6 508.7 1614.2 510.3C1615.7 512.0 1615.4 513.9 1614.2 515.3C1612.9 516.7 1609.6 517.4 1606.7 518.7C1603.8 519.9 1600.0 522.0 1596.7 522.8C1593.3 523.7 1590.3 523.9 1586.7 523.7C1583.1 523.4 1578.6 521.6 1575.0 521.2C1571.4 520.8 1567.9 521.9 1565.0 521.2C1562.1 520.5 1559.2 518.8 1557.5 517.0C1555.8 515.2 1555.4 512.3 1555.0 510.3C1554.6 508.4 1554.2 506.9 1555.0 505.3ZM1536.7 499.5C1537.5 499.9 1540.0 500.5 1541.7 502.0C1543.3 503.5 1545.3 505.9 1546.7 508.7C1548.1 511.4 1548.3 515.9 1550.0 518.7C1551.7 521.4 1553.3 523.8 1556.7 525.3C1560.0 526.9 1565.6 527.4 1570.0 527.8C1574.4 528.2 1579.2 528.4 1583.3 527.8C1587.5 527.3 1591.4 525.6 1595.0 524.5C1598.6 523.4 1601.4 522.0 1605.0 521.2C1608.6 520.3 1613.6 519.5 1616.7 519.5C1619.7 519.5 1622.2 520.9 1623.3 521.2M1616.7 503.7C1617.2 504.8 1618.3 508.4 1620.0 510.3C1621.7 512.3 1623.9 514.1 1626.7 515.3C1629.4 516.6 1633.3 517.3 1636.7 517.8C1640.0 518.4 1645.0 518.5 1646.7 518.7M1628.3 509.5C1629.4 510.2 1631.9 512.7 1635.0 513.7C1638.1 514.6 1644.7 515.1 1646.7 515.3M1646.6 552.7C1645.9 552.4 1643.7 550.8 1642.3 550.6C1640.9 550.3 1639.3 550.4 1638.0 551.1C1636.8 551.8 1635.6 553.2 1634.9 554.8C1634.1 556.5 1634.5 559.4 1633.8 561.2C1633.1 563.1 1631.8 565.1 1630.6 566.0C1629.3 567.0 1627.9 567.5 1626.3 567.1C1624.7 566.7 1622.6 565.1 1621.0 563.4C1619.4 561.7 1618.2 558.8 1616.7 557.0C1615.3 555.1 1614.1 553.3 1612.5 552.2C1610.9 551.0 1609.1 550.2 1607.1 550.0C1605.2 549.9 1603.1 550.2 1600.7 551.1C1598.4 552.0 1595.6 553.8 1593.3 555.4C1591.0 557.0 1588.5 558.8 1586.9 560.7C1585.3 562.6 1584.4 564.5 1583.7 566.6C1583.0 568.6 1582.5 570.8 1582.6 573.0C1582.8 575.1 1583.5 577.4 1584.8 579.4C1586.0 581.3 1588.7 582.7 1590.1 584.7C1591.5 586.6 1592.9 588.8 1593.3 591.1C1593.6 593.4 1592.9 596.4 1592.2 598.5C1591.5 600.7 1589.7 602.1 1589.0 603.9C1588.3 605.6 1587.6 607.6 1588.0 609.2C1588.3 610.8 1589.2 612.2 1591.2 613.5C1593.1 614.7 1596.1 615.8 1599.7 616.7C1603.2 617.5 1607.9 617.9 1612.5 618.8C1617.1 619.7 1622.6 620.8 1627.4 622.0C1632.2 623.1 1638.9 625.1 1641.2 625.7M1646.6 555.4C1645.9 555.6 1643.6 556.0 1642.3 557.0C1641.1 557.9 1640.2 559.5 1639.1 561.2C1638.0 563.0 1637.2 565.9 1635.9 567.6C1634.7 569.4 1633.3 571.0 1631.7 571.9C1630.1 572.8 1628.1 573.3 1626.3 573.0C1624.6 572.6 1622.6 571.2 1621.0 569.8C1619.4 568.3 1618.2 566.4 1616.7 564.4C1615.3 562.5 1614.1 559.7 1612.5 558.0C1610.9 556.4 1609.1 554.8 1607.1 554.3C1605.2 553.9 1602.9 554.6 1600.7 555.4C1598.6 556.2 1596.5 557.6 1594.4 559.1C1592.2 560.6 1589.5 562.7 1588.0 564.4C1586.4 566.2 1585.7 568.0 1585.3 569.8C1584.9 571.5 1584.9 573.3 1585.3 575.1C1585.7 576.9 1586.6 578.6 1588.0 580.4C1589.3 582.2 1591.9 583.6 1593.3 585.7C1594.7 587.9 1596.1 590.5 1596.5 593.2C1596.8 595.9 1595.6 599.4 1595.4 601.7C1595.2 604.0 1594.7 605.5 1595.4 607.1C1596.1 608.7 1597.6 610.1 1599.7 611.3C1601.8 612.6 1604.7 613.5 1608.2 614.5C1611.8 615.5 1616.7 616.2 1621.0 617.2C1625.3 618.2 1630.4 619.3 1633.8 620.4C1637.2 621.5 1640.0 623.0 1641.2 623.6"/>
</g>
<g stroke="#2c5c96" stroke-width="1.9">
<ellipse cx="1271.3" cy="304.7" rx="1.8" ry="1.8"/>
<ellipse cx="1379.2" cy="333.7" rx="3.0" ry="2.0"/>
<ellipse cx="1362.5" cy="355.0" rx="2.5" ry="7.0" transform="rotate(20 1362.5 355.0)"/>
<ellipse cx="1299.2" cy="404.7" rx="6.7" ry="8.3" transform="rotate(-35 1299.2 404.7)"/>
<ellipse cx="954.7" cy="542.8" rx="6.3" ry="10.3"/>
<ellipse cx="1370.0" cy="574.5" rx="4.7" ry="4.7"/>
<ellipse cx="1455.0" cy="547.8" rx="4.2" ry="2.5"/>
<ellipse cx="1572.5" cy="586.3" rx="5.1" ry="4.5"/>
<ellipse cx="1157.9" cy="455.4" rx="6.2" ry="4.6"/>
<path d="M1009.2 436.0C1008.9 435.3 1007.1 433.4 1007.5 431.7C1007.9 430.0 1008.8 427.4 1011.7 425.8C1014.6 424.3 1021.1 422.9 1025.0 422.5C1028.9 422.1 1031.4 422.5 1035.0 423.3C1038.6 424.2 1043.6 427.5 1046.7 427.5C1049.7 427.5 1050.8 424.7 1053.3 423.3C1055.8 421.9 1057.8 420.0 1061.7 419.2C1065.6 418.3 1071.7 419.4 1076.7 418.3C1081.7 417.3 1086.7 413.7 1091.7 413.0C1096.7 412.3 1102.2 415.1 1106.7 414.2C1111.1 413.2 1114.4 408.2 1118.3 407.5C1122.2 406.8 1128.1 409.6 1130.0 410.0M1130.0 410.4C1130.6 410.6 1131.4 411.6 1133.3 411.2C1135.3 410.9 1138.1 409.7 1141.7 408.3C1145.3 406.9 1151.4 404.9 1155.0 402.9C1158.6 401.0 1160.3 398.4 1163.3 396.7C1166.4 394.9 1170.3 393.9 1173.3 392.5C1176.4 391.1 1179.9 389.7 1181.7 388.3C1183.4 386.9 1183.7 385.7 1183.8 384.2C1183.8 382.6 1182.0 380.8 1182.1 379.2C1182.2 377.5 1182.8 375.7 1184.2 374.2C1185.5 372.6 1187.9 371.7 1190.0 370.0C1192.1 368.3 1194.2 365.6 1196.7 364.2C1199.2 362.7 1202.6 362.8 1205.0 361.2C1207.4 359.7 1208.9 356.7 1210.8 355.0C1212.8 353.3 1214.3 351.9 1216.7 351.2C1219.0 350.6 1221.9 350.4 1225.0 350.8C1228.1 351.2 1232.2 352.4 1235.0 353.8C1237.8 355.1 1240.1 356.9 1241.7 359.2C1243.2 361.5 1244.0 364.0 1244.2 367.5C1244.4 371.0 1243.3 375.8 1242.9 380.0C1242.6 384.2 1241.9 389.0 1242.1 392.5C1242.3 396.0 1242.8 398.8 1244.2 400.8C1245.5 402.9 1249.0 404.3 1250.0 405.0M1229.6 339.6C1230.6 340.3 1233.7 343.0 1235.8 343.8C1238.0 344.5 1240.7 344.5 1242.5 344.2C1244.3 343.8 1246.5 342.5 1246.7 341.7C1246.8 340.8 1245.1 339.7 1243.3 339.2C1241.5 338.6 1237.1 338.5 1235.8 338.3M1250.0 405.3C1250.1 406.7 1250.9 410.9 1250.3 413.3C1249.8 415.8 1249.8 418.1 1246.7 420.0C1243.6 421.9 1235.6 423.1 1231.7 425.0C1227.8 426.9 1226.4 430.0 1223.3 431.7C1220.3 433.3 1216.7 434.9 1213.3 435.0C1210.0 435.1 1206.7 432.9 1203.3 432.5C1200.0 432.1 1195.4 431.9 1193.3 432.5C1191.2 433.1 1190.3 434.3 1190.8 435.8C1191.4 437.4 1195.6 439.6 1196.7 441.7C1197.8 443.7 1198.3 446.6 1197.5 448.3C1196.7 450.1 1193.8 451.9 1191.7 452.2C1189.6 452.4 1187.5 451.2 1185.0 450.0C1182.5 448.8 1180.3 446.4 1176.7 445.0C1173.1 443.6 1167.8 442.1 1163.3 441.7C1158.9 441.2 1153.9 442.6 1150.0 442.5C1146.1 442.4 1142.4 442.1 1140.0 440.8C1137.6 439.6 1137.2 435.8 1135.8 435.0C1134.4 434.2 1132.6 435.3 1131.7 435.8C1130.7 436.4 1130.3 437.9 1130.0 438.3M1282.5 292.5C1282.8 293.5 1283.8 295.4 1284.2 298.3C1284.6 301.2 1285.0 305.8 1285.0 310.0C1285.0 314.2 1284.7 319.2 1284.2 323.3C1283.6 327.5 1282.4 330.8 1281.7 335.0C1281.0 339.2 1280.7 343.9 1280.0 348.3C1279.3 352.8 1278.6 358.1 1277.5 361.7C1276.4 365.3 1275.7 368.6 1273.3 370.0C1271.0 371.4 1266.4 370.1 1263.3 370.3C1260.3 370.6 1256.9 370.1 1255.0 371.7C1253.1 373.3 1252.4 376.9 1251.7 380.0C1250.9 383.1 1250.1 387.2 1250.3 390.0C1250.6 392.8 1251.4 395.0 1253.3 396.7C1255.2 398.3 1259.2 400.1 1261.7 400.0C1264.2 399.9 1266.1 397.2 1268.3 395.8C1270.6 394.4 1273.1 391.8 1275.0 391.7C1276.9 391.5 1279.0 393.3 1280.0 395.0C1281.0 396.7 1281.7 399.4 1280.8 401.7C1280.0 403.9 1276.4 405.8 1275.0 408.3C1273.6 410.8 1272.8 414.2 1272.5 416.7C1272.2 419.2 1274.3 421.1 1273.3 423.3C1272.4 425.6 1269.4 428.3 1266.7 430.0C1263.9 431.7 1259.6 432.4 1256.7 433.3C1253.8 434.3 1250.7 434.6 1249.2 435.8C1247.6 437.1 1246.8 439.0 1247.5 440.8C1248.2 442.6 1252.4 444.7 1253.3 446.7C1254.3 448.6 1254.7 451.2 1253.3 452.5C1251.9 453.8 1248.9 454.0 1245.0 454.2C1241.1 454.4 1234.4 453.4 1230.0 453.7C1225.6 453.9 1220.3 455.5 1218.3 455.8M1294.2 294.2C1294.0 295.4 1292.9 299.4 1293.3 301.7C1293.8 303.9 1295.3 305.8 1296.7 307.5C1298.1 309.2 1301.1 309.9 1301.7 311.7C1302.2 313.5 1301.2 316.2 1300.0 318.3C1298.8 320.4 1295.7 321.7 1294.2 324.2C1292.6 326.7 1291.7 330.1 1290.8 333.3C1290.0 336.5 1289.3 340.0 1289.2 343.3C1289.0 346.7 1289.3 350.6 1290.0 353.3C1290.7 356.1 1291.4 358.6 1293.3 360.0C1295.3 361.4 1298.3 361.7 1301.7 361.7C1305.0 361.7 1309.2 360.1 1313.3 360.0C1317.5 359.9 1322.8 361.1 1326.7 360.8C1330.6 360.6 1334.2 358.1 1336.7 358.3C1339.2 358.6 1340.7 360.3 1341.7 362.5C1342.6 364.7 1343.1 368.8 1342.5 371.7C1341.9 374.6 1340.7 377.8 1338.3 380.0C1336.0 382.2 1331.4 383.1 1328.3 385.0C1325.3 386.9 1322.2 389.2 1320.0 391.7C1317.8 394.2 1315.6 397.2 1315.0 400.0C1314.4 402.8 1316.9 405.3 1316.7 408.3C1316.4 411.4 1313.6 415.3 1313.3 418.3C1313.1 421.4 1314.0 424.4 1315.0 426.7C1316.0 428.9 1319.0 430.0 1319.2 431.7C1319.3 433.3 1318.2 435.6 1315.8 436.7C1313.5 437.8 1309.3 437.9 1305.0 438.3C1300.7 438.8 1294.2 438.5 1290.0 439.2C1285.8 439.9 1282.2 441.2 1280.0 442.5C1277.8 443.8 1276.7 445.1 1276.7 446.7C1276.7 448.2 1277.2 450.6 1280.0 451.7C1282.8 452.8 1288.3 452.9 1293.3 453.3C1298.3 453.8 1305.3 453.6 1310.0 454.2C1314.7 454.8 1319.7 456.5 1321.7 457.0M1312.5 294.7C1312.9 296.1 1314.3 299.9 1315.0 303.3C1315.7 306.7 1316.8 311.1 1316.7 315.0C1316.5 318.9 1314.3 323.1 1314.2 326.7C1314.0 330.3 1314.6 334.0 1315.8 336.7C1317.1 339.3 1319.3 341.9 1321.7 342.5C1324.0 343.1 1327.2 341.5 1330.0 340.0C1332.8 338.5 1335.8 335.1 1338.3 333.3C1340.8 331.5 1342.8 329.3 1345.0 329.2C1347.2 329.0 1349.7 331.0 1351.7 332.5C1353.6 334.0 1355.1 338.2 1356.7 338.3C1358.2 338.5 1359.5 335.5 1360.8 333.3C1362.2 331.2 1364.0 326.7 1364.7 325.3M1420.8 338.7C1419.6 339.6 1416.2 342.7 1413.3 344.2C1410.4 345.6 1407.2 346.9 1403.3 347.5C1399.4 348.1 1393.8 347.6 1390.0 348.0C1386.2 348.4 1381.7 348.6 1380.8 350.0C1380.0 351.4 1382.9 354.4 1385.0 356.7C1387.1 358.9 1391.2 360.8 1393.3 363.3C1395.4 365.8 1397.5 369.6 1397.5 371.7C1397.5 373.8 1396.2 375.8 1393.3 375.8C1390.4 375.8 1384.4 372.9 1380.0 371.7C1375.6 370.4 1370.1 368.3 1366.7 368.3C1363.2 368.3 1361.4 369.7 1359.2 371.7C1356.9 373.6 1355.1 376.9 1353.3 380.0C1351.5 383.1 1349.4 386.4 1348.3 390.0C1347.2 393.6 1346.7 398.1 1346.7 401.7C1346.7 405.3 1347.2 408.6 1348.3 411.7C1349.4 414.7 1351.1 417.8 1353.3 420.0C1355.6 422.2 1358.6 424.4 1361.7 425.0C1364.7 425.6 1368.3 424.2 1371.7 423.3C1375.0 422.5 1378.6 421.7 1381.7 420.0C1384.7 418.3 1387.5 415.1 1390.0 413.3C1392.5 411.5 1395.0 408.6 1396.7 409.2C1398.3 409.7 1398.9 412.9 1400.0 416.7C1401.1 420.4 1402.2 427.8 1403.3 431.7C1404.4 435.6 1405.0 438.1 1406.7 440.0C1408.3 441.9 1410.6 443.6 1413.3 443.3C1416.1 443.1 1419.7 440.6 1423.3 438.3C1426.9 436.1 1431.4 432.2 1435.0 430.0C1438.6 427.8 1442.5 426.0 1445.0 425.0C1447.5 424.0 1449.2 424.3 1450.0 424.2M1432.5 340.8C1433.8 341.9 1437.6 345.7 1440.0 347.5C1442.4 349.3 1445.0 351.0 1446.7 351.7C1448.3 352.4 1449.4 351.7 1450.0 351.7M1450.0 351.7C1451.1 350.9 1455.6 347.8 1456.7 347.0M1485.3 365.0C1486.1 365.5 1488.5 367.1 1490.0 367.8C1491.5 368.5 1493.5 368.9 1494.2 369.2M1450.0 424.7C1451.1 425.0 1454.4 427.0 1456.7 426.7C1458.9 426.3 1460.8 424.6 1463.3 422.5C1465.8 420.4 1468.6 416.2 1471.7 414.2C1474.7 412.1 1478.2 410.7 1481.7 410.0C1485.1 409.3 1490.7 410.0 1492.5 410.0M1011.2 436.0C1012.2 436.4 1014.8 437.2 1016.7 438.5C1018.5 439.8 1020.6 441.6 1022.5 443.5C1024.4 445.4 1026.2 447.8 1028.3 450.2C1030.4 452.5 1032.8 455.2 1035.0 457.7C1037.2 460.2 1039.3 462.5 1041.7 465.2C1044.0 467.8 1046.8 470.6 1049.2 473.5C1051.5 476.4 1053.8 479.8 1055.8 482.7C1057.9 485.6 1060.0 489.1 1061.7 491.0C1063.3 492.9 1064.4 493.2 1065.8 494.3C1067.2 495.4 1069.3 496.4 1070.0 497.7C1070.7 498.9 1070.7 500.3 1070.0 501.8C1069.3 503.4 1067.6 505.2 1065.8 506.8C1064.0 508.5 1061.5 510.3 1059.2 511.8C1056.8 513.4 1054.6 515.0 1051.7 516.0C1048.8 517.0 1045.4 517.8 1041.7 517.7C1037.9 517.5 1033.3 516.0 1029.2 515.2C1025.0 514.3 1020.8 513.5 1016.7 512.7C1012.5 511.8 1008.3 511.0 1004.2 510.2C1000.0 509.3 995.4 508.4 991.7 507.7C987.9 507.0 985.1 506.4 981.7 506.0C978.2 505.6 974.3 504.9 970.8 505.2C967.4 505.4 963.1 506.4 960.8 507.7C958.5 508.9 957.6 511.0 957.1 512.7C956.5 514.3 957.0 516.1 957.5 517.7C958.0 519.2 959.6 521.3 960.0 522.0M960.0 522.0C960.6 523.4 962.2 527.3 963.3 530.3C964.4 533.4 966.1 537.0 966.7 540.3C967.2 543.7 967.8 547.6 966.7 550.3C965.6 553.1 962.2 555.8 960.0 557.0C957.8 558.2 955.6 558.7 953.3 557.8C951.1 557.0 948.3 554.6 946.7 552.0C945.0 549.4 944.4 545.1 943.3 542.0C942.2 538.9 941.7 535.8 940.0 533.7C938.3 531.6 936.1 530.3 933.3 529.5C930.6 528.7 926.7 528.9 923.3 528.7C920.0 528.4 916.3 527.9 913.3 527.8C910.3 527.8 906.7 528.1 905.3 528.2M905.3 538.2C907.2 538.3 913.1 538.5 916.7 539.0C920.2 539.5 923.3 540.8 926.7 541.2C930.0 541.5 934.2 540.2 936.7 541.2C939.2 542.1 940.3 544.6 941.7 547.0C943.1 549.4 943.3 553.1 945.0 555.3C946.7 557.6 949.2 559.8 951.7 560.7C954.2 561.5 957.2 560.8 960.0 560.3C962.8 559.9 965.6 558.5 968.3 557.8C971.1 557.1 974.6 557.4 976.7 556.2C978.8 554.9 980.3 553.0 980.8 550.3C981.4 547.7 981.0 543.9 980.0 540.3C979.0 536.7 976.2 531.7 975.0 528.7C973.8 525.6 972.2 523.7 972.5 522.0C972.8 520.3 974.3 519.2 976.7 518.7C979.0 518.1 983.1 517.8 986.7 518.7C990.3 519.5 994.4 522.1 998.3 523.7C1002.2 525.2 1006.1 526.6 1010.0 527.8C1013.9 529.1 1018.9 529.9 1021.7 531.2C1024.4 532.4 1025.3 533.5 1026.7 535.3C1028.1 537.1 1028.3 540.6 1030.0 542.0C1031.7 543.4 1033.9 544.2 1036.7 543.7C1039.4 543.1 1043.3 540.9 1046.7 538.7C1050.0 536.4 1053.3 533.4 1056.7 530.3C1060.0 527.3 1063.3 523.4 1066.7 520.3C1070.0 517.3 1073.6 513.1 1076.7 512.0C1079.7 510.9 1082.2 512.3 1085.0 513.7C1087.8 515.1 1091.1 520.1 1093.3 520.3C1095.6 520.6 1096.7 518.1 1098.3 515.3C1100.0 512.6 1101.9 507.8 1103.3 503.7C1104.7 499.5 1105.6 493.1 1106.7 490.3C1107.8 487.6 1107.8 487.0 1110.0 487.0C1112.2 487.0 1117.5 488.7 1120.0 490.3C1122.5 492.0 1123.6 494.2 1125.0 497.0C1126.4 499.8 1127.5 504.5 1128.3 507.0C1129.2 509.5 1129.7 511.2 1130.0 512.0M825.0 667.0C825.8 666.1 828.4 663.9 830.1 661.5C831.8 659.1 833.6 655.9 835.2 652.8C836.7 649.6 838.3 645.6 839.5 642.6C840.7 639.6 841.2 636.6 842.4 634.6C843.7 632.6 845.1 631.4 846.8 630.6C848.5 629.9 850.4 630.0 852.6 630.3C854.8 630.5 857.0 631.7 859.9 632.1C862.8 632.4 866.2 632.6 870.1 632.4C873.9 632.3 879.1 631.7 883.1 631.4C887.1 631.0 890.4 630.9 894.0 630.3C897.7 629.6 901.3 628.4 904.9 627.4C908.6 626.3 910.8 625.6 915.8 623.7C920.9 621.9 929.3 618.3 935.0 616.3C940.7 614.4 944.0 612.8 950.0 611.8C956.0 610.9 964.6 610.2 970.8 610.7C977.1 611.1 983.0 611.9 987.3 614.7C991.6 617.5 995.1 623.3 996.7 627.5C998.3 631.7 997.2 635.6 996.9 640.0C996.6 644.4 995.6 649.6 994.6 654.0C993.5 658.3 992.2 662.4 990.7 666.4C989.1 670.4 987.3 674.4 985.3 678.0C983.2 681.6 980.9 685.0 978.3 688.1C975.7 691.2 973.0 694.1 969.8 696.6C966.5 699.0 963.3 701.0 958.9 702.8C954.5 704.5 949.4 706.1 943.4 707.1C937.5 708.0 930.5 708.3 923.3 708.2C916.0 708.2 906.3 706.8 900.0 706.7C893.7 706.5 888.8 707.5 885.5 707.2C882.2 706.9 881.8 705.9 880.1 704.9C878.4 703.9 877.0 702.4 875.4 701.0C873.9 699.7 872.5 697.7 870.8 696.7C869.1 695.8 867.0 695.1 865.4 695.2C863.7 695.3 862.5 695.9 860.7 697.1C858.9 698.4 856.6 701.0 854.5 702.6C852.4 704.1 850.1 705.7 848.3 706.4C846.5 707.1 845.5 707.2 843.7 706.8C841.9 706.4 839.5 705.0 837.5 704.1C835.4 703.2 833.1 701.8 831.3 701.4C829.4 700.9 827.4 701.4 826.6 701.4M865.0 743.3C865.8 743.1 866.6 742.4 870.0 742.1C873.4 741.8 882.9 741.4 885.5 741.3M892.5 743.6C894.6 743.3 900.2 742.1 904.9 741.7C909.6 741.3 915.5 741.1 920.4 741.3C925.3 741.6 932.0 742.9 934.4 743.3M1218.3 457.0C1217.5 458.1 1215.8 461.7 1213.3 463.7C1210.8 465.6 1206.4 467.3 1203.3 468.7C1200.3 470.1 1197.1 470.3 1195.0 472.0C1192.9 473.7 1191.1 476.2 1190.8 478.7C1190.6 481.2 1191.5 484.4 1193.3 487.0C1195.1 489.6 1198.3 492.4 1201.7 494.5C1205.0 496.6 1208.6 498.2 1213.3 499.5C1218.1 500.8 1224.4 501.7 1230.0 502.0C1235.6 502.3 1241.7 501.9 1246.7 501.2C1251.7 500.5 1257.2 499.4 1260.0 497.8C1262.8 496.3 1263.1 494.1 1263.3 492.0C1263.6 489.9 1261.1 487.8 1261.7 485.3C1262.2 482.8 1265.0 479.8 1266.7 477.0C1268.3 474.2 1270.0 470.8 1271.7 468.7C1273.3 466.6 1273.6 465.4 1276.7 464.5C1279.7 463.6 1284.4 463.4 1290.0 463.3C1295.6 463.2 1303.9 463.2 1310.0 464.0C1316.1 464.8 1321.9 466.2 1326.7 467.8C1331.4 469.4 1335.3 471.3 1338.3 473.7C1341.4 476.0 1343.3 478.7 1345.0 482.0C1346.7 485.3 1347.5 489.5 1348.3 493.7C1349.2 497.8 1349.3 502.6 1350.0 507.0C1350.7 511.4 1352.5 516.4 1352.5 520.3C1352.5 524.2 1349.9 527.6 1350.0 530.3C1350.1 533.1 1351.1 534.8 1353.3 537.0C1355.6 539.2 1359.7 542.3 1363.3 543.7C1366.9 545.1 1371.7 545.3 1375.0 545.3C1378.3 545.3 1381.0 544.8 1383.3 543.7C1385.7 542.6 1387.2 539.8 1389.2 538.7C1391.1 537.6 1392.6 536.6 1395.0 537.0C1397.4 537.4 1400.3 540.1 1403.3 541.2C1406.4 542.3 1409.4 543.0 1413.3 543.7C1417.2 544.4 1422.5 544.8 1426.7 545.3C1430.8 545.9 1434.4 546.6 1438.3 547.0C1442.2 547.4 1448.1 547.7 1450.0 547.8M1130.0 477.0C1131.7 476.7 1135.8 476.2 1140.0 475.3C1144.2 474.5 1150.3 472.4 1155.0 472.0C1159.7 471.6 1164.7 471.4 1168.3 472.8C1171.9 474.2 1174.2 477.4 1176.7 480.3C1179.2 483.2 1181.4 486.7 1183.3 490.3C1185.3 493.9 1186.1 498.4 1188.3 502.0C1190.6 505.6 1193.6 509.2 1196.7 512.0C1199.7 514.8 1203.1 517.1 1206.7 518.7C1210.3 520.2 1213.9 521.4 1218.3 521.2C1222.8 520.9 1228.1 518.7 1233.3 517.0C1238.6 515.3 1245.0 513.4 1250.0 511.2C1255.0 508.9 1260.0 506.6 1263.3 503.7C1266.7 500.8 1268.1 497.0 1270.0 493.7C1271.9 490.3 1272.8 486.7 1275.0 483.7C1277.2 480.6 1280.0 477.4 1283.3 475.3C1286.7 473.2 1290.6 471.7 1295.0 471.2C1299.4 470.6 1305.0 471.4 1310.0 472.0C1315.0 472.6 1320.8 473.4 1325.0 474.5C1329.2 475.6 1332.5 476.6 1335.0 478.7C1337.5 480.8 1338.6 483.4 1340.0 487.0C1341.4 490.6 1342.5 495.9 1343.3 500.3C1344.2 504.8 1344.6 509.2 1345.0 513.7C1345.4 518.1 1345.3 523.1 1345.8 527.0C1346.4 530.9 1346.2 533.7 1348.3 537.0C1350.4 540.3 1354.4 544.6 1358.3 547.0C1362.2 549.4 1366.9 550.3 1371.7 551.2C1376.4 552.0 1382.5 552.6 1386.7 552.0C1390.8 551.4 1392.8 548.5 1396.7 547.8C1400.6 547.1 1405.0 547.4 1410.0 547.8C1415.0 548.2 1421.7 549.5 1426.7 550.3C1431.7 551.2 1436.1 552.0 1440.0 552.8C1443.9 553.7 1448.3 554.9 1450.0 555.3M1370.0 565.3C1372.2 565.6 1375.4 568.1 1376.7 570.3C1377.9 572.6 1378.6 576.3 1377.5 578.7C1376.4 581.0 1372.6 583.0 1370.0 584.5C1367.4 586.0 1363.8 587.7 1361.7 587.8C1359.6 588.0 1357.8 587.1 1357.5 585.3C1357.2 583.5 1359.0 579.8 1360.0 577.0C1361.0 574.2 1361.7 570.6 1363.3 568.7C1365.0 566.7 1367.8 565.1 1370.0 565.3ZM1368.3 562.0C1371.2 562.1 1375.8 563.1 1378.3 565.3C1380.8 567.6 1382.2 571.7 1383.3 575.3C1384.4 578.9 1385.6 583.4 1385.0 587.0C1384.4 590.6 1382.5 594.6 1380.0 597.0C1377.5 599.4 1373.6 600.8 1370.0 601.2C1366.4 601.6 1362.2 600.5 1358.3 599.5C1354.4 598.5 1349.0 596.9 1346.7 595.3C1344.3 593.8 1343.6 592.6 1344.2 590.3C1344.7 588.1 1348.2 585.1 1350.0 582.0C1351.8 578.9 1353.2 574.9 1355.0 572.0C1356.8 569.1 1358.6 566.2 1360.8 564.5C1363.1 562.8 1365.4 561.9 1368.3 562.0ZM1450.0 553.7C1451.4 553.9 1455.6 555.2 1458.3 555.3C1461.1 555.5 1464.9 555.6 1466.7 554.5C1468.5 553.4 1469.4 551.0 1469.2 548.7C1468.9 546.3 1466.1 542.8 1465.0 540.3C1463.9 537.8 1462.2 535.6 1462.5 533.7C1462.8 531.7 1464.6 529.4 1466.7 528.7C1468.8 528.0 1472.2 529.8 1475.0 529.5C1477.8 529.2 1481.1 528.8 1483.3 527.0C1485.6 525.2 1486.9 521.4 1488.3 518.7C1489.7 515.9 1490.0 512.3 1491.7 510.3C1493.3 508.4 1495.6 507.1 1498.3 507.0C1501.1 506.9 1504.7 508.8 1508.3 509.5C1511.9 510.2 1516.4 511.6 1520.0 511.2C1523.6 510.8 1527.2 507.8 1530.0 507.0C1532.8 506.2 1534.7 505.6 1536.7 506.2C1538.6 506.7 1540.3 508.2 1541.7 510.3C1543.1 512.4 1544.2 515.9 1545.0 518.7C1545.8 521.4 1545.3 524.9 1546.7 527.0C1548.1 529.1 1550.0 530.3 1553.3 531.2C1556.7 532.0 1562.2 532.0 1566.7 532.0C1571.1 532.0 1575.8 531.7 1580.0 531.2C1584.2 530.6 1587.8 529.8 1591.7 528.7C1595.6 527.6 1599.7 525.3 1603.3 524.5C1606.9 523.7 1610.0 523.7 1613.3 523.7C1616.7 523.7 1621.7 524.4 1623.3 524.5M1450.0 557.0C1451.1 557.3 1454.4 557.8 1456.7 558.7C1458.9 559.5 1460.8 560.8 1463.3 562.0C1465.8 563.2 1469.2 565.9 1471.7 566.2C1474.2 566.4 1476.4 565.2 1478.3 563.7C1480.3 562.1 1481.4 559.5 1483.3 557.0C1485.3 554.5 1488.1 551.4 1490.0 548.7C1491.9 545.9 1493.1 542.6 1495.0 540.3C1496.9 538.1 1498.9 536.7 1501.7 535.3C1504.4 533.9 1508.6 533.2 1511.7 532.0C1514.7 530.8 1517.5 529.6 1520.0 527.8C1522.5 526.0 1524.4 522.8 1526.7 521.2C1528.9 519.5 1531.4 517.8 1533.3 517.8C1535.3 517.8 1537.2 519.4 1538.3 521.2C1539.4 523.0 1538.6 526.6 1540.0 528.7C1541.4 530.8 1543.9 532.0 1546.7 533.7C1549.4 535.3 1553.6 537.0 1556.7 538.7C1559.7 540.3 1562.2 543.2 1565.0 543.7C1567.8 544.1 1570.3 542.3 1573.3 541.2C1576.4 540.1 1579.7 538.5 1583.3 537.0C1586.9 535.5 1591.4 533.5 1595.0 532.0C1598.6 530.5 1601.4 528.7 1605.0 527.8C1608.6 526.9 1614.7 526.9 1616.7 526.7M1646.6 544.7C1645.9 544.1 1644.4 542.1 1642.3 541.0C1640.2 539.9 1637.0 538.9 1633.8 538.3C1630.6 537.8 1626.5 537.8 1623.1 537.8C1619.8 537.8 1616.7 537.6 1613.5 538.3C1610.3 539.0 1607.0 540.7 1603.9 542.1C1600.9 543.4 1598.3 544.7 1595.4 546.3C1592.6 547.9 1589.2 549.9 1586.9 551.6C1584.6 553.4 1583.0 555.0 1581.6 557.0C1580.1 558.9 1579.4 561.4 1578.4 563.4C1577.3 565.3 1576.6 567.3 1575.2 568.7C1573.7 570.1 1572.0 571.2 1569.8 571.9C1567.7 572.6 1564.5 572.2 1562.4 573.0C1560.2 573.7 1558.3 574.6 1557.1 576.2C1555.8 577.8 1555.1 580.4 1554.9 582.6C1554.7 584.7 1555.1 587.0 1556.0 588.9C1556.9 590.9 1559.0 592.5 1560.2 594.3C1561.5 596.1 1563.1 597.6 1563.4 599.6C1563.8 601.6 1563.3 603.7 1562.4 606.0C1561.5 608.3 1559.5 611.3 1558.1 613.5C1556.7 615.6 1554.9 617.2 1553.9 618.8C1552.8 620.4 1551.5 621.8 1551.7 623.0C1551.9 624.3 1553.0 625.9 1554.9 626.2C1556.9 626.6 1559.2 625.6 1563.4 625.2C1567.7 624.7 1575.2 623.7 1580.5 623.6C1585.8 623.5 1590.1 624.1 1595.4 624.6C1600.7 625.2 1607.1 626.0 1612.5 626.8C1617.8 627.6 1622.6 628.6 1627.4 629.4C1632.2 630.3 1638.9 631.7 1641.2 632.1M1646.6 549.5C1645.9 548.8 1644.1 546.4 1642.3 545.2C1640.5 544.1 1637.9 542.9 1635.9 542.6C1634.0 542.2 1632.0 542.3 1630.6 543.1C1629.2 543.9 1628.1 545.2 1627.4 547.4C1626.7 549.5 1626.7 553.9 1626.3 555.9C1626.0 557.9 1626.0 559.3 1625.3 559.6C1624.6 560.0 1623.3 559.2 1622.1 558.0C1620.8 556.9 1619.2 554.4 1617.8 552.7C1616.4 551.0 1615.1 549.1 1613.5 547.9C1611.9 546.8 1610.3 546.0 1608.2 545.8C1606.1 545.6 1603.4 545.9 1600.7 546.8C1598.1 547.8 1594.7 550.0 1592.2 551.6C1589.7 553.3 1587.5 555.0 1585.8 557.0C1584.1 558.9 1583.2 561.2 1582.1 563.4C1581.0 565.5 1580.6 567.9 1579.4 569.8C1578.3 571.6 1576.9 573.4 1575.2 574.6C1573.4 575.7 1570.7 575.9 1568.8 576.7C1566.8 577.5 1564.7 578.0 1563.4 579.4C1562.2 580.7 1561.4 582.9 1561.3 584.7C1561.2 586.5 1561.8 588.4 1562.9 590.0C1564.0 591.6 1565.8 593.2 1567.7 594.3C1569.6 595.3 1572.3 596.6 1574.1 596.4C1575.9 596.2 1577.1 594.5 1578.4 593.2C1579.6 592.0 1580.3 589.8 1581.6 588.9C1582.8 588.1 1584.7 587.6 1585.8 587.9C1587.0 588.1 1588.1 589.3 1588.5 590.5C1588.8 591.8 1588.8 593.8 1588.0 595.3C1587.2 596.8 1585.6 598.5 1583.7 599.6C1581.7 600.7 1578.5 600.8 1576.2 601.7C1573.9 602.6 1571.8 603.5 1569.8 604.9C1567.9 606.4 1566.0 608.5 1564.5 610.3C1563.0 612.0 1561.6 614.0 1560.8 615.6C1560.0 617.2 1559.5 618.7 1559.7 619.9C1560.0 621.0 1560.3 622.3 1562.4 622.5C1564.4 622.7 1568.2 621.5 1572.0 620.9C1575.7 620.3 1580.5 618.9 1584.8 618.8C1589.0 618.7 1592.9 619.7 1597.6 620.4C1602.2 621.1 1607.5 622.1 1612.5 623.0C1617.4 624.0 1622.6 625.3 1627.4 626.2C1632.2 627.2 1638.9 628.5 1641.2 628.9M1129.8 438.5C1130.0 439.4 1130.0 442.5 1130.8 444.2C1131.7 445.8 1134.0 446.8 1135.0 448.3C1136.0 449.9 1136.8 451.4 1136.7 453.3C1136.5 455.3 1135.4 457.9 1134.2 460.0C1132.9 462.1 1130.3 464.0 1129.2 465.8C1128.1 467.6 1127.5 469.1 1127.5 470.8C1127.5 472.6 1128.9 475.3 1129.2 476.2"/>
</g>
<g stroke="#3b3f9c" stroke-width="1.9">
<ellipse cx="1225.4" cy="360.4" rx="7.1" ry="4.2" transform="rotate(8 1225.4 360.4)"/>
<ellipse cx="1069.3" cy="456.4" rx="9.3" ry="19.0"/>
<ellipse cx="1106.0" cy="650.2" rx="2.0" ry="2.0"/>
<ellipse cx="1275.8" cy="548.7" rx="9.2" ry="16.7" transform="rotate(10 1275.8 548.7)"/>
<ellipse cx="1241.7" cy="595.0" rx="5.0" ry="4.5"/>
<ellipse cx="1155.8" cy="614.5" rx="5.0" ry="5.0"/>
<ellipse cx="1635.0" cy="530.7" rx="5.0" ry="2.3"/>
<path d="M1026.7 435.8C1027.2 435.0 1028.3 431.6 1030.0 430.8C1031.7 430.1 1033.9 430.3 1036.7 431.3C1039.4 432.4 1044.2 436.7 1046.7 437.0C1049.2 437.3 1049.7 435.3 1051.7 433.3C1053.6 431.3 1055.3 426.6 1058.3 425.0C1061.4 423.4 1065.8 423.4 1070.0 423.7C1074.2 423.9 1079.4 425.1 1083.3 426.7C1087.2 428.3 1090.0 431.8 1093.3 433.3C1096.7 434.9 1100.0 435.0 1103.3 435.8C1106.7 436.7 1110.8 436.5 1113.3 438.3C1115.8 440.1 1117.2 443.6 1118.3 446.7C1119.4 449.8 1119.7 455.3 1120.0 457.0M1026.7 435.8C1026.8 436.7 1026.7 438.9 1027.5 441.0C1028.3 443.1 1029.9 446.1 1031.7 448.5C1033.5 450.9 1036.0 452.9 1038.3 455.2C1040.7 457.4 1043.6 459.5 1045.8 461.8C1048.1 464.2 1049.7 466.7 1051.7 469.3C1053.6 472.0 1055.4 475.2 1057.5 477.7C1059.6 480.2 1061.8 482.7 1064.2 484.3C1066.5 486.0 1069.0 487.0 1071.7 487.7C1074.3 488.3 1077.4 488.4 1080.0 488.1C1082.6 487.7 1084.9 486.3 1087.5 485.6C1090.1 484.8 1093.2 484.1 1095.8 483.5C1098.5 482.9 1101.0 482.8 1103.3 481.8C1105.7 480.9 1108.9 478.4 1110.0 477.7M1110.0 477.7C1111.1 476.7 1115.1 474.3 1116.7 472.0C1118.2 469.7 1118.8 466.2 1119.2 463.7C1119.6 461.2 1119.2 458.1 1119.2 457.0M881.7 570.0C883.6 569.4 889.2 567.5 893.3 566.2C897.5 564.8 902.2 563.0 906.7 562.0C911.1 561.0 915.6 560.5 920.0 560.0C924.4 559.5 929.7 558.8 933.3 559.0C936.9 559.2 939.2 560.1 941.7 561.2C944.2 562.2 945.3 564.2 948.3 565.3C951.4 566.4 956.4 567.0 960.0 567.8C963.6 568.7 966.7 569.5 970.0 570.3C973.3 571.2 976.7 572.1 980.0 572.8C983.3 573.5 986.9 573.2 990.0 574.5C993.1 575.8 995.6 578.9 998.3 580.3C1001.1 581.7 1003.9 583.0 1006.7 582.8C1009.4 582.7 1011.9 580.2 1015.0 579.5C1018.1 578.8 1022.4 578.0 1025.0 578.7C1027.6 579.4 1029.4 581.4 1030.8 583.7C1032.2 585.9 1032.2 590.0 1033.3 592.0C1034.4 594.0 1036.0 595.5 1037.5 595.7C1039.0 595.8 1041.2 594.8 1042.5 592.8C1043.8 590.8 1043.8 586.6 1045.0 583.7C1046.2 580.8 1047.8 577.8 1050.0 575.3C1052.2 572.8 1055.6 570.2 1058.3 568.7C1061.1 567.1 1064.2 566.3 1066.7 566.2C1069.2 566.0 1071.5 566.3 1073.3 567.8C1075.1 569.4 1076.4 572.4 1077.5 575.3C1078.6 578.2 1078.8 581.7 1080.0 585.3C1081.2 588.9 1083.3 593.5 1085.0 597.0C1086.7 600.5 1088.5 604.4 1090.0 606.2C1091.5 608.0 1092.8 608.5 1094.2 607.8C1095.6 607.1 1096.8 604.1 1098.3 602.0C1099.9 599.9 1101.4 596.9 1103.3 595.3C1105.3 593.8 1107.2 592.8 1110.0 592.8C1112.8 592.8 1116.7 594.4 1120.0 595.3C1123.3 596.3 1128.3 598.1 1130.0 598.7M814.6 727.8C815.4 727.4 817.5 725.9 819.6 725.4C821.8 725.0 824.9 724.6 827.4 725.0C829.8 725.5 832.2 727.0 834.4 728.1C836.6 729.3 838.6 731.2 840.6 732.0C842.5 732.9 844.3 733.4 846.0 733.2C847.7 732.9 849.5 732.2 850.6 730.5C851.8 728.7 852.1 725.3 853.0 722.7C853.9 720.1 854.8 717.2 856.1 715.0C857.4 712.8 858.9 710.8 860.7 709.5C862.5 708.3 864.6 707.6 866.9 707.6C869.2 707.6 871.8 708.6 874.7 709.5C877.5 710.5 880.9 712.1 884.0 713.4C887.1 714.7 890.7 715.9 893.3 717.3C895.9 718.7 897.7 720.1 899.5 721.9C901.3 723.7 902.4 726.2 904.1 728.1C905.8 730.1 907.6 732.0 909.6 733.6C911.5 735.1 913.9 736.6 915.8 737.4C917.6 738.3 919.6 738.4 920.4 738.6M812.7 708.0C813.3 708.4 815.6 709.3 816.5 710.3C817.4 711.3 818.1 713.0 818.1 714.2C818.1 715.3 817.2 716.4 816.5 717.3C815.9 718.1 814.6 718.9 814.2 719.2M916.7 621.7C918.3 620.9 922.2 618.7 926.7 617.0C931.1 615.3 937.8 613.2 943.3 611.7C948.9 610.1 954.4 608.5 960.0 607.5C965.6 606.5 971.7 605.8 976.7 605.8C981.7 605.8 985.8 606.4 990.0 607.5C994.2 608.6 998.1 610.6 1001.7 612.5C1005.3 614.4 1008.9 616.8 1011.7 619.2C1014.4 621.5 1016.5 624.0 1018.3 626.7C1020.1 629.3 1021.4 632.2 1022.5 635.0C1023.6 637.8 1024.7 642.5 1025.0 643.3C1025.3 644.2 1023.9 639.2 1024.2 640.0C1024.4 640.8 1026.2 645.3 1026.7 648.3C1027.2 651.4 1027.5 655.4 1027.1 658.3C1026.7 661.2 1025.6 663.3 1024.2 665.8C1022.7 668.3 1020.1 670.7 1018.3 673.3C1016.5 676.0 1014.9 678.6 1013.3 681.7C1011.8 684.7 1010.4 688.2 1009.2 691.7C1007.9 695.1 1006.9 698.9 1005.8 702.5C1004.7 706.1 1003.6 709.9 1002.5 713.3C1001.4 716.8 1000.7 720.1 999.2 723.3C997.6 726.5 995.0 729.4 993.3 732.5C991.7 735.6 990.3 738.5 989.2 741.7C988.1 744.9 987.2 748.3 986.7 751.7C986.1 755.1 986.0 760.3 985.8 762.1M1130.0 557.0C1130.8 557.0 1133.1 557.8 1135.0 557.0C1136.9 556.2 1139.4 554.2 1141.7 552.0C1143.9 549.8 1145.6 546.2 1148.3 543.7C1151.1 541.2 1155.4 538.7 1158.3 537.0C1161.2 535.3 1164.3 535.1 1165.8 533.7C1167.4 532.3 1168.2 529.9 1167.5 528.7C1166.8 527.4 1163.3 527.0 1161.7 526.2C1160.0 525.3 1157.6 524.5 1157.5 523.7C1157.4 522.8 1158.5 521.3 1160.8 521.2C1163.2 521.0 1167.9 521.6 1171.7 522.8C1175.4 524.1 1180.0 526.6 1183.3 528.7C1186.7 530.8 1189.2 533.5 1191.7 535.3C1194.2 537.1 1195.3 539.4 1198.3 539.5C1201.4 539.6 1205.8 537.4 1210.0 536.2C1214.2 534.9 1218.6 533.2 1223.3 532.0C1228.1 530.8 1233.3 530.1 1238.3 528.7C1243.3 527.3 1249.2 525.9 1253.3 523.7C1257.5 521.4 1260.6 518.4 1263.3 515.3C1266.1 512.3 1267.8 507.8 1270.0 505.3C1272.2 502.8 1274.4 500.9 1276.7 500.3C1278.9 499.8 1281.1 501.0 1283.3 502.0C1285.6 503.0 1287.8 506.2 1290.0 506.2C1292.2 506.2 1294.4 504.1 1296.7 502.0C1298.9 499.9 1300.8 495.6 1303.3 493.7C1305.8 491.7 1308.3 491.0 1311.7 490.3C1315.0 489.6 1320.0 489.6 1323.3 489.5C1326.7 489.4 1329.6 488.5 1331.7 489.5C1333.8 490.5 1334.7 492.1 1335.8 495.3C1336.9 498.5 1337.8 503.9 1338.3 508.7C1338.9 513.4 1338.8 519.2 1339.2 523.7C1339.6 528.1 1339.6 532.0 1340.8 535.3C1342.1 538.7 1344.3 541.2 1346.7 543.7C1349.0 546.2 1352.6 548.2 1355.0 550.3C1357.4 552.4 1359.9 553.9 1360.8 556.2C1361.8 558.4 1361.8 560.8 1360.8 563.7C1359.9 566.6 1357.4 570.3 1355.0 573.7C1352.6 577.0 1349.2 580.1 1346.7 583.7C1344.2 587.3 1342.8 592.0 1340.0 595.3C1337.2 598.7 1332.8 601.3 1330.0 603.7C1327.2 606.0 1324.6 607.8 1323.3 609.5C1322.1 611.2 1321.8 612.8 1322.5 613.7C1323.2 614.5 1325.1 615.5 1327.5 614.5C1329.9 613.5 1333.8 609.5 1336.7 607.8C1339.6 606.2 1341.9 605.2 1345.0 604.5C1348.1 603.8 1351.1 603.4 1355.0 603.7C1358.9 603.9 1364.3 605.3 1368.3 606.2C1372.4 607.0 1376.4 609.4 1379.2 608.7C1381.9 608.0 1383.2 604.8 1385.0 602.0C1386.8 599.2 1387.5 594.8 1390.0 592.0C1392.5 589.2 1397.6 587.1 1400.0 585.3C1402.4 583.5 1404.4 582.3 1404.2 581.2C1403.9 580.1 1400.7 579.6 1398.3 578.7C1396.0 577.7 1391.9 577.0 1390.0 575.3C1388.1 573.7 1386.7 570.6 1386.7 568.7C1386.7 566.7 1387.8 564.8 1390.0 563.7C1392.2 562.6 1397.5 563.1 1400.0 562.0C1402.5 560.9 1403.6 558.4 1405.0 557.0C1406.4 555.6 1407.2 553.9 1408.3 553.7C1409.4 553.4 1411.2 554.2 1411.7 555.3C1412.1 556.4 1411.7 558.8 1410.8 560.3C1410.0 561.9 1406.5 563.2 1406.7 564.5C1406.8 565.8 1408.9 567.3 1411.7 567.8C1414.4 568.4 1419.4 568.0 1423.3 567.8C1427.2 567.7 1431.7 567.7 1435.0 567.0C1438.3 566.3 1440.8 565.1 1443.3 563.7C1445.8 562.3 1448.9 559.5 1450.0 558.7M1130.0 598.7C1131.7 598.4 1136.4 597.8 1140.0 597.0C1143.6 596.2 1147.8 593.9 1151.7 593.7C1155.6 593.4 1160.4 595.9 1163.3 595.3C1166.2 594.8 1167.8 592.6 1169.2 590.3C1170.6 588.1 1170.1 584.4 1171.7 582.0C1173.2 579.6 1175.3 577.0 1178.3 576.2C1181.4 575.3 1186.1 577.4 1190.0 577.0C1193.9 576.6 1197.8 574.2 1201.7 573.7C1205.6 573.1 1210.0 572.8 1213.3 573.7C1216.7 574.5 1219.7 576.2 1221.7 578.7C1223.6 581.2 1224.9 585.3 1225.0 588.7C1225.1 592.0 1223.6 595.3 1222.5 598.7C1221.4 602.0 1219.9 605.6 1218.3 608.7C1216.8 611.7 1214.2 614.5 1213.3 617.0C1212.5 619.5 1212.2 622.3 1213.3 623.7C1214.4 625.1 1216.7 625.9 1220.0 625.3C1223.3 624.8 1229.2 622.6 1233.3 620.3C1237.5 618.1 1241.1 614.5 1245.0 612.0C1248.9 609.5 1253.1 607.6 1256.7 605.3C1260.3 603.1 1263.3 600.9 1266.7 598.7C1270.0 596.4 1272.8 593.7 1276.7 592.0C1280.6 590.3 1285.3 589.5 1290.0 588.7C1294.7 587.8 1300.8 586.7 1305.0 587.0C1309.2 587.3 1312.8 588.9 1315.0 590.3C1317.2 591.7 1318.3 593.1 1318.3 595.3C1318.3 597.6 1316.7 601.2 1315.0 603.7C1313.3 606.2 1311.1 608.7 1308.3 610.3C1305.6 612.0 1301.9 612.8 1298.3 613.7C1294.7 614.5 1289.7 613.9 1286.7 615.3C1283.6 616.7 1281.8 619.7 1280.0 622.0C1278.2 624.3 1276.5 627.8 1275.8 629.0M1385.0 629.0C1385.3 627.8 1385.3 624.0 1386.7 622.0C1388.1 620.0 1391.1 617.7 1393.3 617.0C1395.6 616.3 1398.1 616.7 1400.0 617.8C1401.9 618.9 1403.3 622.7 1405.0 623.7C1406.7 624.6 1408.1 625.1 1410.0 623.7C1411.9 622.3 1414.4 618.1 1416.7 615.3C1418.9 612.6 1420.6 609.8 1423.3 607.0C1426.1 604.2 1430.3 601.4 1433.3 598.7C1436.4 595.9 1438.9 592.8 1441.7 590.3C1444.4 587.8 1448.6 584.8 1450.0 583.7M1450.0 585.3C1450.8 586.2 1453.3 588.1 1455.0 590.3C1456.7 592.6 1458.1 596.6 1460.0 598.7C1461.9 600.8 1464.2 603.0 1466.7 602.8C1469.2 602.7 1472.2 599.6 1475.0 597.8C1477.8 596.0 1480.3 592.8 1483.3 592.0C1486.4 591.2 1489.7 592.3 1493.3 592.8C1496.9 593.4 1501.1 594.8 1505.0 595.3C1508.9 595.9 1512.8 596.2 1516.7 596.2C1520.6 596.2 1525.0 595.1 1528.3 595.3C1531.7 595.6 1533.9 596.7 1536.7 597.8C1539.4 598.9 1543.1 600.2 1545.0 602.0C1546.9 603.8 1548.1 606.2 1548.3 608.7C1548.6 611.2 1547.2 614.5 1546.7 617.0C1546.1 619.5 1544.7 621.7 1545.0 623.7C1545.3 625.7 1547.8 628.1 1548.3 629.0M1450.0 557.8C1451.1 558.4 1454.4 559.1 1456.7 561.2C1458.9 563.2 1461.1 567.6 1463.3 570.3C1465.6 573.1 1467.2 576.0 1470.0 577.8C1472.8 579.6 1476.4 580.8 1480.0 581.2C1483.6 581.6 1487.5 580.9 1491.7 580.3C1495.8 579.8 1501.1 578.9 1505.0 577.8C1508.9 576.7 1511.9 575.2 1515.0 573.7C1518.1 572.1 1521.0 570.6 1523.3 568.7C1525.7 566.7 1528.3 564.1 1529.2 562.0C1530.0 559.9 1529.6 557.8 1528.3 556.2C1527.1 554.5 1524.2 552.6 1521.7 552.0C1519.2 551.4 1515.8 552.4 1513.3 552.8C1510.8 553.2 1508.3 554.6 1506.7 554.5C1505.0 554.4 1503.6 553.0 1503.3 552.0C1503.1 551.0 1503.3 549.5 1505.0 548.7C1506.7 547.8 1510.8 548.4 1513.3 547.0C1515.8 545.6 1517.5 542.3 1520.0 540.3C1522.5 538.4 1525.3 536.2 1528.3 535.3C1531.4 534.5 1535.8 534.5 1538.3 535.3C1540.8 536.2 1542.2 538.1 1543.3 540.3C1544.4 542.6 1543.9 546.3 1545.0 548.7C1546.1 551.0 1548.3 553.4 1550.0 554.5C1551.7 555.6 1553.4 554.8 1554.9 555.4C1556.5 556.0 1558.4 556.7 1559.2 558.0C1560.0 559.4 1560.2 561.4 1559.7 563.4C1559.2 565.3 1557.5 567.6 1556.0 569.8C1554.5 571.9 1552.3 574.0 1550.7 576.2C1549.1 578.3 1547.2 580.4 1546.4 582.6C1545.6 584.7 1545.3 587.0 1545.9 588.9C1546.4 590.9 1548.1 592.9 1549.6 594.3C1551.1 595.7 1553.6 596.2 1554.9 597.5C1556.3 598.7 1557.4 600.0 1557.6 601.7C1557.8 603.5 1557.0 606.0 1556.0 608.1C1555.0 610.3 1553.1 612.6 1551.7 614.5C1550.3 616.5 1548.6 618.3 1547.5 619.9C1546.3 621.5 1544.8 622.7 1544.8 624.1C1544.8 625.5 1546.0 627.6 1547.5 628.4C1549.0 629.2 1550.7 629.1 1553.9 628.9C1557.1 628.7 1561.8 627.7 1566.6 627.3C1571.4 627.0 1577.3 626.6 1582.6 626.8C1588.0 627.0 1593.3 627.8 1598.6 628.4C1603.9 629.0 1609.3 629.7 1614.6 630.5C1619.9 631.3 1626.3 632.4 1630.6 633.2C1634.9 633.9 1638.6 634.7 1640.2 635.0M1621.5 528.7C1621.4 529.3 1620.0 531.0 1620.5 531.9C1620.9 532.9 1622.2 533.9 1624.2 534.6C1626.2 535.3 1630.1 535.4 1632.7 536.2C1635.4 537.0 1638.0 538.1 1640.2 539.4C1642.3 540.6 1644.4 542.5 1645.5 543.7C1646.6 544.8 1646.4 545.9 1646.6 546.3M1543.2 635.0C1545.3 634.6 1551.2 633.2 1556.0 632.6C1560.8 632.1 1567.2 631.6 1572.0 631.6C1576.8 631.6 1581.2 632.1 1584.8 632.6C1588.3 633.2 1591.9 634.6 1593.3 635.0M1425.8 701.7C1426.4 699.7 1427.6 693.3 1429.2 690.0C1430.7 686.7 1432.1 683.8 1435.0 681.7C1437.9 679.6 1442.5 678.5 1446.7 677.5C1450.8 676.5 1455.8 676.0 1460.0 675.8C1464.2 675.7 1468.6 675.4 1471.7 676.7C1474.7 677.9 1476.4 681.1 1478.3 683.3C1480.3 685.6 1482.5 688.9 1483.3 690.0M1488.3 666.7C1488.1 664.7 1486.4 658.9 1486.7 655.0C1486.9 651.1 1488.1 646.5 1490.0 643.3C1491.9 640.1 1495.0 637.5 1498.3 635.8C1501.7 634.2 1505.8 633.8 1510.0 633.3C1514.2 632.9 1519.7 633.2 1523.3 633.3C1526.9 633.5 1530.1 633.1 1531.7 634.2C1533.2 635.3 1532.4 639.0 1532.5 640.0M1594.2 633.8C1590.1 633.8 1577.6 633.3 1570.0 633.3C1562.4 633.4 1553.9 633.5 1548.3 634.2C1542.8 634.9 1539.9 635.9 1536.7 637.5C1533.5 639.1 1531.7 640.9 1529.2 643.8C1526.7 646.8 1524.3 650.6 1521.7 655.0C1519.0 659.4 1516.1 664.7 1513.3 670.0C1510.6 675.3 1507.5 681.7 1505.0 686.7C1502.5 691.7 1499.4 697.8 1498.3 700.0M1440.0 629.2C1440.3 628.8 1440.6 628.8 1441.7 626.7C1442.8 624.6 1444.9 619.0 1446.7 616.7C1448.5 614.3 1450.6 612.5 1452.5 612.5C1454.4 612.5 1456.5 614.6 1458.3 616.7C1460.1 618.8 1461.7 624.2 1463.3 625.0C1465.0 625.8 1466.4 623.1 1468.3 621.7C1470.3 620.3 1472.5 618.1 1475.0 616.7C1477.5 615.3 1479.7 614.2 1483.3 613.3C1486.9 612.5 1492.2 612.1 1496.7 611.7C1501.1 611.2 1506.7 611.5 1510.0 610.8C1513.3 610.1 1514.4 608.5 1516.7 607.5C1518.9 606.5 1520.8 605.3 1523.3 605.0C1525.8 604.7 1529.2 606.1 1531.7 605.8C1534.2 605.6 1536.9 604.3 1538.3 603.3C1539.7 602.4 1539.7 600.6 1540.0 600.0M1410.0 700.0C1411.7 699.2 1417.8 697.8 1420.0 695.0C1422.2 692.2 1421.7 686.1 1423.3 683.3C1425.0 680.6 1426.7 679.7 1430.0 678.3C1433.3 676.9 1438.9 675.8 1443.3 675.0C1447.8 674.2 1453.1 674.7 1456.7 673.3C1460.3 671.9 1462.8 669.4 1465.0 666.7C1467.2 663.9 1468.1 660.0 1470.0 656.7C1471.9 653.3 1474.4 649.2 1476.7 646.7C1478.9 644.2 1481.1 643.9 1483.3 641.7C1485.6 639.4 1486.7 635.1 1490.0 633.3C1493.3 631.5 1498.9 631.4 1503.3 630.8C1507.8 630.3 1512.5 631.0 1516.7 630.0C1520.8 629.0 1525.0 627.2 1528.3 625.0C1531.7 622.8 1534.6 619.4 1536.7 616.7C1538.8 613.9 1540.3 611.1 1540.8 608.3C1541.4 605.6 1540.1 601.4 1540.0 600.0M1416.7 701.7C1418.1 700.3 1423.3 696.1 1425.0 693.3C1426.7 690.6 1425.0 687.4 1426.7 685.0C1428.3 682.6 1431.4 680.6 1435.0 679.2C1438.6 677.8 1443.9 677.4 1448.3 676.7C1452.8 676.0 1458.1 676.1 1461.7 675.0C1465.3 673.9 1467.8 672.8 1470.0 670.0C1472.2 667.2 1473.1 661.9 1475.0 658.3C1476.9 654.7 1479.4 651.4 1481.7 648.3C1483.9 645.3 1485.8 642.4 1488.3 640.0C1490.8 637.6 1495.3 635.1 1496.7 634.2M1480.0 670.0C1480.6 671.4 1481.9 676.1 1483.3 678.3C1484.7 680.6 1487.2 683.6 1488.3 683.3C1489.4 683.1 1489.2 678.6 1490.0 676.7C1490.8 674.7 1492.2 672.8 1493.3 671.7C1494.4 670.6 1496.1 670.3 1496.7 670.0M1485.8 680.0C1486.5 681.1 1488.5 686.9 1490.0 686.7C1491.5 686.4 1493.6 680.6 1495.0 678.3C1496.4 676.1 1497.8 674.2 1498.3 673.3M1130.0 513.3C1129.9 515.0 1129.6 519.9 1129.2 523.3C1128.8 526.8 1127.9 530.6 1127.5 534.2C1127.1 537.8 1126.6 542.0 1126.7 545.0C1126.7 548.0 1127.2 550.2 1127.9 552.1C1128.6 554.0 1129.9 555.4 1130.8 556.2C1131.8 557.1 1132.6 557.2 1133.8 557.1C1134.9 556.9 1136.9 555.7 1137.5 555.4M1275.8 629.0C1275.3 630.3 1273.2 633.7 1272.5 636.7C1271.8 639.6 1271.2 643.1 1271.7 646.7C1272.1 650.3 1273.6 655.4 1275.0 658.3C1276.4 661.2 1277.8 662.7 1280.0 664.2C1282.2 665.6 1285.3 666.9 1288.3 667.0C1291.4 667.1 1295.0 666.2 1298.3 664.7C1301.7 663.2 1305.3 660.7 1308.3 658.0C1311.4 655.3 1314.0 651.6 1316.7 648.3C1319.3 645.1 1321.7 641.1 1324.2 638.3C1326.7 635.6 1329.0 633.8 1331.7 631.7C1334.3 629.6 1337.2 627.4 1340.0 625.8C1342.8 624.3 1345.8 623.1 1348.3 622.5C1350.8 621.9 1352.8 621.0 1355.0 622.0C1357.2 623.0 1359.7 625.6 1361.7 628.3C1363.6 631.1 1365.0 635.3 1366.7 638.3C1368.3 641.4 1369.4 644.9 1371.7 646.7C1373.9 648.5 1377.5 649.4 1380.0 649.2C1382.5 648.9 1385.4 647.1 1386.7 645.0C1387.9 642.9 1387.6 639.3 1387.5 636.7C1387.4 634.0 1386.1 630.3 1385.8 629.0"/>
</g>
<g stroke="#2f7fa6" stroke-width="2.2">
<path d="M1130.0 358.8C1131.7 358.4 1137.2 357.7 1140.0 356.7C1142.8 355.6 1145.1 353.8 1146.7 352.5C1148.3 351.2 1149.9 349.7 1149.6 348.8C1149.3 347.8 1144.3 347.6 1145.0 347.1C1145.7 346.5 1152.3 345.7 1153.8 345.4"/>
</g>
<g stroke="#2f7fa6" stroke-width="2.6">
<path d="M1112.5 346.7C1113.5 346.5 1117.4 345.6 1118.3 345.4"/>
</g>
<g stroke="#9a4fc0" stroke-width="1.9">
<ellipse cx="944.2" cy="596.7" rx="9.2" ry="6.3"/>
<path d="M1136.7 729.6C1135.6 729.1 1132.8 728.1 1130.0 726.7C1127.2 725.3 1123.8 722.6 1120.0 721.2C1116.2 719.9 1110.8 719.0 1107.5 718.8C1104.2 718.5 1101.2 719.4 1100.0 719.6"/>
</g>
<g stroke="#7a45b5" stroke-width="1.9">
<path d="M903.3 592.8C904.0 590.8 906.7 589.2 910.0 587.8C913.3 586.4 918.9 585.8 923.3 584.5C927.8 583.2 932.2 580.8 936.7 580.3C941.1 579.9 946.1 581.3 950.0 582.0C953.9 582.7 956.9 583.4 960.0 584.5C963.1 585.6 966.2 586.9 968.3 588.7C970.5 590.5 973.0 593.1 973.0 595.3C973.0 597.6 971.1 600.3 968.3 602.0C965.6 603.7 961.4 604.5 956.7 605.3C951.9 606.2 945.0 606.2 940.0 607.0C935.0 607.8 930.6 609.2 926.7 610.3C922.8 611.4 919.4 613.9 916.7 613.7C913.9 613.4 911.8 610.9 910.0 608.7C908.2 606.4 906.9 603.0 905.8 600.3C904.7 597.7 902.6 594.9 903.3 592.8Z"/>
</g>
<g stroke="#4a3fa0" stroke-width="1.9">
<path d="M875.8 598.7C876.1 595.9 878.8 592.0 881.7 588.7C884.6 585.3 888.9 581.3 893.3 578.7C897.8 576.0 902.8 574.2 908.3 572.8C913.9 571.5 920.8 570.8 926.7 570.7C932.5 570.5 937.8 571.2 943.3 572.0C948.9 572.8 954.4 573.7 960.0 575.3C965.6 577.0 972.2 579.8 976.7 582.0C981.1 584.2 984.6 586.7 986.7 588.7C988.8 590.6 989.7 592.0 989.2 593.7C988.6 595.3 986.5 597.0 983.3 598.7C980.1 600.3 975.3 602.1 970.0 603.7C964.7 605.2 957.2 606.6 951.7 607.8C946.1 609.1 941.4 609.9 936.7 611.2C931.9 612.4 927.2 614.1 923.3 615.3C919.4 616.5 916.7 618.5 913.3 618.3C910.0 618.2 907.2 615.7 903.3 614.5C899.4 613.3 893.9 612.7 890.0 611.2C886.1 609.6 882.4 607.4 880.0 605.3C877.6 603.2 875.6 601.4 875.8 598.7Z"/>
</g>
<g stroke="#3aa6ad" stroke-width="1.9">
<ellipse cx="943.3" cy="642.9" rx="8.8" ry="6.5" transform="rotate(-20 943.3 642.9)"/>
</g>
<g stroke="#369fab" stroke-width="1.9">
<path d="M921.2 653.3C921.0 650.7 921.3 647.8 922.5 645.0C923.7 642.2 925.7 639.2 928.3 636.7C931.0 634.2 934.7 631.7 938.3 630.0C941.9 628.3 946.4 626.9 950.0 626.7C953.6 626.4 957.5 626.9 960.0 628.3C962.5 629.7 964.3 632.5 965.0 635.0C965.7 637.5 965.0 640.6 964.2 643.3C963.3 646.1 961.9 649.0 960.0 651.7C958.1 654.3 955.4 657.1 952.5 659.2C949.6 661.2 946.0 663.2 942.5 664.2C939.0 665.1 934.7 665.6 931.7 665.0C928.6 664.4 925.9 662.8 924.2 660.8C922.4 658.9 921.5 656.0 921.2 653.3Z"/>
</g>
<g stroke="#3296a8" stroke-width="1.9">
<path d="M904.6 658.3C904.4 655.8 904.7 653.1 905.8 650.0C907.0 646.9 909.0 643.2 911.7 640.0C914.3 636.8 917.8 633.5 921.7 630.8C925.6 628.2 930.3 625.9 935.0 624.2C939.7 622.4 945.0 621.0 950.0 620.4C955.0 619.8 961.1 619.7 965.0 620.4C968.9 621.2 971.4 622.8 973.3 625.0C975.3 627.2 976.2 630.3 976.7 633.3C977.1 636.4 976.7 639.9 975.8 643.3C975.0 646.8 973.8 650.6 971.7 654.2C969.6 657.8 966.7 661.9 963.3 665.0C960.0 668.1 955.8 670.6 951.7 672.5C947.5 674.4 942.8 676.1 938.3 676.7C933.9 677.2 929.2 676.7 925.0 675.8C920.8 675.0 916.4 673.5 913.3 671.7C910.3 669.9 908.1 667.2 906.7 665.0C905.2 662.8 904.7 660.8 904.6 658.3Z"/>
</g>
<g stroke="#2f8fa6" stroke-width="1.9">
<path d="M903.9 661.5C903.6 660.4 902.6 658.4 902.6 656.4C902.6 654.5 903.0 652.1 903.9 649.9C904.7 647.7 906.1 645.4 907.8 643.3C909.6 641.3 909.9 640.9 914.4 637.5C918.9 634.1 929.1 626.1 935.0 623.0C940.9 619.9 944.9 619.7 950.0 619.0C955.1 618.3 961.6 618.1 965.8 618.8C970.1 619.6 973.2 621.2 975.3 623.7C977.5 626.1 978.3 630.6 978.8 633.3C979.3 636.1 978.6 637.2 978.3 640.0C977.9 642.8 977.8 646.6 976.7 650.1C975.7 653.6 974.2 657.7 972.1 660.9C970.0 664.2 967.3 667.0 964.3 669.5C961.4 671.9 957.8 674.0 954.3 675.7C950.8 677.3 947.3 678.8 943.4 679.5C939.5 680.3 935.1 680.7 931.0 680.3C926.9 679.9 922.2 678.8 918.6 677.2C915.0 675.7 911.8 673.3 909.3 671.0C906.8 668.7 904.8 664.8 903.9 663.3C903.0 661.7 904.1 662.7 903.9 661.5Z"/>
</g>
<g stroke="#2e88a4" stroke-width="1.9">
<path d="M901.3 665.9C899.5 662.9 899.6 660.5 899.5 657.9C899.4 655.2 900.0 652.4 900.9 649.9C901.9 647.4 903.2 645.2 904.9 643.0C906.7 640.8 906.5 640.3 911.5 636.8C916.5 633.3 928.6 625.0 935.0 621.8C941.4 618.6 944.7 618.4 950.0 617.7C955.3 616.9 962.1 616.6 966.7 617.3C971.2 618.1 974.8 619.7 977.2 622.3C979.6 624.9 980.5 630.1 981.2 633.0C981.8 635.9 981.4 637.0 981.0 640.0C980.7 643.0 980.2 647.2 979.1 650.9C978.0 654.5 976.4 658.5 974.4 661.7C972.5 664.9 970.3 667.6 967.4 670.2C964.6 672.8 961.0 675.3 957.4 677.2C953.7 679.1 949.9 680.6 945.7 681.5C941.6 682.4 936.8 682.8 932.6 682.6C928.3 682.5 923.9 681.9 920.2 680.7C916.4 679.5 913.2 678.1 910.1 675.7C906.9 673.2 903.1 668.8 901.3 665.9Z"/>
</g>
<g stroke="#2d80a2" stroke-width="1.9">
<path d="M899.1 671.7C897.5 669.4 897.1 666.8 896.6 664.4C896.1 662.0 896.0 659.6 896.2 657.2C896.4 654.7 896.7 652.3 897.7 649.9C898.6 647.5 900.2 644.9 902.0 642.6C903.9 640.3 906.2 638.1 908.6 636.1C911.0 634.0 912.2 632.8 916.6 630.3C921.0 627.7 929.4 623.0 935.0 620.7C940.6 618.3 944.6 617.1 950.0 616.3C955.4 615.5 962.7 615.1 967.5 615.8C972.3 616.6 976.3 618.2 979.0 621.0C981.7 623.8 982.8 629.5 983.5 632.7C984.2 635.8 983.8 636.5 983.3 640.0C982.9 643.5 982.0 649.8 980.6 654.0C979.3 658.1 977.5 661.4 975.2 664.8C972.9 668.2 969.9 671.4 966.7 674.1C963.4 676.8 959.7 679.2 955.8 681.1C951.9 683.0 947.8 684.6 943.4 685.3C939.0 686.1 934.1 686.1 929.5 685.7C924.8 685.4 919.4 684.7 915.5 683.4C911.6 682.1 908.9 679.9 906.2 678.0C903.5 676.0 900.7 673.9 899.1 671.7Z"/>
</g>
<g stroke="#2c78a0" stroke-width="1.9">
<path d="M900.6 682.6C897.8 681.1 896.5 678.7 894.8 676.8C893.1 674.8 891.7 673.0 890.4 671.0C889.1 668.9 887.6 666.5 886.8 664.4C885.9 662.4 885.3 660.5 885.3 658.6C885.3 656.7 885.7 655.0 886.8 652.8C887.9 650.6 889.9 647.8 891.9 645.5C893.8 643.2 896.1 641.0 898.4 639.0C900.7 636.9 902.8 635.0 905.7 633.2C908.6 631.3 911.0 629.9 915.8 627.7C920.7 625.6 929.3 622.2 935.0 620.2C940.7 618.2 944.5 616.5 950.0 615.7C955.5 614.8 963.0 614.2 968.0 615.0C973.0 615.8 977.2 617.3 980.0 620.2C982.8 623.1 984.1 629.0 984.8 632.3C985.6 635.6 984.9 636.3 984.3 640.0C983.8 643.7 982.9 650.3 981.6 654.6C980.2 658.8 978.4 662.2 976.1 665.6C973.8 669.0 970.9 672.3 967.6 675.0C964.3 677.8 960.7 680.3 956.6 682.2C952.4 684.2 947.5 685.7 942.6 686.5C937.7 687.3 932.3 687.0 927.1 686.9C922.0 686.8 916.1 686.5 911.6 685.7C907.2 685.0 903.4 684.1 900.6 682.6Z"/>
</g>
<g stroke="#2b709c" stroke-width="1.9">
<path d="M894.8 690.0C893.2 689.4 892.2 688.3 890.4 686.9C888.6 685.6 885.8 683.7 883.9 681.9C881.9 680.0 880.2 678.1 878.8 676.0C877.3 674.0 876.1 671.8 875.1 669.5C874.2 667.2 873.4 664.5 873.0 662.2C872.5 659.9 872.2 657.6 872.2 655.7C872.2 653.8 872.1 652.2 873.0 650.6C873.8 649.0 875.4 647.7 877.3 646.2C879.3 644.8 881.8 643.6 884.6 641.9C887.4 640.2 890.9 637.8 894.0 636.1C897.2 634.3 899.9 632.9 903.5 631.4C907.1 629.8 910.6 628.6 915.8 626.6C921.1 624.7 929.3 621.4 935.0 619.5C940.7 617.6 944.4 615.9 950.0 615.0C955.6 614.1 963.1 613.6 968.3 614.3C973.5 615.1 978.1 616.4 981.2 619.3C984.2 622.2 985.7 628.2 986.7 631.7C987.6 635.1 987.1 636.7 986.8 640.0C986.6 643.3 986.0 647.9 985.3 651.6C984.5 655.4 983.7 658.9 982.2 662.5C980.6 666.1 978.6 670.0 976.0 673.3C973.4 676.7 970.0 679.9 966.7 682.6C963.3 685.3 959.7 687.7 955.8 689.6C951.9 691.6 947.5 693.0 943.4 694.3C939.3 695.6 935.0 696.7 931.0 697.4C927.0 698.0 923.3 698.5 919.4 698.1C915.5 697.8 911.0 696.3 907.8 695.0C904.5 693.7 902.2 691.2 900.0 690.4C897.8 689.5 896.4 690.6 894.8 690.0Z"/>
</g>
<g stroke="#2b6496" stroke-width="1.9">
<path d="M832.3 677.5C833.4 674.7 835.3 670.7 836.6 667.3C838.0 663.9 839.2 660.5 840.3 657.2C841.4 653.8 842.2 649.9 843.2 647.0C844.1 644.1 845.0 641.4 846.1 639.7C847.2 638.0 848.1 637.5 849.7 636.8C851.3 636.1 853.0 635.8 855.5 635.7C858.1 635.7 861.6 636.4 865.0 636.4C868.4 636.4 872.2 636.1 875.9 635.7C879.5 635.3 883.1 634.6 886.8 633.9C890.4 633.2 894.6 632.1 897.7 631.4C900.7 630.6 901.9 630.2 904.9 629.2C908.0 628.1 910.8 627.1 915.8 625.2C920.9 623.2 929.3 619.4 935.0 617.3C940.7 615.3 944.2 613.8 950.0 612.8C955.8 611.9 964.1 611.3 970.0 611.8C975.9 612.4 981.4 613.4 985.3 616.2C989.2 619.0 991.9 624.7 993.3 628.7C994.7 632.6 994.1 635.8 993.8 640.0C993.5 644.2 992.5 649.6 991.5 654.0C990.4 658.3 989.1 662.5 987.6 666.4C986.0 670.2 984.4 673.6 982.2 677.2C980.0 680.8 977.3 685.0 974.4 688.1C971.6 691.2 968.7 693.5 965.1 695.8C961.5 698.1 957.1 700.4 952.7 702.0C948.3 703.6 943.7 704.8 938.8 705.5C933.9 706.2 929.7 706.5 923.3 706.3C916.8 706.1 905.5 704.8 900.0 704.3C894.5 703.9 892.8 704.3 890.2 703.3C887.5 702.4 886.0 700.5 884.0 698.7C881.9 696.9 880.1 694.3 877.8 692.5C875.4 690.7 872.3 689.1 870.0 687.8C867.7 686.6 865.6 685.2 863.8 685.1C862.0 685.0 860.6 686.0 859.2 687.1C857.7 688.2 856.6 690.2 855.3 691.7C854.0 693.3 852.8 695.3 851.4 696.4C850.0 697.5 848.8 698.4 846.8 698.3C844.7 698.2 841.5 696.9 839.0 695.6C836.6 694.2 833.5 692.1 832.0 690.2C830.5 688.2 830.1 686.1 830.1 684.0C830.1 681.8 831.2 680.3 832.3 677.5Z"/>
</g>
<g stroke="#34489a" stroke-width="1.9">
<path d="M825.0 650.2C825.7 649.8 827.9 649.0 829.4 647.7C830.8 646.4 832.4 644.9 833.7 642.6C835.1 640.3 836.3 636.7 837.4 633.9C838.4 631.1 839.2 628.0 840.3 625.9C841.4 623.8 842.7 622.4 843.9 621.5C845.1 620.6 846.2 620.3 847.5 620.5C848.9 620.6 850.2 621.4 851.9 622.3C853.6 623.2 855.5 625.0 857.7 625.9C859.9 626.8 861.9 627.4 865.0 627.7C868.0 628.1 872.2 628.0 875.9 628.1C879.5 628.1 883.1 628.3 886.8 628.1C890.4 627.9 894.0 627.6 897.7 627.0C901.3 626.4 904.9 625.5 908.6 624.4C912.2 623.4 915.1 622.3 919.5 620.8C923.9 619.3 929.9 617.0 935.0 615.3C940.1 613.7 943.9 611.8 950.0 610.8C956.1 609.9 965.0 609.1 971.7 609.5C978.3 609.9 985.3 611.3 990.0 613.3C994.7 615.4 997.8 618.6 1000.0 621.7C1002.2 624.7 1002.6 628.6 1003.0 631.7C1003.4 634.7 1003.0 637.3 1002.3 640.0C1001.6 642.7 999.2 645.4 998.8 647.8C998.4 650.1 999.3 651.9 1000.0 654.0C1000.7 656.0 1003.0 658.1 1003.1 660.2C1003.2 662.2 1002.3 664.3 1000.8 666.4C999.2 668.4 995.7 669.7 993.8 672.6C991.9 675.4 991.2 679.5 989.1 683.4C987.1 687.3 984.0 692.3 981.4 695.8C978.8 699.3 976.9 702.0 973.6 704.3C970.4 706.7 966.5 708.4 962.0 709.8C957.5 711.1 951.7 712.0 946.5 712.5C941.3 713.0 936.2 713.1 931.0 712.9C925.8 712.7 920.7 712.1 915.5 711.3C910.3 710.5 905.0 708.4 900.0 708.2C895.0 708.0 889.9 710.2 885.5 710.3C881.2 710.5 875.8 709.3 873.9 709.1M1225.7 760.2C1226.0 758.7 1226.7 753.9 1227.8 751.2C1229.0 748.6 1230.5 746.1 1232.5 744.4C1234.6 742.6 1234.5 741.7 1240.2 740.8C1246.0 739.9 1259.7 739.6 1267.1 738.9C1274.5 738.2 1279.3 738.1 1284.6 736.7C1289.8 735.4 1294.0 733.2 1298.7 731.0C1303.4 728.9 1308.0 725.8 1312.8 723.8C1317.6 721.8 1323.0 719.5 1327.6 719.1C1332.3 718.7 1336.6 719.7 1340.8 721.5C1345.0 723.4 1350.0 727.1 1352.8 730.1C1355.6 733.1 1357.2 735.9 1357.6 739.5C1358.0 743.0 1356.6 747.7 1355.2 751.5C1353.7 755.4 1351.1 759.4 1349.0 762.6C1346.8 765.7 1347.8 768.3 1342.3 770.4C1336.8 772.5 1320.2 774.5 1315.8 775.4"/>
</g>
<g stroke="#3f3c9e" stroke-width="1.9">
<path d="M855.5 611.4C855.9 612.1 856.5 614.6 857.7 615.7C858.9 616.8 860.4 617.4 862.8 617.9C865.2 618.5 868.8 618.6 872.2 619.0C875.6 619.4 879.9 619.6 883.1 620.1C886.4 620.6 888.8 621.8 891.9 621.9C894.9 622.0 897.9 620.9 901.3 620.5C904.7 620.0 908.3 620.0 912.2 619.4C916.2 618.7 920.9 617.3 925.0 616.5C929.1 615.6 932.2 615.3 936.7 614.2C941.1 613.0 945.7 610.7 951.7 609.7C957.6 608.6 965.7 607.7 972.5 608.0C979.3 608.3 987.4 609.7 992.5 611.7C997.6 613.7 1000.7 616.9 1003.3 620.0C1006.0 623.1 1007.5 626.7 1008.3 630.0C1009.2 633.3 1008.8 637.6 1008.5 640.0C1008.3 642.4 1007.2 642.7 1007.0 644.7C1006.7 646.6 1006.7 649.2 1007.0 651.6C1007.2 654.1 1008.7 656.9 1008.5 659.4C1008.4 661.8 1007.4 664.2 1006.2 666.4C1005.0 668.6 1002.5 670.5 1001.6 672.6C1000.6 674.6 1001.3 676.6 1000.8 678.8C1000.3 681.0 998.9 684.4 998.4 685.7C998.0 687.1 999.2 685.3 998.3 686.7C997.5 688.1 995.3 691.2 993.3 694.2C991.4 697.1 989.0 700.8 986.7 704.2C984.3 707.5 981.2 711.5 979.2 714.2C977.1 716.8 975.0 719.0 974.2 720.0C973.3 721.0 974.4 719.2 974.2 720.0C973.9 720.8 972.4 723.2 972.5 725.0C972.6 726.8 973.9 728.9 975.0 730.8C976.1 732.8 978.1 734.6 979.2 736.7C980.2 738.8 981.1 741.2 981.2 743.3C981.4 745.4 980.5 747.6 980.0 749.2C979.5 750.8 978.8 752.3 978.5 752.9"/>
</g>
<g stroke="#34489a" stroke-width="2.4">
<path d="M848.7 745.2C849.1 744.6 849.8 742.5 851.4 741.7C853.0 740.9 854.0 740.9 858.4 740.5C862.8 740.2 870.7 740.0 877.8 739.8C884.9 739.5 893.9 739.2 901.0 739.0C908.1 738.8 914.2 738.6 920.4 738.6C926.6 738.6 935.1 738.9 938.0 739.0"/>
</g>
<g stroke="#40409e" stroke-width="1.9">
<path d="M1130.0 685.0C1129.2 684.4 1126.4 683.6 1125.0 681.7C1123.6 679.7 1122.8 675.7 1121.7 673.3C1120.6 671.0 1120.0 668.9 1118.3 667.5C1116.7 666.1 1114.4 665.6 1111.7 665.0C1108.9 664.4 1105.1 664.6 1101.7 664.2C1098.2 663.8 1094.2 663.1 1090.8 662.5C1087.5 661.9 1084.3 660.3 1081.7 660.4C1079.0 660.6 1077.4 662.2 1075.0 663.3C1072.6 664.5 1069.6 665.8 1067.5 667.5C1065.4 669.2 1063.9 671.9 1062.5 673.3C1061.1 674.7 1060.4 675.8 1059.2 675.8C1057.9 675.8 1056.5 674.9 1055.0 673.3C1053.5 671.8 1051.7 668.2 1050.0 666.7C1048.3 665.1 1046.7 664.3 1045.0 664.2C1043.3 664.0 1041.4 664.4 1040.0 665.8C1038.6 667.2 1037.6 669.9 1036.7 672.5C1035.7 675.1 1035.3 678.9 1034.2 681.7C1033.1 684.4 1031.8 686.9 1030.0 689.2C1028.2 691.4 1025.0 693.1 1023.3 695.0C1021.7 696.9 1020.8 698.5 1020.0 700.8C1019.2 703.2 1019.6 705.1 1018.3 709.2C1017.1 713.2 1014.4 720.4 1012.5 725.0C1010.6 729.6 1008.2 732.8 1006.7 736.7C1005.1 740.6 1004.4 744.2 1003.3 748.3C1002.2 752.5 1001.2 757.5 1000.0 761.7C998.8 765.8 997.4 769.8 995.8 773.3C994.3 776.9 991.7 781.3 990.8 782.9"/>
</g>
<g stroke="#4a40a2" stroke-width="1.9">
<path d="M1130.0 694.6C1127.6 694.5 1120.3 694.2 1115.8 694.2C1111.4 694.2 1107.1 694.4 1103.3 694.6C1099.6 694.8 1096.4 695.6 1093.3 695.4C1090.3 695.2 1087.5 694.0 1085.0 693.3C1082.5 692.7 1080.4 691.7 1078.3 691.7C1076.2 691.7 1074.2 692.2 1072.5 693.3C1070.8 694.4 1069.7 696.5 1068.3 698.3C1066.9 700.1 1065.6 702.8 1064.2 704.2C1062.8 705.6 1061.5 706.8 1060.0 706.7C1058.5 706.5 1056.7 704.7 1055.0 703.3C1053.3 701.9 1051.7 699.3 1050.0 698.3C1048.3 697.4 1046.7 697.4 1045.0 697.5C1043.3 697.6 1041.7 698.1 1040.0 699.2C1038.3 700.3 1036.4 701.9 1035.0 704.2C1033.6 706.4 1032.9 708.9 1031.7 712.5C1030.4 716.1 1029.3 721.9 1027.5 725.8C1025.7 729.7 1022.9 732.6 1020.8 735.8C1018.8 739.0 1016.5 741.8 1015.0 745.0C1013.5 748.2 1012.9 751.4 1011.7 755.0C1010.4 758.6 1009.0 762.6 1007.5 766.7C1006.0 770.7 1003.8 775.9 1002.5 779.2C1001.2 782.4 1000.1 784.9 999.6 786.0"/>
</g>
<g stroke="#5a42a8" stroke-width="1.9">
<path d="M1130.0 703.8C1127.6 703.8 1120.3 703.8 1115.8 704.2C1111.4 704.5 1107.5 705.3 1103.3 705.8C1099.2 706.3 1095.0 706.8 1090.8 707.1C1086.7 707.4 1081.5 707.0 1078.3 707.5C1075.1 708.0 1073.5 708.8 1071.7 710.0C1069.9 711.2 1068.9 713.3 1067.5 715.0C1066.1 716.7 1064.9 718.8 1063.3 720.0C1061.8 721.2 1060.0 722.4 1058.3 722.5C1056.7 722.6 1055.1 721.2 1053.3 720.8C1051.5 720.4 1049.3 719.9 1047.5 720.0C1045.7 720.1 1044.7 719.2 1042.5 721.7C1040.3 724.2 1036.7 731.2 1034.2 735.0C1031.7 738.8 1029.6 741.1 1027.5 744.2C1025.4 747.2 1023.5 749.9 1021.7 753.3C1019.9 756.8 1018.3 761.1 1016.7 765.0C1015.0 768.9 1013.2 773.2 1011.7 776.7C1010.1 780.2 1008.7 783.2 1007.5 786.0C1006.3 788.8 1005.3 791.4 1004.6 793.3C1003.9 795.2 1003.5 796.8 1003.3 797.5M1215.5 760.2C1215.9 758.7 1216.5 753.9 1217.7 751.2C1218.8 748.6 1220.3 746.1 1222.4 744.4C1224.4 742.6 1223.5 741.5 1230.1 740.5C1236.7 739.5 1252.9 739.1 1262.0 738.3C1271.1 737.6 1278.5 737.4 1284.6 735.9C1290.7 734.4 1294.0 731.9 1298.7 729.6C1303.4 727.3 1307.8 724.1 1312.8 722.1C1317.8 720.1 1323.4 717.6 1328.8 717.4C1334.1 717.2 1339.4 718.6 1344.7 720.7C1350.1 722.8 1356.9 726.9 1360.7 730.1C1364.6 733.2 1366.9 735.7 1367.8 739.5C1368.6 743.2 1367.1 748.4 1365.9 752.6C1364.6 756.9 1361.6 762.7 1360.2 764.8C1358.9 767.0 1360.3 763.8 1357.9 765.8C1355.5 767.8 1349.8 773.5 1345.7 777.1C1341.5 780.6 1335.1 785.5 1333.0 787.2"/>
</g>
<g stroke="#6a45ae" stroke-width="1.9" clip-path="url(#cp_z8)">
<path d="M1100.0 706.2C1098.3 706.5 1093.8 707.7 1090.0 707.9C1086.2 708.1 1080.7 707.0 1077.5 707.5C1074.3 708.0 1073.1 709.0 1070.8 710.8C1068.6 712.6 1066.4 716.3 1064.2 718.3C1061.9 720.3 1059.9 722.6 1057.5 722.9C1055.1 723.3 1052.1 720.9 1050.0 720.4C1047.9 719.9 1046.5 719.4 1045.0 720.0C1043.5 720.6 1042.6 721.7 1040.8 724.2C1039.0 726.7 1035.3 733.2 1034.2 735.0"/>
</g>
<g stroke="#7a48b4" stroke-width="1.9" clip-path="url(#cp_z8)">
<path d="M1100.0 712.5C1097.8 712.8 1090.6 713.9 1086.7 714.6C1082.8 715.3 1079.4 715.5 1076.7 716.7C1073.9 717.8 1072.2 719.6 1070.0 721.7C1067.8 723.8 1065.6 727.4 1063.3 729.2C1061.1 730.9 1059.2 731.7 1056.7 732.1C1054.2 732.5 1050.7 731.3 1048.3 731.7C1046.0 732.0 1044.4 732.5 1042.5 734.2C1040.6 735.8 1038.6 739.0 1036.7 741.7C1034.7 744.3 1032.8 747.2 1030.8 750.0C1028.9 752.8 1026.8 755.1 1025.0 758.3C1023.2 761.5 1021.5 765.7 1020.0 769.2C1018.5 772.6 1016.9 776.4 1015.8 779.2C1014.7 782.0 1014.0 783.8 1013.3 786.0C1012.7 788.2 1012.4 790.4 1012.1 792.5C1011.8 794.6 1011.7 797.4 1011.7 798.3"/>
</g>
<g stroke="#9a4fc0" stroke-width="1.9" clip-path="url(#cp_z8)">
<path d="M1100.0 719.2C1098.1 719.4 1091.9 720.2 1088.3 720.8C1084.7 721.5 1081.1 721.8 1078.3 722.9C1075.6 724.0 1073.9 725.5 1071.7 727.5C1069.4 729.5 1067.2 733.3 1065.0 735.0C1062.8 736.7 1060.7 737.4 1058.3 737.9C1056.0 738.5 1053.1 737.7 1050.8 738.3C1048.6 739.0 1047.1 739.7 1045.0 741.7C1042.9 743.6 1040.4 747.2 1038.3 750.0C1036.2 752.8 1034.3 755.3 1032.5 758.3C1030.7 761.4 1029.0 765.0 1027.5 768.3C1026.0 771.7 1024.5 775.4 1023.3 778.3C1022.2 781.3 1020.9 783.9 1020.4 786.0C1019.9 788.1 1020.3 789.3 1020.4 790.8C1020.5 792.3 1020.8 794.3 1020.8 795.0"/>
</g>
<g stroke="#b858c8" stroke-width="1.9" clip-path="url(#cp_z8)">
<path d="M1100.0 726.7C1097.6 726.8 1089.7 727.1 1085.8 727.5C1081.9 727.9 1079.2 728.2 1076.7 729.2C1074.2 730.1 1072.2 731.7 1070.8 733.3C1069.5 735.0 1068.8 737.2 1068.8 739.2C1068.8 741.1 1069.9 743.2 1070.8 745.0C1071.7 746.8 1073.5 748.3 1074.2 750.0C1074.9 751.7 1075.7 753.3 1075.0 755.0C1074.3 756.7 1071.8 758.7 1070.0 760.0C1068.2 761.3 1065.7 762.9 1064.2 762.9C1062.6 762.9 1061.5 761.6 1060.8 760.0C1060.1 758.4 1060.4 755.3 1060.0 753.3C1059.6 751.4 1059.3 749.4 1058.3 748.3C1057.4 747.2 1055.8 746.5 1054.2 746.7C1052.5 746.8 1050.3 747.9 1048.3 749.2C1046.4 750.4 1044.3 752.2 1042.5 754.2C1040.7 756.1 1039.2 758.2 1037.5 760.8C1035.8 763.5 1034.0 766.9 1032.5 770.0C1031.0 773.1 1029.4 776.5 1028.3 779.2C1027.2 781.8 1026.1 783.8 1025.8 786.0C1025.6 788.2 1026.2 790.3 1026.7 792.5C1027.1 794.7 1028.1 798.1 1028.3 799.2"/>
</g>
<g stroke="#c85ccc" stroke-width="1.9" clip-path="url(#cp_z8)">
<path d="M1100.0 732.1C1098.1 732.1 1091.7 731.9 1088.3 732.1C1085.0 732.3 1082.1 732.6 1080.0 733.3C1077.9 734.1 1076.7 735.3 1075.8 736.7C1074.9 738.1 1074.4 739.9 1074.6 741.7C1074.7 743.5 1076.2 745.6 1076.7 747.5C1077.2 749.4 1078.1 751.2 1077.5 753.3C1076.9 755.4 1075.1 757.9 1073.3 760.0C1071.5 762.1 1068.9 763.9 1066.7 765.8C1064.4 767.8 1061.7 771.1 1060.0 771.7C1058.3 772.2 1057.6 770.6 1056.7 769.2C1055.7 767.8 1055.1 765.0 1054.2 763.3C1053.2 761.7 1052.1 759.9 1050.8 759.2C1049.6 758.5 1048.2 758.5 1046.7 759.2C1045.1 759.9 1043.2 761.4 1041.7 763.3C1040.1 765.3 1038.8 768.2 1037.5 770.8C1036.2 773.5 1035.1 776.6 1034.2 779.2C1033.2 781.7 1032.2 784.1 1031.7 786.0C1031.2 787.9 1031.2 789.3 1031.2 790.8C1031.2 792.3 1031.6 794.3 1031.7 795.0"/>
</g>
<g stroke="#cf5fd0" stroke-width="1.9" clip-path="url(#cp_z8)">
<ellipse cx="1045.8" cy="774.2" rx="3.2" ry="5.8" transform="rotate(15 1045.8 774.2)"/>
<path d="M1100.0 735.8C1098.3 736.0 1092.8 736.4 1090.0 737.1C1087.2 737.8 1084.9 738.7 1083.3 740.0C1081.8 741.3 1081.4 743.1 1080.8 745.0C1080.3 746.9 1080.7 749.4 1080.0 751.7C1079.3 753.9 1078.3 756.1 1076.7 758.3C1075.0 760.6 1072.2 762.9 1070.0 765.0C1067.8 767.1 1065.1 768.9 1063.3 770.8C1061.5 772.8 1060.1 774.9 1059.2 776.7C1058.2 778.5 1057.6 780.1 1057.5 781.7C1057.4 783.2 1058.2 785.3 1058.3 786.0"/>
</g>
<g stroke="#4a40a2" stroke-width="1.9" clip-path="url(#cp_z8)">
<path d="M1050.8 700.0C1051.5 700.7 1053.6 703.0 1055.0 704.2C1056.4 705.3 1057.9 706.8 1059.2 707.1C1060.4 707.4 1061.4 707.0 1062.5 705.8C1063.6 704.7 1065.3 701.0 1065.8 700.0"/>
</g>
<g stroke="#2c5c96" stroke-width="1.9" clip-path="url(#cp_z8)">
<path d="M940.0 739.2C942.1 739.1 948.6 738.5 952.5 738.5C956.4 738.5 960.3 738.6 963.3 739.2C966.4 739.7 969.0 740.6 970.8 741.7C972.6 742.8 973.5 744.4 974.2 745.8C974.9 747.3 974.9 749.7 975.0 750.4"/>
</g>
<g stroke="#6a3fae" stroke-width="1.9">
<path d="M1441.7 629.0C1441.9 627.8 1441.9 624.3 1443.3 622.0C1444.7 619.7 1448.9 616.4 1450.0 615.3M1470.0 635.0C1470.0 632.9 1471.1 630.6 1473.3 628.3C1475.6 626.1 1479.4 623.3 1483.3 621.7C1487.2 620.0 1492.2 619.2 1496.7 618.3C1501.1 617.5 1506.1 617.6 1510.0 616.7C1513.9 615.7 1516.9 613.8 1520.0 612.5C1523.1 611.2 1526.1 609.3 1528.3 609.2C1530.6 609.0 1532.8 610.1 1533.3 611.7C1533.9 613.2 1533.3 616.1 1531.7 618.3C1530.0 620.6 1526.9 623.3 1523.3 625.0C1519.7 626.7 1514.4 627.5 1510.0 628.3C1505.6 629.2 1500.6 628.9 1496.7 630.0C1492.8 631.1 1489.4 633.3 1486.7 635.0C1483.9 636.7 1482.2 639.0 1480.0 640.0C1477.8 641.0 1475.0 641.7 1473.3 640.8C1471.7 640.0 1470.0 637.1 1470.0 635.0ZM1432.5 665.0C1433.1 663.3 1435.7 661.5 1438.3 660.0C1441.0 658.5 1445.3 656.9 1448.3 655.8C1451.4 654.7 1454.7 653.3 1456.7 653.3C1458.6 653.3 1459.6 654.4 1460.0 655.8C1460.4 657.2 1460.6 659.9 1459.2 661.7C1457.8 663.5 1454.6 665.1 1451.7 666.7C1448.8 668.2 1444.4 670.3 1441.7 670.8C1438.9 671.4 1436.5 671.0 1435.0 670.0C1433.5 669.0 1431.9 666.7 1432.5 665.0Z"/>
</g>
<g stroke="#2f9aa8" stroke-width="1.9">
<ellipse cx="1305.3" cy="744.6" rx="12.2" ry="4.7" transform="rotate(-12 1305.3 744.6)"/>
<path d="M1272.8 751.2C1272.2 749.8 1273.5 748.6 1275.2 747.5C1276.8 746.3 1279.6 745.3 1282.7 744.2C1285.8 743.0 1290.2 741.6 1294.0 740.4C1297.7 739.2 1301.5 737.9 1305.3 737.1C1309.0 736.3 1313.4 735.7 1316.5 735.7C1319.7 735.7 1322.4 736.2 1324.1 737.1C1325.7 738.1 1326.6 739.7 1326.4 741.4C1326.3 743.0 1325.1 745.2 1323.1 747.0C1321.2 748.8 1318.0 750.8 1314.7 752.2C1311.4 753.6 1307.5 754.7 1303.4 755.5C1299.3 756.2 1294.3 756.8 1290.2 756.9C1286.2 756.9 1281.8 756.9 1278.9 755.9C1276.0 755.0 1273.5 752.6 1272.8 751.2Z"/>
</g>
<g stroke="#2f95a8" stroke-width="1.9">
<ellipse cx="1450.0" cy="690.8" rx="2.3" ry="1.7"/>
<ellipse cx="1507.5" cy="652.0" rx="2.3" ry="1.3" transform="rotate(-55 1507.5 652.0)"/>
<path d="M1249.3 760.2C1249.7 758.7 1250.4 753.9 1251.5 751.2C1252.6 748.6 1254.1 746.0 1256.2 744.4C1258.3 742.7 1260.1 742.1 1263.9 741.4C1267.7 740.8 1275.5 740.7 1278.9 740.2C1282.4 739.8 1281.3 739.7 1284.6 738.7C1287.9 737.7 1294.0 736.1 1298.7 734.3C1303.4 732.5 1308.4 729.6 1312.8 727.7C1317.2 725.8 1321.9 723.7 1325.0 723.0C1328.1 722.3 1330.0 722.3 1331.6 723.5C1333.1 724.7 1334.0 727.4 1334.4 730.1C1334.8 732.7 1334.6 736.3 1333.9 739.5C1333.2 742.6 1332.0 745.9 1330.2 748.9C1328.3 751.8 1325.7 754.9 1322.7 757.3C1319.6 759.8 1315.4 762.2 1311.8 763.4C1308.3 764.7 1304.6 764.8 1301.5 765.0C1298.4 765.3 1294.5 765.0 1293.0 765.0"/>
</g>
<g stroke="#2e8ca6" stroke-width="1.9">
<path d="M1246.0 760.2C1246.3 758.7 1247.0 753.9 1248.1 751.2C1249.3 748.6 1250.8 746.0 1252.8 744.4C1254.9 742.7 1256.5 742.1 1260.5 741.4C1264.6 740.6 1273.2 740.5 1277.3 740.0C1281.3 739.6 1281.0 739.5 1284.6 738.4C1288.2 737.4 1294.0 735.7 1298.7 733.8C1303.4 732.0 1308.3 729.1 1312.8 727.2C1317.2 725.3 1322.0 723.1 1325.4 722.5C1328.7 721.8 1331.0 721.9 1332.9 723.2C1334.8 724.5 1336.3 727.4 1337.0 730.1C1337.8 732.8 1337.9 736.3 1337.3 739.5C1336.8 742.7 1335.6 746.1 1333.7 749.2C1331.9 752.3 1329.5 755.5 1326.4 758.1C1323.3 760.6 1319.0 763.1 1315.2 764.6C1311.4 766.0 1307.3 766.3 1303.6 766.6C1299.9 767.0 1294.8 766.7 1293.0 766.7"/>
</g>
<g stroke="#2d84a4" stroke-width="1.9">
<path d="M1242.6 760.2C1242.9 758.7 1243.6 753.9 1244.7 751.2C1245.9 748.6 1247.4 746.0 1249.4 744.4C1251.5 742.7 1252.8 742.0 1257.1 741.3C1261.5 740.5 1271.0 740.4 1275.6 739.8C1280.1 739.3 1280.7 739.2 1284.6 738.2C1288.4 737.1 1294.0 735.3 1298.7 733.4C1303.4 731.4 1308.3 728.5 1312.8 726.6C1317.3 724.7 1322.2 722.5 1325.8 721.9C1329.3 721.3 1331.9 721.6 1334.2 722.9C1336.5 724.3 1338.6 727.3 1339.7 730.1C1340.7 732.8 1341.1 736.2 1340.7 739.5C1340.3 742.7 1339.1 746.4 1337.3 749.6C1335.6 752.9 1333.3 756.2 1330.2 758.8C1327.1 761.5 1322.7 764.1 1318.6 765.7C1314.5 767.3 1309.9 767.8 1305.6 768.2C1301.4 768.7 1295.1 768.4 1293.0 768.4"/>
</g>
<g stroke="#2c7ba2" stroke-width="1.9">
<path d="M1239.2 760.2C1239.6 758.7 1240.2 753.9 1241.4 751.2C1242.5 748.6 1244.0 746.0 1246.1 744.4C1248.1 742.7 1249.1 741.9 1253.8 741.2C1258.4 740.4 1268.7 740.2 1273.9 739.7C1279.0 739.1 1280.5 739.0 1284.6 737.9C1288.7 736.7 1294.0 734.9 1298.7 732.9C1303.4 730.9 1308.2 728.0 1312.8 726.0C1317.4 724.1 1322.3 721.9 1326.1 721.3C1329.9 720.8 1332.8 721.2 1335.5 722.7C1338.2 724.1 1340.9 727.3 1342.3 730.1C1343.7 732.9 1344.3 736.2 1344.1 739.5C1343.8 742.8 1342.6 746.6 1340.9 750.0C1339.2 753.4 1337.1 756.8 1333.9 759.6C1330.8 762.4 1326.4 765.1 1322.0 766.8C1317.6 768.5 1312.5 769.3 1307.7 769.8C1302.9 770.4 1295.5 770.1 1293.0 770.1"/>
</g>
<g stroke="#2b72a0" stroke-width="1.9">
<path d="M1235.8 760.2C1236.2 758.7 1236.8 753.9 1238.0 751.2C1239.1 748.6 1240.6 746.1 1242.7 744.4C1244.7 742.7 1245.5 741.9 1250.4 741.1C1255.3 740.3 1266.5 740.1 1272.2 739.5C1277.9 738.9 1280.2 738.8 1284.6 737.6C1289.0 736.4 1294.0 734.4 1298.7 732.4C1303.4 730.4 1308.1 727.4 1312.8 725.5C1317.4 723.5 1322.5 721.3 1326.5 720.8C1330.5 720.3 1333.8 720.8 1336.8 722.4C1339.9 723.9 1343.2 727.2 1344.9 730.1C1346.7 732.9 1347.5 736.1 1347.5 739.5C1347.4 742.9 1346.1 746.9 1344.5 750.4C1342.8 753.9 1340.9 757.4 1337.7 760.3C1334.5 763.3 1330.0 766.1 1325.4 768.0C1320.7 769.8 1315.2 770.8 1309.8 771.4C1304.4 772.1 1295.8 771.7 1293.0 771.8"/>
</g>
<g stroke="#2e649e" stroke-width="1.9">
<path d="M1232.4 760.2C1232.8 758.7 1233.4 753.9 1234.6 751.2C1235.7 748.6 1237.2 746.1 1239.3 744.4C1241.4 742.7 1241.8 741.8 1247.0 741.0C1252.2 740.1 1264.2 739.9 1270.5 739.3C1276.8 738.7 1279.9 738.5 1284.6 737.3C1289.3 736.1 1294.0 734.0 1298.7 732.0C1303.4 729.9 1308.1 726.9 1312.8 724.9C1317.5 722.9 1322.7 720.7 1326.9 720.2C1331.1 719.7 1334.7 720.4 1338.2 722.1C1341.6 723.7 1345.4 727.2 1347.6 730.1C1349.7 733.0 1350.8 736.0 1350.8 739.5C1350.9 742.9 1349.6 747.1 1348.0 750.8C1346.5 754.4 1344.7 758.0 1341.4 761.1C1338.2 764.1 1333.7 767.1 1328.8 769.1C1323.8 771.1 1317.8 772.3 1311.8 773.0C1305.9 773.8 1296.2 773.4 1293.0 773.5"/>
</g>
<g stroke="#31569c" stroke-width="1.9">
<path d="M1229.0 760.2C1229.4 758.7 1230.1 753.9 1231.2 751.2C1232.3 748.6 1233.8 746.1 1235.9 744.4C1238.0 742.6 1238.1 741.8 1243.6 740.9C1249.1 740.0 1262.0 739.7 1268.8 739.1C1275.6 738.5 1279.6 738.3 1284.6 737.0C1289.6 735.8 1294.0 733.6 1298.7 731.5C1303.4 729.4 1308.0 726.3 1312.8 724.3C1317.5 722.4 1322.8 720.1 1327.3 719.6C1331.7 719.2 1335.7 720.1 1339.5 721.8C1343.3 723.5 1347.7 727.1 1350.2 730.1C1352.6 733.0 1354.0 736.0 1354.2 739.5C1354.5 743.0 1353.1 747.4 1351.6 751.1C1350.1 754.9 1347.4 758.7 1345.2 761.8C1343.0 765.0 1343.7 767.8 1338.2 770.0C1332.6 772.2 1316.2 774.3 1311.8 775.2"/>
</g>
<g stroke="#41469f" stroke-width="1.9">
<path d="M1222.3 760.2C1222.6 758.7 1223.3 753.9 1224.4 751.2C1225.6 748.6 1227.1 746.1 1229.1 744.4C1231.2 742.6 1230.8 741.6 1236.8 740.7C1242.9 739.8 1257.5 739.4 1265.4 738.7C1273.4 738.0 1279.0 737.8 1284.6 736.5C1290.1 735.1 1294.0 732.8 1298.7 730.5C1303.4 728.3 1307.9 725.2 1312.8 723.2C1317.7 721.2 1323.1 718.8 1328.0 718.5C1332.9 718.2 1337.5 719.3 1342.1 721.2C1346.7 723.2 1352.3 727.0 1355.5 730.1C1358.6 733.1 1360.4 735.8 1361.0 739.5C1361.5 743.1 1360.1 747.9 1358.7 751.9C1357.4 755.9 1354.8 760.2 1352.7 763.3C1350.7 766.5 1351.9 768.7 1346.4 770.8C1340.9 772.8 1324.2 774.8 1319.7 775.6"/>
</g>
<g stroke="#4d44a3" stroke-width="1.9">
<path d="M1218.9 760.2C1219.3 758.7 1219.9 753.9 1221.1 751.2C1222.2 748.6 1223.7 746.1 1225.8 744.4C1227.8 742.6 1227.1 741.6 1233.5 740.6C1239.8 739.6 1255.2 739.3 1263.7 738.5C1272.2 737.8 1278.8 737.6 1284.6 736.2C1290.4 734.8 1294.0 732.3 1298.7 730.1C1303.4 727.8 1307.8 724.7 1312.8 722.7C1317.7 720.6 1323.3 718.2 1328.4 718.0C1333.5 717.7 1338.5 718.9 1343.4 721.0C1348.4 723.0 1354.6 727.0 1358.1 730.1C1361.6 733.2 1363.7 735.8 1364.4 739.5C1365.1 743.2 1363.6 748.2 1362.3 752.3C1361.0 756.4 1357.8 761.8 1356.5 764.1C1355.1 766.4 1356.7 763.6 1354.1 765.8C1351.6 768.0 1345.6 774.0 1341.0 777.1C1336.4 780.1 1329.0 782.9 1326.6 784.0"/>
</g>
<g stroke="#2f8aa6" stroke-width="1.7" clip-path="url(#cp_c1)">
<ellipse cx="1290.3" cy="641.0" rx="5.0" ry="3.7" transform="rotate(-38 1290.3 641.0)"/>
</g>
<g stroke="#2f83a4" stroke-width="1.7" clip-path="url(#cp_c1)">
<ellipse cx="1291.2" cy="640.4" rx="7.2" ry="5.2" transform="rotate(-38 1291.2 640.4)"/>
</g>
<g stroke="#2e7da1" stroke-width="1.7" clip-path="url(#cp_c1)">
<ellipse cx="1292.2" cy="639.8" rx="9.3" ry="6.7" transform="rotate(-38 1292.2 639.8)"/>
</g>
<g stroke="#2e769f" stroke-width="1.7" clip-path="url(#cp_c1)">
<ellipse cx="1293.1" cy="639.2" rx="11.5" ry="8.2" transform="rotate(-38 1293.1 639.2)"/>
</g>
<g stroke="#2d709d" stroke-width="1.7" clip-path="url(#cp_c1)">
<ellipse cx="1294.0" cy="638.7" rx="13.7" ry="9.7" transform="rotate(-38 1294.0 638.7)"/>
</g>
<g stroke="#2d699b" stroke-width="1.7" clip-path="url(#cp_c1)">
<ellipse cx="1294.9" cy="638.1" rx="15.8" ry="11.2" transform="rotate(-38 1294.9 638.1)"/>
</g>
<g stroke="#2c6398" stroke-width="1.7" clip-path="url(#cp_c1)">
<ellipse cx="1295.8" cy="637.5" rx="18.0" ry="12.7" transform="rotate(-38 1295.8 637.5)"/>
</g>
<g stroke="#2c5c96" stroke-width="1.7" clip-path="url(#cp_c1)">
<ellipse cx="1296.8" cy="636.9" rx="20.2" ry="14.2" transform="rotate(-38 1296.8 636.9)"/>
</g>
<g stroke="#3b3f9c" stroke-width="1.9" clip-path="url(#cp_c1)">
<ellipse cx="1259.2" cy="692.0" rx="8.0" ry="5.5"/>
<ellipse cx="1163.3" cy="650.7" rx="3.7" ry="4.7"/>
<path d="M1130.0 684.0C1131.7 683.7 1136.4 683.2 1140.0 682.3C1143.6 681.5 1147.8 680.1 1151.7 679.0C1155.6 677.9 1159.4 677.3 1163.3 675.7C1167.2 674.0 1171.4 671.2 1175.0 669.0C1178.6 666.8 1181.7 664.3 1185.0 662.3C1188.3 660.4 1192.2 659.3 1195.0 657.3C1197.8 655.4 1199.4 652.6 1201.7 650.7C1203.9 648.7 1205.8 647.1 1208.3 645.7C1210.8 644.3 1213.6 642.8 1216.7 642.3C1219.7 641.9 1223.3 642.6 1226.7 643.2C1230.0 643.7 1233.6 645.7 1236.7 645.7C1239.7 645.7 1242.2 644.3 1245.0 643.2C1247.8 642.1 1250.8 639.8 1253.3 639.0C1255.8 638.2 1258.2 637.8 1260.0 638.2C1261.8 638.6 1263.6 639.7 1264.2 641.5C1264.7 643.3 1263.6 646.6 1263.3 649.0C1263.1 651.4 1261.9 653.6 1262.5 655.7C1263.1 657.8 1264.6 659.6 1266.7 661.5C1268.8 663.4 1272.5 665.4 1275.0 667.3C1277.5 669.3 1279.4 671.8 1281.7 673.2C1283.9 674.6 1285.6 675.8 1288.3 675.7C1291.1 675.5 1294.7 673.7 1298.3 672.3C1301.9 670.9 1306.1 669.6 1310.0 667.3C1313.9 665.1 1318.3 662.1 1321.7 659.0C1325.0 655.9 1327.5 652.3 1330.0 649.0C1332.5 645.7 1334.7 641.5 1336.7 639.0C1338.6 636.5 1339.7 635.1 1341.7 634.0C1343.6 632.9 1346.7 631.8 1348.3 632.3C1350.0 632.9 1350.6 635.1 1351.7 637.3C1352.8 639.6 1353.6 642.6 1355.0 645.7C1356.4 648.7 1358.1 652.3 1360.0 655.7C1361.9 659.0 1364.4 663.4 1366.7 665.7C1368.9 667.9 1370.8 669.0 1373.3 669.0C1375.8 669.0 1378.6 667.1 1381.7 665.7C1384.7 664.3 1388.6 662.9 1391.7 660.7C1394.7 658.4 1396.9 654.8 1400.0 652.3C1403.1 649.8 1406.7 647.3 1410.0 645.7C1413.3 644.0 1416.7 642.9 1420.0 642.3C1423.3 641.8 1427.2 642.9 1430.0 642.3C1432.8 641.8 1435.0 641.2 1436.7 639.0C1438.3 636.8 1439.4 630.7 1440.0 629.0M1406.7 705.7C1406.4 706.2 1405.0 708.0 1405.0 709.0C1405.0 710.0 1406.4 711.1 1406.7 711.5M1390.0 732.3C1389.4 732.9 1387.1 734.3 1386.7 735.7C1386.2 737.1 1386.9 739.3 1387.5 740.7C1388.1 742.1 1389.6 743.4 1390.0 744.0"/>
</g>
<g stroke="#4a40a2" stroke-width="1.9" clip-path="url(#cp_c1)">
<path d="M1130.0 694.8C1132.2 694.3 1138.9 692.8 1143.3 691.5C1147.8 690.2 1152.5 688.9 1156.7 687.3C1160.8 685.8 1164.7 684.0 1168.3 682.3C1171.9 680.7 1175.0 678.7 1178.3 677.3C1181.7 675.9 1185.0 674.4 1188.3 674.0C1191.7 673.6 1195.6 675.1 1198.3 674.8C1201.1 674.6 1203.3 673.9 1205.0 672.3C1206.7 670.8 1207.2 667.6 1208.3 665.7C1209.4 663.7 1210.0 661.4 1211.7 660.7C1213.3 660.0 1216.1 660.8 1218.3 661.5C1220.6 662.2 1222.8 664.6 1225.0 664.8C1227.2 665.1 1229.7 664.1 1231.7 663.2C1233.6 662.2 1235.1 659.6 1236.7 659.0C1238.2 658.4 1239.7 658.9 1240.8 659.8C1241.9 660.8 1242.1 663.4 1243.3 664.8C1244.6 666.2 1245.8 667.6 1248.3 668.2C1250.8 668.7 1255.6 667.8 1258.3 668.2C1261.1 668.6 1264.2 669.4 1265.0 670.7C1265.8 671.9 1264.7 674.6 1263.3 675.7C1261.9 676.8 1259.4 676.9 1256.7 677.3C1253.9 677.8 1249.7 676.9 1246.7 678.2C1243.6 679.4 1240.6 683.4 1238.3 684.8C1236.1 686.2 1235.0 686.9 1233.3 686.5C1231.7 686.1 1230.0 683.3 1228.3 682.3C1226.7 681.4 1224.9 680.1 1223.3 680.7C1221.8 681.2 1219.6 683.4 1219.2 685.7C1218.8 687.9 1219.9 691.2 1220.8 694.0C1221.8 696.8 1223.5 700.8 1225.0 702.3C1226.5 703.9 1228.3 703.9 1230.0 703.2C1231.7 702.5 1233.3 699.6 1235.0 698.2C1236.7 696.8 1238.1 694.7 1240.0 694.8C1241.9 695.0 1243.9 697.6 1246.7 699.0C1249.4 700.4 1253.1 702.6 1256.7 703.2C1260.3 703.7 1264.4 703.3 1268.3 702.3C1272.2 701.4 1276.7 699.3 1280.0 697.3C1283.3 695.4 1285.8 693.2 1288.3 690.7C1290.8 688.2 1292.5 684.6 1295.0 682.3C1297.5 680.1 1300.0 678.7 1303.3 677.3C1306.7 675.9 1311.1 674.8 1315.0 674.0C1318.9 673.2 1323.3 673.2 1326.7 672.3C1330.0 671.5 1331.9 670.0 1335.0 669.0C1338.1 668.0 1341.9 666.6 1345.0 666.5C1348.1 666.4 1350.8 666.9 1353.3 668.2C1355.8 669.4 1358.1 671.6 1360.0 674.0C1361.9 676.4 1363.1 680.1 1365.0 682.3C1366.9 684.6 1369.4 685.8 1371.7 687.3C1373.9 688.9 1376.5 690.1 1378.3 691.5C1380.1 692.9 1382.2 693.9 1382.5 695.7C1382.8 697.5 1381.2 700.4 1380.0 702.3C1378.8 704.3 1376.4 705.4 1375.0 707.3C1373.6 709.3 1373.1 712.5 1371.7 714.0C1370.3 715.5 1368.6 716.8 1366.7 716.5C1364.7 716.2 1362.5 713.7 1360.0 712.3C1357.5 710.9 1354.4 709.1 1351.7 708.2C1348.9 707.2 1346.1 706.4 1343.3 706.5C1340.6 706.6 1337.8 707.9 1335.0 709.0C1332.2 710.1 1329.4 711.9 1326.7 713.2C1323.9 714.4 1319.7 715.9 1318.3 716.5M1341.5 788.2C1343.5 786.8 1349.2 783.0 1353.3 779.7C1357.4 776.3 1362.3 771.0 1366.2 768.0C1370.1 765.0 1373.5 763.3 1376.7 761.5C1379.9 759.7 1383.0 758.7 1385.3 757.3C1387.7 756.0 1389.8 754.1 1390.7 753.5"/>
</g>
<g stroke="#6a3fae" stroke-width="1.9" clip-path="url(#cp_c1)">
<ellipse cx="1178.8" cy="717.3" rx="12.0" ry="8.0"/>
<path d="M1130.0 703.2C1131.9 702.8 1137.5 701.6 1141.7 700.7C1145.8 699.7 1150.8 698.4 1155.0 697.3C1159.2 696.2 1162.8 694.7 1166.7 694.0C1170.6 693.3 1175.0 692.6 1178.3 693.2C1181.7 693.7 1183.9 695.8 1186.7 697.3C1189.4 698.9 1192.2 700.9 1195.0 702.3C1197.8 703.7 1200.6 705.2 1203.3 705.7C1206.1 706.1 1208.9 704.6 1211.7 704.8C1214.4 705.1 1216.9 706.4 1220.0 707.3C1223.1 708.3 1226.1 710.4 1230.0 710.7C1233.9 710.9 1238.9 709.6 1243.3 709.0C1247.8 708.4 1252.2 707.3 1256.7 707.3C1261.1 707.3 1265.6 709.3 1270.0 709.0C1274.4 708.7 1279.7 707.3 1283.3 705.7C1286.9 704.0 1288.9 701.2 1291.7 699.0C1294.4 696.8 1296.7 693.9 1300.0 692.3C1303.3 690.8 1307.8 690.0 1311.7 689.8C1315.6 689.7 1320.0 690.5 1323.3 691.5C1326.7 692.5 1329.7 694.1 1331.7 695.7C1333.6 697.2 1335.3 698.7 1335.0 700.7C1334.7 702.6 1332.5 705.4 1330.0 707.3C1327.5 709.3 1323.3 710.7 1320.0 712.3C1316.7 714.0 1313.3 715.7 1310.0 717.3C1306.7 719.0 1303.3 720.7 1300.0 722.3C1296.7 724.0 1292.5 725.9 1290.0 727.3C1287.5 728.7 1285.8 730.1 1285.0 730.7M1340.5 802.0C1341.9 801.3 1346.2 799.9 1349.0 797.8C1351.8 795.7 1354.3 792.7 1357.5 789.3C1360.7 785.9 1364.6 780.4 1368.2 777.5C1371.7 774.6 1375.4 773.2 1378.8 771.7C1382.2 770.1 1386.9 768.6 1388.5 768.0"/>
</g>
<g stroke="#b050c0" stroke-width="1.9" clip-path="url(#cp_c1)">
<ellipse cx="1313.3" cy="706.0" rx="9.2" ry="5.0" transform="rotate(-15 1313.3 706.0)"/>
</g>
<g stroke="#9a4fc0" stroke-width="1.9" clip-path="url(#cp_c1)">
<path d="M1130.0 715.7C1131.4 716.4 1135.3 718.4 1138.3 719.8C1141.4 721.2 1144.7 722.8 1148.3 724.0C1151.9 725.2 1156.1 726.6 1160.0 727.3C1163.9 728.0 1167.5 728.2 1171.7 728.2C1175.8 728.2 1181.4 728.3 1185.0 727.3C1188.6 726.4 1190.8 723.7 1193.3 722.3C1195.8 720.9 1197.5 719.4 1200.0 719.0C1202.5 718.6 1205.6 719.4 1208.3 719.8C1211.1 720.2 1214.2 721.9 1216.7 721.5C1219.2 721.1 1221.1 718.2 1223.3 717.3C1225.6 716.5 1228.3 715.9 1230.0 716.5C1231.7 717.1 1233.3 719.3 1233.3 720.7C1233.3 722.1 1231.1 723.9 1230.0 724.8C1228.9 725.8 1225.6 726.4 1226.7 726.5C1227.8 726.6 1232.8 726.4 1236.7 725.7C1240.6 725.0 1245.6 723.3 1250.0 722.3C1254.4 721.4 1259.2 720.4 1263.3 719.8C1267.5 719.3 1271.9 718.7 1275.0 719.0C1278.1 719.3 1280.8 720.1 1281.7 721.5C1282.5 722.9 1281.1 725.8 1280.0 727.3C1278.9 728.9 1275.8 730.1 1275.0 730.7"/>
</g>
<g stroke="#cf5fd0" stroke-width="1.9" clip-path="url(#cp_c1)">
<ellipse cx="1256.7" cy="734.8" rx="20.0" ry="3.0"/>
<ellipse cx="1256.7" cy="735.0" rx="13.3" ry="2.0"/>
<path d="M1130.0 730.7C1132.2 730.4 1138.9 729.1 1143.3 729.0C1147.8 728.9 1151.9 729.6 1156.7 729.8C1161.4 730.1 1166.7 730.7 1171.7 730.7C1176.7 730.7 1181.9 730.4 1186.7 729.8C1191.4 729.3 1195.6 728.0 1200.0 727.3C1204.4 726.6 1209.2 725.7 1213.3 725.7C1217.5 725.7 1220.8 726.8 1225.0 727.3C1229.2 727.9 1233.6 728.7 1238.3 729.0C1243.1 729.3 1248.6 729.1 1253.3 729.0C1258.1 728.9 1262.8 727.9 1266.7 728.2C1270.6 728.4 1273.6 730.0 1276.7 730.7C1279.7 731.4 1283.6 732.1 1285.0 732.3M1130.0 735.7C1132.8 735.2 1141.1 733.3 1146.7 733.2C1152.2 733.0 1157.8 734.4 1163.3 734.8C1168.9 735.2 1175.0 735.5 1180.0 735.7C1185.0 735.8 1190.0 735.1 1193.3 735.7C1196.7 736.2 1198.6 736.8 1200.0 739.0C1201.4 741.2 1201.0 745.5 1201.7 749.0C1202.4 752.5 1203.8 758.0 1204.2 759.8M1130.0 739.0C1132.8 738.7 1141.1 737.3 1146.7 737.3C1152.2 737.3 1158.1 738.4 1163.3 739.0C1168.6 739.6 1174.2 739.8 1178.3 740.7C1182.5 741.5 1185.8 742.1 1188.3 744.0C1190.8 745.9 1192.1 749.7 1193.3 752.3C1194.6 755.0 1195.4 758.6 1195.8 759.8M1130.0 742.3C1132.8 742.2 1141.1 741.2 1146.7 741.5C1152.2 741.8 1158.3 743.0 1163.3 744.0C1168.3 745.0 1173.1 745.9 1176.7 747.3C1180.3 748.7 1182.8 750.2 1185.0 752.3C1187.2 754.4 1189.2 758.6 1190.0 759.8M1205.0 735.7C1205.6 737.1 1207.6 741.2 1208.3 744.0C1209.0 746.8 1208.6 749.7 1209.2 752.3C1209.7 755.0 1211.2 758.6 1211.7 759.8M1368.2 811.7C1369.6 810.6 1374.2 806.8 1376.7 805.3C1379.2 803.8 1381.4 803.2 1383.2 802.7C1384.9 802.1 1386.6 802.1 1387.3 802.0"/>
</g>
<g stroke="#b858c8" stroke-width="1.9" clip-path="url(#cp_c1)">
<path d="M1213.3 737.3C1213.8 738.7 1215.3 742.9 1215.8 745.7C1216.4 748.4 1216.1 751.6 1216.7 754.0C1217.2 756.4 1218.8 758.9 1219.2 759.8"/>
</g>
<g stroke="#e070e0" stroke-width="2.5" clip-path="url(#cp_c1)">
<ellipse cx="1256.7" cy="735.2" rx="7.5" ry="1.0"/>
</g>
<g stroke="#8a45b8" stroke-width="1.9" clip-path="url(#cp_c1)">
<path d="M1353.3 811.2C1354.8 809.8 1359.0 806.3 1361.8 803.2C1364.7 800.1 1367.5 795.3 1370.3 792.5C1373.2 789.7 1375.8 787.9 1378.8 786.2C1381.9 784.4 1386.9 782.6 1388.5 781.8"/>
</g>
<g stroke="#c8fff0" stroke-width="0.8">
<ellipse cx="1549.2" cy="705.0" rx="1.7" ry="1.0"/>
<ellipse cx="1548.5" cy="705.3" rx="5.0" ry="3.0"/>
<ellipse cx="1547.8" cy="705.7" rx="9.2" ry="5.3"/>
<ellipse cx="1547.2" cy="706.0" rx="13.3" ry="7.7"/>
<ellipse cx="1546.5" cy="706.3" rx="17.5" ry="9.7"/>
</g>
<g stroke="#e8fffa" stroke-width="1">
<path d="M1506.7 715.0C1506.4 714.2 1510.8 711.4 1513.3 710.0C1515.8 708.6 1519.2 708.3 1521.7 706.7C1524.2 705.0 1526.7 699.7 1528.3 700.0C1530.0 700.3 1532.5 706.4 1531.7 708.3C1530.8 710.3 1526.1 710.6 1523.3 711.7C1520.6 712.8 1517.8 714.4 1515.0 715.0C1512.2 715.6 1506.9 715.8 1506.7 715.0Z"/>
</g>
<g stroke="#d8fff5" stroke-width="0.8">
<path d="M1571.7 700.0C1573.3 699.7 1578.3 698.8 1581.7 698.3C1585.0 697.9 1590.0 697.6 1591.7 697.5M1572.5 705.0C1574.0 705.3 1578.6 706.1 1581.7 706.7C1584.7 707.2 1589.3 708.1 1590.8 708.3M1570.0 710.0C1571.1 710.8 1574.7 713.8 1576.7 715.0C1578.6 716.2 1580.8 717.1 1581.7 717.5"/>
</g>
<g stroke="#2e8ea4" stroke-width="1.9">
<ellipse cx="1451.0" cy="690.5" rx="5.2" ry="3.0" transform="rotate(-4 1451.0 690.5)"/>
<ellipse cx="1507.3" cy="652.2" rx="4.7" ry="2.7" transform="rotate(-55 1507.3 652.2)"/>
</g>
<g stroke="#2d869f" stroke-width="1.9">
<ellipse cx="1452.0" cy="690.2" rx="8.0" ry="4.3" transform="rotate(-4 1452.0 690.2)"/>
<ellipse cx="1507.2" cy="652.3" rx="7.0" ry="4.0" transform="rotate(-55 1507.2 652.3)"/>
</g>
<g stroke="#2c7f9a" stroke-width="1.9">
<ellipse cx="1453.0" cy="689.8" rx="10.8" ry="5.7" transform="rotate(-4 1453.0 689.8)"/>
<ellipse cx="1507.0" cy="652.5" rx="9.3" ry="5.3" transform="rotate(-55 1507.0 652.5)"/>
</g>
<g stroke="#2c7896" stroke-width="1.9">
<ellipse cx="1454.0" cy="689.5" rx="13.7" ry="7.0" transform="rotate(-4 1454.0 689.5)"/>
<ellipse cx="1506.8" cy="652.7" rx="11.7" ry="6.7" transform="rotate(-55 1506.8 652.7)"/>
</g>
<g stroke="#2b7092" stroke-width="1.9">
<ellipse cx="1455.0" cy="689.2" rx="16.5" ry="8.3" transform="rotate(-4 1455.0 689.2)"/>
<ellipse cx="1506.7" cy="652.8" rx="14.0" ry="8.0" transform="rotate(-55 1506.7 652.8)"/>
</g>
<g stroke="#2a698d" stroke-width="1.9">
<ellipse cx="1456.0" cy="688.8" rx="19.3" ry="9.7" transform="rotate(-4 1456.0 688.8)"/>
<ellipse cx="1506.5" cy="653.0" rx="16.3" ry="9.3" transform="rotate(-55 1506.5 653.0)"/>
</g>
<g stroke="#296188" stroke-width="1.9">
<ellipse cx="1457.0" cy="688.5" rx="22.2" ry="11.0" transform="rotate(-4 1457.0 688.5)"/>
<ellipse cx="1506.3" cy="653.2" rx="18.7" ry="10.7" transform="rotate(-55 1506.3 653.2)"/>
</g>
<g stroke="#285a84" stroke-width="1.9">
<ellipse cx="1458.0" cy="688.2" rx="25.0" ry="12.3" transform="rotate(-4 1458.0 688.2)"/>
<ellipse cx="1506.2" cy="653.3" rx="21.0" ry="12.0" transform="rotate(-55 1506.2 653.3)"/>
</g>
<g stroke="#4c42a3" stroke-width="1.9">
<path d="M1594.2 635.8C1590.1 635.7 1577.6 635.2 1570.0 635.2C1562.4 635.3 1554.0 635.4 1548.3 636.1C1542.7 636.8 1539.5 637.8 1536.2 639.4C1532.8 641.0 1530.9 642.7 1528.3 645.8C1525.8 648.8 1523.3 653.3 1520.7 657.7C1518.1 662.0 1515.3 666.7 1512.7 671.7C1510.0 676.6 1507.1 682.8 1504.7 687.5C1502.3 692.2 1499.4 698.1 1498.3 700.2"/>
</g>
<g stroke="#5e44a9" stroke-width="1.9">
<path d="M1594.2 637.7C1590.1 637.6 1577.6 637.1 1570.0 637.2C1562.4 637.2 1554.1 637.3 1548.3 638.0C1542.6 638.7 1539.1 639.7 1535.7 641.3C1532.2 642.9 1530.2 644.5 1527.5 647.7C1524.8 650.8 1522.2 656.1 1519.7 660.3C1517.1 664.6 1514.6 668.7 1512.0 673.3C1509.4 678.0 1506.6 683.8 1504.3 688.3C1502.1 692.8 1499.3 698.3 1498.3 700.3"/>
</g>
<g stroke="#7046b0" stroke-width="1.9">
<path d="M1594.2 639.6C1590.1 639.5 1577.6 639.0 1570.0 639.1C1562.4 639.1 1554.1 639.2 1548.3 639.9C1542.5 640.6 1538.8 641.6 1535.2 643.2C1531.6 644.9 1529.4 646.3 1526.7 649.6C1523.9 652.9 1521.2 658.8 1518.7 663.0C1516.1 667.2 1513.8 670.6 1511.3 675.0C1508.9 679.4 1506.2 684.9 1504.0 689.2C1501.8 693.4 1499.3 698.6 1498.3 700.5"/>
</g>
<g stroke="#834ab7" stroke-width="1.9">
<path d="M1594.2 641.5C1590.1 641.4 1577.6 640.9 1570.0 641.0C1562.4 641.1 1554.2 641.1 1548.3 641.8C1542.4 642.5 1538.4 643.6 1534.7 645.2C1530.9 646.8 1528.7 648.1 1525.8 651.5C1523.0 654.9 1520.2 661.5 1517.7 665.7C1515.1 669.9 1513.0 672.6 1510.7 676.7C1508.3 680.7 1505.7 686.0 1503.7 690.0C1501.6 694.0 1499.2 698.9 1498.3 700.7"/>
</g>
<g stroke="#9850bd" stroke-width="1.9">
<path d="M1594.2 643.4C1590.1 643.3 1577.6 642.9 1570.0 642.9C1562.4 643.0 1554.3 643.1 1548.3 643.8C1542.4 644.4 1538.1 645.5 1534.2 647.1C1530.3 648.7 1527.9 649.9 1525.0 653.4C1522.1 657.0 1519.2 664.2 1516.7 668.3C1514.2 672.5 1512.2 674.6 1510.0 678.3C1507.8 682.1 1505.3 687.1 1503.3 690.8C1501.4 694.6 1499.2 699.2 1498.3 700.8"/>
</g>
<g stroke="#ae55c4" stroke-width="1.9">
<path d="M1594.2 645.3C1590.1 645.2 1577.6 644.8 1570.0 644.8C1562.4 644.9 1554.4 645.0 1548.3 645.7C1542.3 646.4 1537.7 647.4 1533.7 649.0C1529.6 650.6 1527.2 651.7 1524.2 655.3C1521.2 659.0 1518.1 666.9 1515.7 671.0C1513.2 675.1 1511.4 676.6 1509.3 680.0C1507.2 683.4 1504.8 688.2 1503.0 691.7C1501.2 695.2 1499.1 699.4 1498.3 701.0"/>
</g>
<g stroke="#c45bcb" stroke-width="1.9">
<path d="M1594.0 660.8C1593.5 659.7 1593.1 656.1 1591.0 654.2C1588.9 652.2 1586.0 650.4 1581.7 649.2C1577.3 648.1 1570.6 647.5 1565.0 647.2C1559.4 647.0 1553.6 647.0 1548.3 647.6C1543.0 648.2 1537.3 649.3 1533.2 650.9C1529.0 652.5 1526.4 653.5 1523.3 657.2C1520.2 661.0 1517.1 669.6 1514.7 673.7C1512.2 677.7 1510.7 678.5 1508.7 681.7C1506.7 684.8 1504.4 689.2 1502.7 692.5C1500.9 695.8 1499.1 699.7 1498.3 701.2"/>
</g>
<g stroke="#cc5fcf" stroke-width="1.9">
<path d="M1594.0 664.5C1593.4 663.3 1592.6 659.6 1590.3 657.3C1588.1 655.1 1584.6 652.5 1580.3 651.2C1576.1 649.8 1570.3 649.4 1565.0 649.2C1559.7 648.9 1553.7 648.9 1548.3 649.5C1542.9 650.1 1537.0 651.2 1532.7 652.8C1528.4 654.4 1525.7 655.2 1522.5 659.2C1519.3 663.1 1516.1 672.3 1513.7 676.3C1511.2 680.4 1509.9 680.5 1508.0 683.3C1506.1 686.2 1503.9 690.3 1502.3 693.3C1500.7 696.3 1499.0 700.0 1498.3 701.3"/>
</g>
<g stroke="#d164d4" stroke-width="1.9">
<path d="M1594.0 668.2C1593.3 666.9 1592.2 663.0 1589.7 660.5C1587.2 658.0 1583.1 654.7 1579.0 653.1C1574.9 651.5 1570.1 651.4 1565.0 651.1C1559.9 650.8 1553.8 650.8 1548.3 651.4C1542.9 652.0 1536.6 653.1 1532.2 654.8C1527.7 656.4 1524.9 657.0 1521.7 661.1C1518.4 665.1 1515.1 675.0 1512.7 679.0C1510.3 683.0 1509.1 682.5 1507.3 685.0C1505.6 687.5 1503.5 691.4 1502.0 694.2C1500.5 696.9 1498.9 700.3 1498.3 701.5"/>
</g>
<g stroke="#d668d8" stroke-width="1.9">
<path d="M1594.0 671.8C1593.2 670.5 1591.7 666.5 1589.0 663.7C1586.3 660.9 1581.7 656.8 1577.7 655.0C1573.7 653.2 1569.9 653.3 1565.0 653.0C1560.1 652.7 1553.9 652.7 1548.3 653.3C1542.8 653.9 1536.2 655.1 1531.7 656.7C1527.1 658.3 1524.2 658.8 1520.8 663.0C1517.5 667.2 1514.0 677.7 1511.7 681.7C1509.3 685.6 1508.3 684.4 1506.7 686.7C1505.0 688.9 1503.1 692.5 1501.7 695.0C1500.3 697.5 1498.9 700.6 1498.3 701.7"/>
</g>
<g stroke="#db6cdc" stroke-width="1.9">
<path d="M1594.0 675.5C1593.1 674.1 1591.3 669.9 1588.3 666.8C1585.4 663.7 1580.2 658.9 1576.3 656.9C1572.4 654.9 1569.7 655.2 1565.0 654.9C1560.3 654.6 1554.0 654.6 1548.3 655.2C1542.7 655.9 1535.9 657.0 1531.2 658.6C1526.4 660.2 1523.4 660.6 1520.0 664.9C1516.6 669.2 1513.0 680.4 1510.7 684.3C1508.3 688.2 1507.6 686.4 1506.0 688.3C1504.4 690.2 1502.6 693.6 1501.3 695.8C1500.1 698.1 1498.8 700.8 1498.3 701.8"/>
</g>
<g stroke="#e070e0" stroke-width="1.9">
<path d="M1594.0 679.2C1592.9 677.6 1590.8 673.4 1587.7 670.0C1584.5 666.6 1578.8 661.0 1575.0 658.8C1571.2 656.6 1569.4 657.1 1565.0 656.8C1560.6 656.6 1554.1 656.6 1548.3 657.2C1542.6 657.8 1535.5 658.9 1530.7 660.5C1525.8 662.1 1522.7 662.4 1519.2 666.8C1515.7 671.2 1512.0 683.1 1509.7 687.0C1507.4 690.9 1506.8 688.4 1505.3 690.0C1503.9 691.6 1502.2 694.7 1501.0 696.7C1499.8 698.7 1498.8 701.1 1498.3 702.0"/>
</g>
<g stroke="#cf5fd0" stroke-width="2">
<path d="M1594.2 683.3C1593.5 681.8 1591.8 677.1 1590.0 674.2C1588.2 671.2 1586.1 668.1 1583.3 665.8C1580.6 663.5 1576.9 661.5 1573.3 660.3C1569.7 659.1 1565.8 658.9 1561.7 658.7C1557.5 658.5 1552.5 658.9 1548.3 659.2C1544.2 659.4 1540.3 659.2 1536.7 660.0C1533.1 660.8 1529.4 662.5 1526.7 664.2C1523.9 665.8 1521.9 667.6 1520.0 670.0C1518.1 672.4 1516.7 675.3 1515.0 678.3C1513.3 681.4 1511.7 685.3 1510.0 688.3C1508.3 691.4 1506.7 694.4 1505.0 696.7C1503.3 698.9 1500.8 700.8 1500.0 701.7M1425.0 701.3C1427.5 701.4 1434.2 701.9 1440.0 702.0C1445.8 702.1 1453.9 701.9 1460.0 701.7C1466.1 701.5 1471.7 701.2 1476.7 700.8C1481.7 700.5 1486.4 699.8 1490.0 699.7C1493.6 699.5 1496.9 699.9 1498.3 700.0"/>
</g>
<g stroke="#cf5fd0" stroke-width="2.4">
<path d="M1594.2 690.0C1592.1 690.3 1586.2 691.3 1581.7 691.7C1577.1 692.0 1571.9 692.4 1566.7 692.0C1561.4 691.6 1555.3 690.9 1550.0 689.2C1544.7 687.4 1539.2 683.7 1535.0 681.7C1530.8 679.6 1527.8 677.4 1525.0 677.0C1522.2 676.6 1520.1 677.6 1518.3 679.2C1516.5 680.8 1515.7 683.9 1514.2 686.7C1512.6 689.4 1511.0 693.3 1509.2 695.8C1507.4 698.4 1504.3 701.0 1503.3 702.0"/>
</g>
<g stroke="#e060a8" stroke-width="1.9">
<ellipse cx="1546.7" cy="679.7" rx="5.8" ry="3.7"/>
<path d="M1523.3 670.0C1523.9 668.2 1527.5 666.4 1531.7 665.8C1535.8 665.3 1543.6 665.7 1548.3 666.7C1553.1 667.6 1556.8 669.4 1560.0 671.7C1563.2 673.9 1566.7 677.5 1567.5 680.0C1568.3 682.5 1567.4 685.4 1565.0 686.7C1562.6 687.9 1557.5 688.1 1553.3 687.5C1549.2 686.9 1544.2 685.1 1540.0 683.3C1535.8 681.5 1531.1 678.9 1528.3 676.7C1525.6 674.4 1522.8 671.8 1523.3 670.0Z"/>
</g>
<g stroke="#cf5fd0" stroke-width="1.9">
<ellipse cx="1510.3" cy="621.7" rx="3.7" ry="2.0"/>
<path d="M1463.3 703.0C1465.0 703.1 1470.0 703.3 1473.3 703.3C1476.7 703.3 1481.7 703.1 1483.3 703.0"/>
</g>
<g stroke="#cf5fd0" stroke-width="1.9" clip-path="url(#cp_z11)">
<ellipse cx="1045.4" cy="773.3" rx="2.8" ry="5.0" transform="rotate(20 1045.4 773.3)"/>
<path d="M1040.0 756.7C1040.3 756.2 1040.6 755.4 1041.7 754.2C1042.8 752.9 1044.9 750.4 1046.7 749.2C1048.5 747.9 1050.8 746.8 1052.5 746.7C1054.2 746.5 1055.6 747.2 1056.7 748.3C1057.8 749.4 1058.5 751.4 1059.2 753.3C1059.9 755.3 1060.0 758.6 1060.8 760.0C1061.7 761.4 1062.8 761.9 1064.2 761.7C1065.6 761.4 1067.8 759.9 1069.2 758.3C1070.6 756.8 1072.2 754.4 1072.5 752.5C1072.8 750.6 1071.7 748.5 1070.8 746.7C1070.0 744.9 1067.9 743.3 1067.5 741.7C1067.1 740.0 1067.4 738.3 1068.3 736.7C1069.3 735.0 1071.1 732.9 1073.3 731.7C1075.6 730.4 1078.2 729.7 1081.7 729.2C1085.1 728.6 1090.0 728.2 1094.2 728.3C1098.3 728.5 1102.9 729.3 1106.7 730.0C1110.4 730.7 1113.6 731.5 1116.7 732.5C1119.7 733.5 1122.5 734.9 1125.0 735.8C1127.5 736.8 1128.5 737.9 1131.7 738.3C1134.9 738.8 1140.0 738.5 1144.2 738.3C1148.3 738.2 1152.5 737.6 1156.7 737.5C1160.8 737.4 1165.3 737.2 1169.2 737.5C1173.1 737.8 1177.1 738.6 1180.0 739.6C1182.9 740.6 1184.9 741.6 1186.7 743.3C1188.5 745.1 1189.6 747.8 1190.8 750.0C1192.1 752.2 1193.2 755.1 1194.2 756.7C1195.1 758.3 1196.2 759.1 1196.7 759.6M1040.0 764.2C1040.7 763.5 1042.6 761.0 1044.2 760.0C1045.7 759.0 1047.6 758.2 1049.2 758.3C1050.7 758.5 1052.2 759.4 1053.3 760.8C1054.4 762.2 1054.9 765.1 1055.8 766.7C1056.8 768.2 1057.8 770.0 1059.2 770.0C1060.6 770.0 1062.8 768.1 1064.2 766.7C1065.6 765.3 1066.9 762.5 1067.5 761.7M1040.0 794.2C1040.7 793.3 1042.6 790.3 1044.2 789.2C1045.7 788.0 1047.5 787.1 1049.2 787.1C1050.8 787.1 1052.5 788.4 1054.2 789.2C1055.8 789.9 1057.4 791.4 1059.2 791.7C1061.0 791.9 1064.0 791.0 1065.0 790.8M1043.3 800.0C1043.6 799.3 1043.9 796.9 1045.0 795.8C1046.1 794.7 1048.2 793.6 1050.0 793.3C1051.8 793.1 1054.9 794.0 1055.8 794.2M1047.5 799.2C1047.8 798.9 1048.3 797.8 1049.2 797.5C1050.0 797.2 1052.2 796.8 1052.5 797.1C1052.8 797.4 1051.4 798.5 1050.8 799.2C1050.3 799.8 1048.9 800.4 1049.2 800.8C1049.4 801.2 1051.9 801.5 1052.5 801.7M1040.0 804.2C1041.1 804.0 1044.6 803.1 1046.7 802.9C1048.8 802.8 1051.5 803.3 1052.5 803.3M1040.0 728.3C1041.4 728.2 1045.6 728.1 1048.3 727.5C1051.1 726.9 1055.3 725.4 1056.7 725.0M1198.3 743.3C1198.2 744.2 1197.2 746.8 1197.5 748.3C1197.8 749.9 1199.6 751.8 1200.0 752.5"/>
</g>
<g stroke="#e070dc" stroke-width="1.9" clip-path="url(#cp_z11)">
<path d="M1190.8 759.2C1190.4 757.9 1189.3 754.0 1188.3 751.7C1187.4 749.3 1186.5 746.7 1185.0 745.0C1183.5 743.3 1181.8 742.2 1179.2 741.2C1176.5 740.3 1172.9 739.5 1169.2 739.2C1165.4 738.8 1160.8 739.0 1156.7 739.2C1152.5 739.4 1148.3 740.3 1144.2 740.4C1140.0 740.6 1135.4 740.6 1131.7 740.0C1127.9 739.4 1125.1 737.8 1121.7 736.7C1118.2 735.6 1114.7 734.2 1110.8 733.3C1106.9 732.5 1102.4 731.9 1098.3 731.7C1094.3 731.5 1089.9 731.7 1086.7 732.1C1083.5 732.5 1081.1 733.3 1079.2 734.2C1077.2 735.1 1075.8 736.2 1075.0 737.5C1074.2 738.8 1073.9 740.0 1074.2 741.7C1074.4 743.3 1076.0 745.6 1076.7 747.5C1077.4 749.4 1078.6 751.2 1078.3 753.3C1078.1 755.4 1076.5 758.1 1075.0 760.0C1073.5 761.9 1071.1 763.1 1069.2 765.0C1067.2 766.9 1065.1 769.4 1063.3 771.7C1061.5 773.9 1059.3 776.2 1058.3 778.3C1057.4 780.4 1057.1 782.5 1057.5 784.2C1057.9 785.8 1059.2 787.4 1060.8 788.3C1062.5 789.2 1064.7 789.4 1067.5 789.6C1070.3 789.7 1074.3 789.0 1077.5 789.2C1080.7 789.4 1083.9 790.4 1086.7 790.8C1089.4 791.2 1091.9 791.8 1094.2 791.7C1096.4 791.5 1097.9 791.0 1100.0 790.0C1102.1 789.0 1104.2 787.2 1106.7 785.8C1109.2 784.4 1112.2 782.9 1115.0 781.7C1117.8 780.4 1120.6 779.3 1123.3 778.3C1126.1 777.4 1128.9 776.5 1131.7 775.8C1134.4 775.1 1137.4 774.2 1140.0 774.2C1142.6 774.2 1145.7 775.1 1147.5 775.8C1149.3 776.5 1150.6 777.1 1150.8 778.3C1151.1 779.6 1149.7 781.8 1149.2 783.3C1148.6 784.9 1147.2 786.4 1147.5 787.5C1147.8 788.6 1149.9 789.3 1150.8 790.0C1151.8 790.7 1152.9 791.4 1153.3 791.7M1186.7 756.7C1186.2 755.6 1185.3 751.9 1184.2 750.0C1183.1 748.1 1182.1 746.4 1180.0 745.0C1177.9 743.6 1174.9 742.4 1171.7 741.7C1168.5 740.9 1164.7 740.6 1160.8 740.4C1156.9 740.3 1152.5 740.6 1148.3 740.8C1144.2 741.0 1140.0 741.8 1135.8 741.7C1131.7 741.5 1127.5 740.7 1123.3 740.0C1119.2 739.3 1115.0 738.1 1110.8 737.5C1106.7 736.9 1102.1 736.7 1098.3 736.7C1094.6 736.7 1091.0 736.9 1088.3 737.5C1085.7 738.1 1083.8 739.0 1082.5 740.0C1081.2 741.0 1081.2 741.7 1080.8 743.3C1080.4 745.0 1080.4 747.8 1080.0 750.0C1079.6 752.2 1079.4 754.4 1078.3 756.7C1077.2 758.9 1075.3 761.1 1073.3 763.3C1071.4 765.6 1068.8 767.8 1066.7 770.0C1064.6 772.2 1062.2 774.4 1060.8 776.7C1059.5 778.9 1058.6 781.5 1058.8 783.3C1058.9 785.1 1061.2 786.8 1061.7 787.5M1150.8 778.3C1151.4 777.9 1153.2 776.7 1154.2 775.8C1155.1 775.0 1156.2 773.8 1156.7 773.3M1150.8 783.3C1151.5 782.6 1153.5 780.4 1154.6 779.2C1155.7 777.9 1157.0 776.4 1157.5 775.8"/>
</g>
<g stroke="#e868b8" stroke-width="1.9" clip-path="url(#cp_z11)">
<path d="M1087.5 774.2C1087.8 773.0 1088.5 771.7 1090.0 770.0C1091.5 768.3 1094.4 766.0 1096.7 764.2C1098.9 762.4 1101.0 760.3 1103.3 759.2C1105.7 758.0 1107.8 757.4 1110.8 757.1C1113.9 756.8 1118.3 757.2 1121.7 757.5C1125.0 757.8 1128.3 757.9 1130.8 758.8C1133.3 759.6 1135.3 761.0 1136.7 762.5C1138.0 764.0 1138.9 766.0 1138.8 767.5C1138.6 769.0 1137.6 770.6 1135.8 771.7C1134.1 772.8 1131.1 773.5 1128.3 774.2C1125.6 774.8 1122.4 775.3 1119.2 775.4C1116.0 775.5 1112.1 774.5 1109.2 774.6C1106.2 774.7 1103.9 775.2 1101.7 775.8C1099.4 776.5 1097.6 777.8 1095.8 778.3C1094.0 778.9 1092.2 779.4 1090.8 779.2C1089.5 779.0 1088.5 777.9 1087.9 777.1C1087.4 776.2 1087.2 775.3 1087.5 774.2Z"/>
</g>
<g stroke="#e070dc" stroke-width="4" clip-path="url(#cp_z11)">
<path d="M1059.2 794.3C1060.6 793.8 1064.4 791.9 1067.5 791.2C1070.6 790.6 1074.3 790.3 1077.5 790.4C1080.7 790.5 1083.9 791.4 1086.7 791.9C1089.4 792.4 1092.2 793.1 1094.2 793.5C1096.2 793.9 1098.0 794.2 1098.8 794.3"/>
</g>
<g stroke="#4a40a2" stroke-width="2.4" clip-path="url(#cp_z11)">
<path d="M1069.2 793.5C1070.6 793.3 1074.6 792.3 1077.5 792.3C1080.4 792.4 1085.1 793.6 1086.7 793.8"/>
</g>
<g stroke="#e8ffff" stroke-width="1" clip-path="url(#cp_z11)">
<path d="M1123.3 791.7C1124.4 790.8 1128.1 788.1 1130.0 786.7C1131.9 785.3 1133.3 784.2 1135.0 783.3C1136.7 782.5 1139.2 781.9 1140.0 781.7M1126.7 792.9C1127.6 792.3 1130.7 790.3 1132.5 789.2C1134.3 788.0 1136.0 786.7 1137.5 785.8C1139.0 785.0 1140.6 784.4 1141.2 784.2M1130.8 793.8C1131.7 793.3 1134.3 791.7 1135.8 790.8C1137.4 789.9 1139.3 788.8 1140.0 788.3"/>
</g>
<g stroke="#b858c8" stroke-width="2.2" clip-path="url(#cp_z11)">
<path d="M1098.8 794.3C1099.8 793.4 1102.6 790.5 1105.0 788.8C1107.4 787.0 1110.4 785.2 1113.3 783.8C1116.2 782.3 1119.5 781.2 1122.5 780.0C1125.5 778.8 1128.3 777.6 1131.2 776.8C1134.2 776.0 1137.4 775.2 1140.0 775.2C1142.6 775.1 1145.0 776.0 1146.7 776.7C1148.3 777.3 1149.4 778.8 1150.0 779.2"/>
</g>
<g stroke="#3aa8b0" stroke-width="2.2" clip-path="url(#cp_z11)">
<ellipse cx="1168.0" cy="772.7" rx="2.2" ry="1.0"/>
</g>
<g stroke="#ffffff" stroke-width="1.8" clip-path="url(#cp_z11)">
<path d="M1165.2 761.5C1166.5 761.5 1171.3 761.5 1172.5 761.5M1164.8 766.0C1166.0 766.0 1170.8 766.0 1172.0 766.0"/>
</g>
<g stroke="#e878dc" stroke-width="1" clip-path="url(#cp_z11)">
<path d="M1178.3 758.3C1178.8 759.3 1180.6 761.9 1180.8 764.2C1181.1 766.4 1180.6 769.4 1180.0 771.7C1179.4 773.9 1177.9 776.5 1177.5 777.5M1181.7 758.3C1182.0 759.4 1183.5 762.6 1183.8 765.0C1184.0 767.4 1183.4 770.4 1182.9 772.5C1182.4 774.6 1181.2 776.7 1180.8 777.5"/>
</g>
<g stroke="#b858c8" stroke-width="1.9" clip-path="url(#cp_z11)">
<path d="M1040.0 736.7C1041.1 736.2 1043.9 735.0 1046.7 734.2C1049.4 733.3 1053.6 732.8 1056.7 731.7C1059.7 730.6 1063.2 728.6 1065.0 727.5C1066.8 726.4 1067.1 725.4 1067.5 725.0M1120.0 725.0C1121.2 725.7 1124.9 728.1 1127.5 729.2C1130.1 730.3 1132.4 731.1 1135.8 731.7C1139.3 732.2 1143.5 732.5 1148.3 732.5C1153.2 732.5 1159.4 731.9 1165.0 731.7C1170.6 731.4 1175.8 731.5 1181.7 730.8C1187.5 730.1 1196.9 728.1 1200.0 727.5"/>
</g>
<g stroke="#9a4fc0" stroke-width="1.9" clip-path="url(#cp_z11)">
<path d="M1146.7 725.0C1148.3 725.4 1152.2 726.9 1156.7 727.5C1161.1 728.1 1167.8 728.3 1173.3 728.3C1178.9 728.3 1185.6 727.9 1190.0 727.5C1194.4 727.1 1198.3 726.1 1200.0 725.8"/>
</g>
<g stroke="#7a48b4" stroke-width="1.9">
<path d="M1130.0 715.7C1127.6 715.3 1120.3 713.8 1115.8 713.3C1111.4 712.9 1106.0 713.1 1103.3 713.1C1100.7 713.1 1100.6 713.2 1100.0 713.2"/>
</g>
</svg></div>
</div>
<div id="hsep"></div>
<div id="status">
  <div class="sp" style="left:0;width:98px"><span style="left:5.5px">MapsID: 3860</span></div>
  <div class="sp" style="left:101px;width:78px"><span>png</span></div>
  <div class="sp" style="left:181px;width:98px"><span>MinZoom: 8</span></div>
  <div class="sp" style="left:281px;width:98px"><span>MaxZoom: 18</span></div>
  <div class="sp" style="left:381px;width:98px"><span>TileSize: 256</span></div>
  <div class="sp" style="left:481px;width:98px"><span>EPSG:3857</span></div>
  <div class="sp" style="left:581px;width:1338px"><span>Longitude=10.189819, Latitude=47.282956, tile=8/135/89.png</span></div>
</div>
</body></html>
